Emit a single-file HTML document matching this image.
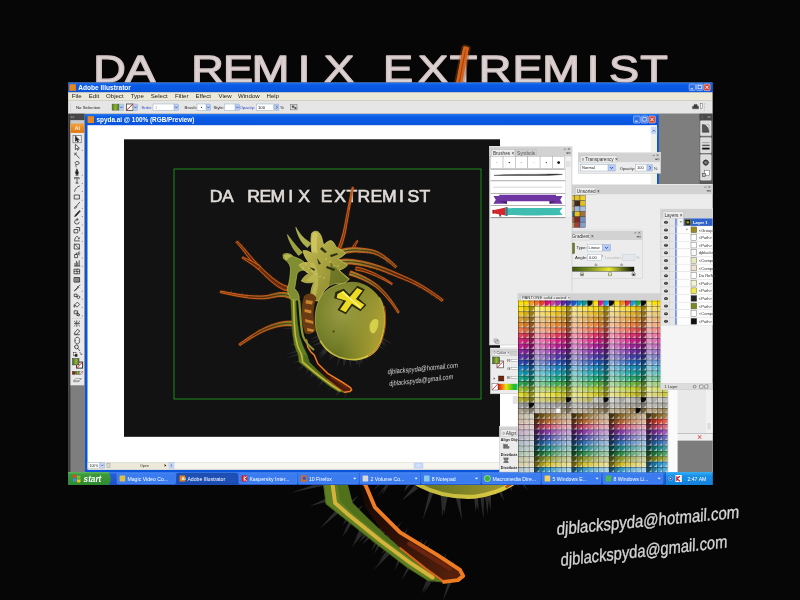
<!DOCTYPE html>
<html lang="en"><head><meta charset="utf-8"><title>DA REMIX EXTREMIST</title>
<style>
html,body{margin:0;padding:0;background:#060606;overflow:hidden}
svg{display:block;filter:blur(0.45px)}
text{white-space:pre}
</style></head><body>
<svg width="800" height="600" viewBox="0 0 800 600">
<defs><radialGradient id="abdo" cx="0.42" cy="0.38" r="0.72"><stop offset="0" stop-color="#9c9c42"/><stop offset="0.5" stop-color="#7c842e"/><stop offset="0.85" stop-color="#66721f"/><stop offset="1" stop-color="#6c7420"/></radialGradient><linearGradient id="abdo2" x1="0" y1="0" x2="1" y2="0.25"><stop offset="0.55" stop-color="#b8a838" stop-opacity="0"/><stop offset="1" stop-color="#bcaa38" stop-opacity="0.75"/></linearGradient><linearGradient id="legin" gradientUnits="userSpaceOnUse" x1="310" y1="350" x2="348" y2="390"><stop offset="0" stop-color="#0c0604"/><stop offset="0.45" stop-color="#2a0e06"/><stop offset="1" stop-color="#54200c"/></linearGradient><linearGradient id="lgR" gradientUnits="userSpaceOnUse" x1="335" y1="0" x2="400" y2="0"><stop offset="0" stop-color="#a8a03c"/><stop offset="0.5" stop-color="#86702a"/><stop offset="1" stop-color="#74300e"/></linearGradient><linearGradient id="lgL" gradientUnits="userSpaceOnUse" x1="292" y1="0" x2="240" y2="0"><stop offset="0" stop-color="#7c8c2c"/><stop offset="0.4" stop-color="#7a5a1c"/><stop offset="1" stop-color="#8a3c10"/></linearGradient><linearGradient id="rim" x1="1" y1="0" x2="0" y2="1"><stop offset="0" stop-color="#a89c30"/><stop offset="0.5" stop-color="#e2d040"/><stop offset="1" stop-color="#b8b040"/></linearGradient><linearGradient id="ceph" x1="0" y1="0" x2="1" y2="1"><stop offset="0" stop-color="#c8c058"/><stop offset="0.5" stop-color="#a6a03e"/><stop offset="1" stop-color="#7e8028"/></linearGradient><g id="spyup"><path d="M340.2 249.5 L340.9 247.6 L341.6 245.7 L342.3 243.8 L342.9 241.7 L343.5 239.7 L344.1 237.6 L344.6 235.5 L345.1 233.4 L345.6 231.3 L346.0 229.2 L346.5 225.8 L347.2 222.2 L347.8 218.5 L348.5 214.5 L349.2 210.4 L349.9 206.2 L350.7 201.8 L351.6 197.2 L352.5 192.4 L353.4 187.5 L352.2 187.3 L351.1 192.2 L350.2 196.9 L349.3 201.5 L348.4 205.9 L347.6 210.2 L346.8 214.2 L346.1 218.1 L345.4 221.9 L344.7 225.4 L344.0 228.8 L343.6 230.9 L343.1 232.9 L342.5 235.0 L341.9 237.0 L341.3 239.0 L340.7 241.0 L340.0 243.0 L339.3 244.9 L338.5 246.7 L337.8 248.5Z" fill="none" stroke="#7a3a10" stroke-opacity="0.3" stroke-width="2.4" stroke-linejoin="round"/><path d="M340.2 249.5 L340.9 247.6 L341.6 245.7 L342.3 243.8 L342.9 241.7 L343.5 239.7 L344.1 237.6 L344.6 235.5 L345.1 233.4 L345.6 231.3 L346.0 229.2 L346.5 225.8 L347.2 222.2 L347.8 218.5 L348.5 214.5 L349.2 210.4 L349.9 206.2 L350.7 201.8 L351.6 197.2 L352.5 192.4 L353.4 187.5 L352.2 187.3 L351.1 192.2 L350.2 196.9 L349.3 201.5 L348.4 205.9 L347.6 210.2 L346.8 214.2 L346.1 218.1 L345.4 221.9 L344.7 225.4 L344.0 228.8 L343.6 230.9 L343.1 232.9 L342.5 235.0 L341.9 237.0 L341.3 239.0 L340.7 241.0 L340.0 243.0 L339.3 244.9 L338.5 246.7 L337.8 248.5Z" fill="#a8440e" stroke="#d8641c" stroke-width="0.9" stroke-linejoin="round"/><path d="M339.0 249.0 L339.7 247.2 L340.4 245.3 L341.1 243.4 L341.8 241.4 L342.4 239.4 L343.0 237.3 L343.6 235.3 L344.1 233.2 L344.6 231.1 L345.0 229.0 L345.6 225.6 L346.3 222.0 L346.9 218.3 L347.6 214.4 L348.4 210.3" fill="none" stroke="#3c1608" stroke-opacity="0.7" stroke-width="0.54" stroke-linecap="round"/></g><g id="spy"><path d="M343.1 358.3 L343.7 367.2 L344.9 358.7z" fill="#2b2b2b"/><path d="M344.2 358.6 L343.4 367.1 L346.0 359.0z" fill="#2b2b2b"/><path d="M324.4 348.3 L320.3 355.6 L325.8 349.4z" fill="#2b2b2b"/><path d="M370.3 352.1 L373.1 356.1 L371.9 351.2z" fill="#2b2b2b"/><path d="M320.9 341.3 L312.2 346.7 L321.6 342.9z" fill="#2b2b2b"/><path d="M319.1 337.4 L311.0 343.5 L319.9 339.1z" fill="#2b2b2b"/><path d="M360.0 357.3 L361.0 366.5 L361.8 357.0z" fill="#2b2b2b"/><path d="M318.2 335.4 L308.7 339.8 L318.9 337.0z" fill="#2b2b2b"/><path d="M324.7 348.6 L320.0 354.1 L326.1 349.7z" fill="#2b2b2b"/><path d="M344.1 358.5 L344.4 366.5 L345.8 359.0z" fill="#2b2b2b"/><path d="M348.7 359.4 L351.3 368.8 L350.5 359.1z" fill="#2b2b2b"/><path d="M360.8 357.2 L362.2 365.1 L362.5 356.9z" fill="#2b2b2b"/><path d="M381.4 338.9 L394.6 345.2 L382.4 337.4z" fill="#2b2b2b"/><path d="M364.2 355.7 L367.5 361.3 L365.7 354.8z" fill="#2b2b2b"/><path d="M330.6 353.3 L329.0 357.7 L332.0 354.4z" fill="#2b2b2b"/><path d="M338.8 357.2 L336.2 368.5 L340.5 357.6z" fill="#2b2b2b"/><path d="M379.5 341.8 L386.7 347.4 L380.5 340.3z" fill="#2b2b2b"/><path d="M325.9 349.5 L318.9 359.4 L327.3 350.6z" fill="#2b2b2b"/><path d="M380.6 340.2 L385.8 343.6 L381.6 338.7z" fill="#2b2b2b"/><path d="M358.0 357.7 L359.5 368.3 L359.8 357.4z" fill="#2b2b2b"/><path d="M320.8 341.0 L316.4 344.8 L321.5 342.6z" fill="#2b2b2b"/><path d="M367.8 353.6 L370.6 357.7 L369.4 352.7z" fill="#2b2b2b"/><path d="M321.3 342.1 L318.0 344.9 L322.0 343.7z" fill="#2b2b2b"/><path d="M324.0 348.0 L318.8 355.6 L325.4 349.1z" fill="#2b2b2b"/><path d="M324.7 348.6 L317.0 357.3 L326.1 349.7z" fill="#2b2b2b"/><path d="M359.2 357.5 L360.8 362.5 L361.0 357.2z" fill="#2b2b2b"/><path d="M326.1 349.7 L324.2 355.3 L327.5 350.8z" fill="#2b2b2b"/><path d="M371.1 351.7 L376.6 357.2 L372.6 350.8z" fill="#2b2b2b"/><path d="M325.9 349.6 L323.2 356.0 L327.3 350.7z" fill="#2b2b2b"/><path d="M359.0 357.5 L362.1 362.4 L360.8 357.2z" fill="#2b2b2b"/><path d="M326.1 349.7 L323.6 355.3 L327.5 350.8z" fill="#2b2b2b"/><path d="M333.0 355.2 L328.1 361.1 L334.4 356.4z" fill="#2b2b2b"/><path d="M320.9 341.2 L311.7 345.9 L321.6 342.8z" fill="#2b2b2b"/><path d="M355.6 358.1 L357.6 365.3 L357.4 357.8z" fill="#2b2b2b"/><path d="M379.5 341.7 L387.3 345.6 L380.5 340.2z" fill="#2b2b2b"/><path d="M375.1 348.4 L379.4 350.8 L376.1 346.9z" fill="#2b2b2b"/><path d="M377.1 345.3 L385.5 350.8 L378.1 343.8z" fill="#2b2b2b"/><path d="M324.7 348.5 L321.1 357.3 L326.1 349.7z" fill="#2b2b2b"/><path d="M325.1 348.9 L320.5 359.1 L326.5 350.0z" fill="#2b2b2b"/><path d="M355.8 358.1 L356.5 365.7 L357.6 357.8z" fill="#2b2b2b"/><path d="M294.3 327.0 L281.2 329.0 L294.5 328.8z" fill="#2b2b2b"/><path d="M325.6 377.8 L324.1 383.4 L327.1 378.7z" fill="#2b2b2b"/><path d="M317.0 372.2 L312.9 377.9 L318.4 373.3z" fill="#2b2b2b"/><path d="M326.9 378.5 L324.6 382.9 L328.4 379.5z" fill="#2b2b2b"/><path d="M314.0 370.0 L308.9 379.2 L315.5 371.1z" fill="#2b2b2b"/><path d="M298.1 350.0 L286.0 354.6 L298.7 351.7z" fill="#2b2b2b"/><path d="M294.1 324.8 L287.9 326.3 L294.3 326.6z" fill="#2b2b2b"/><path d="M294.5 329.2 L288.9 330.6 L294.7 330.9z" fill="#2b2b2b"/><path d="M315.1 370.8 L312.4 375.4 L316.5 371.9z" fill="#2b2b2b"/><path d="M339.6 385.8 L336.0 396.8 L341.2 386.6z" fill="#2b2b2b"/><path d="M324.5 377.1 L319.1 384.9 L326.1 378.0z" fill="#2b2b2b"/><path d="M294.3 326.6 L291.1 327.9 L294.4 328.4z" fill="#2b2b2b"/><path d="M325.3 377.6 L317.1 388.0 L326.8 378.5z" fill="#2b2b2b"/><path d="M320.1 374.3 L317.6 381.5 L321.7 375.3z" fill="#2b2b2b"/><path d="M299.3 353.3 L285.7 358.1 L299.9 355.0z" fill="#2b2b2b"/><path d="M313.0 369.2 L309.7 377.7 L314.4 370.3z" fill="#2b2b2b"/><path d="M328.2 379.4 L325.3 388.0 L329.7 380.3z" fill="#2b2b2b"/><path d="M341.2 386.6 L339.6 393.1 L342.9 387.4z" fill="#2b2b2b"/><path d="M340.3 386.1 L335.7 396.3 L341.9 386.9z" fill="#2b2b2b"/><path d="M332.5 382.0 L327.9 391.8 L334.0 383.0z" fill="#2b2b2b"/><path d="M319.2 373.8 L316.5 380.2 L320.8 374.7z" fill="#2b2b2b"/><path d="M317.9 373.0 L316.6 377.4 L319.5 373.9z" fill="#2b2b2b"/><path d="M346.7 389.4 L343.9 399.6 L348.3 390.2z" fill="#2b2b2b"/><path d="M301.4 359.2 L292.7 363.3 L302.0 360.9z" fill="#2b2b2b"/><path d="M304.5 362.9 L296.6 372.0 L306.0 364.0z" fill="#2b2b2b"/><path d="M329.3 380.0 L328.0 384.1 L330.8 381.0z" fill="#2b2b2b"/><path d="M307.8 365.3 L305.6 370.5 L309.2 366.4z" fill="#2b2b2b"/><path d="M309.1 366.3 L306.3 374.0 L310.5 367.4z" fill="#2b2b2b"/><path d="M297.4 347.9 L293.4 350.1 L298.0 349.6z" fill="#2b2b2b"/><path d="M323.5 376.4 L320.3 381.7 L325.0 377.4z" fill="#2b2b2b"/><path d="M340.6 386.3 L337.0 395.0 L342.2 387.1z" fill="#2b2b2b"/><path d="M339.6 385.8 L338.0 392.1 L341.2 386.6z" fill="#2b2b2b"/><path d="M295.9 343.0 L289.7 344.6 L296.1 344.7z" fill="#2b2b2b"/><path d="M341.2 386.6 L336.4 396.9 L342.8 387.4z" fill="#2b2b2b"/><path d="M315.9 371.4 L311.5 377.2 L317.4 372.5z" fill="#2b2b2b"/><path d="M309.0 366.2 L305.2 375.3 L310.4 367.3z" fill="#2b2b2b"/><path d="M326.1 378.1 L330.5 371.2 L327.7 379.0z" fill="#2b2b2b"/><path d="M295.6 340.0 L300.7 340.3 L295.8 341.8z" fill="#2b2b2b"/><path d="M296.1 344.3 L301.9 343.4 L296.7 346.0z" fill="#2b2b2b"/><path d="M308.8 366.1 L313.3 362.7 L310.2 367.2z" fill="#2b2b2b"/><path d="M345.9 389.0 L348.1 384.3 L347.5 389.8z" fill="#2b2b2b"/><path d="M294.2 326.3 L300.6 326.3 L294.4 328.0z" fill="#2b2b2b"/><path d="M325.9 378.0 L329.5 373.0 L327.5 378.9z" fill="#2b2b2b"/><path d="M332.6 382.1 L334.4 379.9 L334.1 383.1z" fill="#2b2b2b"/><path d="M305.7 363.7 L308.8 361.8 L307.1 364.8z" fill="#2b2b2b"/><path d="M296.8 346.3 L299.9 345.9 L297.4 348.0z" fill="#2b2b2b"/><path d="M319.6 374.0 L323.7 369.6 L321.1 374.9z" fill="#2b2b2b"/><path d="M321.6 375.3 L328.4 369.1 L323.2 376.2z" fill="#2b2b2b"/><path d="M324.0 376.7 L326.9 373.7 L325.5 377.7z" fill="#2b2b2b"/><path d="M295.7 341.0 L298.8 341.6 L295.9 342.8z" fill="#2b2b2b"/><path d="M326.4 378.2 L328.8 375.3 L327.9 379.2z" fill="#2b2b2b"/><path d="M300.1 355.5 L307.2 354.0 L300.7 357.2z" fill="#2b2b2b"/><path d="M318.4 373.2 L322.7 367.3 L319.9 374.2z" fill="#2b2b2b"/><path d="M332.6 382.1 L336.1 375.4 L334.1 383.1z" fill="#2b2b2b"/><path d="M342.5 387.2 L345.2 381.1 L344.1 388.0z" fill="#2b2b2b"/><path d="M305.6 363.7 L311.7 358.8 L307.0 364.8z" fill="#2b2b2b"/><path d="M301.0 358.2 L308.6 356.9 L301.6 359.9z" fill="#2b2b2b"/><path d="M333.0 382.4 L338.2 375.5 L334.5 383.3z" fill="#2b2b2b"/><path d="M321.3 375.1 L324.8 372.0 L322.9 376.0z" fill="#2b2b2b"/><path d="M334.5 383.2 L339.1 377.5 L336.1 384.0z" fill="#2b2b2b"/><path d="M278.2 295.6 L279.4 290.6 L276.5 295.3z" fill="#2b2b2b"/><path d="M224.2 292.4 L224.6 288.7 L222.5 292.1z" fill="#2b2b2b"/><path d="M271.1 295.7 L270.2 291.0 L269.3 296.0z" fill="#2b2b2b"/><path d="M269.2 296.0 L267.9 294.2 L267.4 296.3z" fill="#2b2b2b"/><path d="M254.7 297.5 L254.4 293.0 L252.9 297.3z" fill="#2b2b2b"/><path d="M290.1 297.8 L289.0 293.2 L288.3 297.5z" fill="#2b2b2b"/><path d="M234.9 294.6 L234.3 292.1 L233.1 294.2z" fill="#2b2b2b"/><path d="M235.6 294.7 L234.8 292.3 L233.8 294.4z" fill="#2b2b2b"/><path d="M257.5 297.9 L257.9 293.6 L255.7 297.7z" fill="#2b2b2b"/><path d="M243.0 295.9 L242.8 290.7 L241.2 295.6z" fill="#2b2b2b"/><path d="M225.9 292.8 L225.2 290.6 L224.2 292.4z" fill="#2b2b2b"/><path d="M256.7 297.8 L256.5 294.9 L254.9 297.6z" fill="#2b2b2b"/><path d="M247.2 296.5 L247.5 292.8 L245.4 296.2z" fill="#2b2b2b"/><path d="M253.9 297.4 L253.2 294.5 L252.1 297.2z" fill="#2b2b2b"/><path d="M232.2 294.0 L231.5 289.1 L230.4 293.7z" fill="#2b2b2b"/><path d="M231.8 294.0 L232.0 288.8 L230.1 293.6z" fill="#2b2b2b"/><path d="M252.8 297.3 L252.3 294.7 L251.0 297.0z" fill="#2b2b2b"/><path d="M258.6 298.1 L257.4 294.1 L256.8 297.8z" fill="#2b2b2b"/><path d="M242.5 343.5 L239.7 340.9 L240.9 344.4z" fill="#2b2b2b"/><path d="M251.9 337.8 L249.2 335.1 L250.4 338.7z" fill="#2b2b2b"/><path d="M258.1 334.0 L256.3 332.8 L256.5 335.0z" fill="#2b2b2b"/><path d="M272.8 326.9 L272.0 322.2 L271.1 327.3z" fill="#2b2b2b"/><path d="M279.5 325.5 L277.3 322.4 L277.7 325.9z" fill="#2b2b2b"/><path d="M271.9 327.1 L271.0 322.8 L270.2 327.5z" fill="#2b2b2b"/><path d="M270.0 327.6 L268.0 325.0 L268.2 328.0z" fill="#2b2b2b"/><path d="M262.2 331.5 L257.9 327.7 L260.6 332.5z" fill="#2b2b2b"/><path d="M253.1 337.0 L251.1 335.9 L251.6 338.0z" fill="#2b2b2b"/><path d="M281.4 325.1 L279.3 321.2 L279.7 325.5z" fill="#2b2b2b"/><path d="M275.5 326.4 L273.0 322.7 L273.8 326.7z" fill="#2b2b2b"/><path d="M255.8 335.4 L254.0 334.0 L254.3 336.3z" fill="#2b2b2b"/><path d="M280.4 325.3 L279.0 323.1 L278.6 325.7z" fill="#2b2b2b"/><path d="M271.8 327.2 L270.1 324.4 L270.0 327.6z" fill="#2b2b2b"/><path d="M267.1 328.5 L264.8 327.0 L265.6 329.5z" fill="#2b2b2b"/><path d="M261.4 332.0 L258.6 329.1 L259.9 332.9z" fill="#2b2b2b"/><path d="M243.8 250.1 L246.6 247.1 L242.7 248.7z" fill="#2b2b2b"/><path d="M268.8 277.2 L271.5 273.7 L267.5 276.0z" fill="#2b2b2b"/><path d="M241.7 247.6 L242.8 245.2 L240.5 246.2z" fill="#2b2b2b"/><path d="M240.8 246.6 L242.6 244.4 L239.7 245.2z" fill="#2b2b2b"/><path d="M242.3 248.3 L243.0 246.3 L241.1 246.9z" fill="#2b2b2b"/><path d="M249.1 256.4 L249.9 254.1 L247.9 255.0z" fill="#2b2b2b"/><path d="M244.6 251.1 L246.7 248.5 L243.5 249.7z" fill="#2b2b2b"/><path d="M272.9 281.1 L274.5 278.4 L271.6 279.8z" fill="#2b2b2b"/><path d="M277.0 285.0 L278.1 282.7 L275.7 283.7z" fill="#2b2b2b"/><path d="M241.3 247.1 L243.4 243.4 L240.1 245.7z" fill="#2b2b2b"/><path d="M258.3 267.4 L260.8 264.1 L257.2 266.0z" fill="#2b2b2b"/><path d="M250.8 258.4 L251.4 256.3 L249.6 257.0z" fill="#2b2b2b"/><path d="M273.6 281.8 L274.2 279.9 L272.3 280.6z" fill="#2b2b2b"/><path d="M258.0 266.9 L259.4 264.1 L256.8 265.6z" fill="#2b2b2b"/><path d="M270.6 279.0 L271.9 276.7 L269.3 277.7z" fill="#2b2b2b"/><path d="M238.0 243.2 L240.0 239.5 L236.8 241.8z" fill="#2b2b2b"/><path d="M359.5 250.2 L359.6 254.7 L361.2 250.5z" fill="#2b2b2b"/><path d="M386.3 259.9 L385.5 262.4 L387.8 260.9z" fill="#2b2b2b"/><path d="M376.9 252.9 L376.1 255.7 L378.3 254.0z" fill="#2b2b2b"/><path d="M357.6 249.9 L358.6 253.6 L359.4 250.2z" fill="#2b2b2b"/><path d="M364.0 250.9 L364.8 253.9 L365.8 251.2z" fill="#2b2b2b"/><path d="M372.5 252.3 L372.7 254.5 L374.3 252.6z" fill="#2b2b2b"/><path d="M376.8 252.8 L376.9 254.6 L378.2 253.9z" fill="#2b2b2b"/><path d="M387.7 260.9 L387.0 264.4 L389.2 262.0z" fill="#2b2b2b"/><path d="M381.2 256.1 L380.4 258.8 L382.6 257.2z" fill="#2b2b2b"/><path d="M376.4 252.6 L375.2 256.7 L377.9 253.7z" fill="#2b2b2b"/><path d="M366.9 251.4 L367.7 255.7 L368.7 251.7z" fill="#2b2b2b"/><path d="M386.8 260.2 L385.0 264.0 L388.3 261.3z" fill="#2b2b2b"/><path d="M431.3 293.3 L430.3 297.3 L432.8 294.3z" fill="#2b2b2b"/><path d="M418.9 285.6 L417.5 289.3 L420.4 286.5z" fill="#2b2b2b"/><path d="M414.6 282.9 L414.3 284.8 L416.1 283.8z" fill="#2b2b2b"/><path d="M394.3 273.7 L394.5 275.5 L396.0 274.4z" fill="#2b2b2b"/><path d="M407.1 278.8 L406.2 282.3 L408.7 279.5z" fill="#2b2b2b"/><path d="M435.9 296.2 L434.6 299.6 L437.5 297.2z" fill="#2b2b2b"/><path d="M408.6 279.5 L408.3 282.8 L410.3 280.1z" fill="#2b2b2b"/><path d="M388.4 271.4 L387.9 275.9 L390.1 272.0z" fill="#2b2b2b"/><path d="M412.6 281.6 L412.2 285.3 L414.1 282.6z" fill="#2b2b2b"/><path d="M353.4 262.3 L353.9 265.8 L355.1 262.8z" fill="#2b2b2b"/><path d="M376.5 267.9 L376.2 270.8 L378.3 268.4z" fill="#2b2b2b"/><path d="M370.5 266.5 L370.2 269.2 L372.2 266.9z" fill="#2b2b2b"/><path d="M376.0 267.8 L375.9 272.1 L377.7 268.2z" fill="#2b2b2b"/><path d="M397.3 274.9 L396.6 279.3 L398.9 275.6z" fill="#2b2b2b"/><path d="M440.8 299.2 L440.2 302.6 L442.3 300.2z" fill="#2b2b2b"/><path d="M358.7 263.6 L359.2 267.0 L360.4 264.0z" fill="#2b2b2b"/><path d="M355.6 262.9 L354.7 267.3 L357.3 263.3z" fill="#2b2b2b"/><path d="M394.5 273.8 L394.6 276.0 L396.2 274.5z" fill="#2b2b2b"/><path d="M287.7 286.3 L285.6 285.7 L283.4 284.9 L281.0 283.7 L278.4 282.1 L275.6 280.1 L272.6 277.8 L269.5 275.2 L266.3 272.3 L262.9 269.2 L259.4 265.7 L257.0 263.1 L254.6 260.5 L252.2 257.8 L249.9 255.2 L247.7 252.6 L245.5 250.0 L243.4 247.6 L241.3 245.2 L239.3 243.1 L237.3 241.1 L236.1 242.3 L238.0 244.3 L239.8 246.5 L241.8 248.9 L243.8 251.4 L245.8 254.1 L247.9 256.8 L250.1 259.6 L252.4 262.3 L254.7 265.1 L257.2 267.9 L260.6 271.5 L263.9 274.8 L267.1 277.9 L270.2 280.7 L273.2 283.2 L276.1 285.4 L278.8 287.3 L281.5 288.8 L284.0 290.0 L286.3 290.7Z" fill="none" stroke="#7a3a10" stroke-opacity="0.3" stroke-width="2.4" stroke-linejoin="round"/><path d="M287.7 286.3 L285.6 285.7 L283.4 284.9 L281.0 283.7 L278.4 282.1 L275.6 280.1 L272.6 277.8 L269.5 275.2 L266.3 272.3 L262.9 269.2 L259.4 265.7 L257.0 263.1 L254.6 260.5 L252.2 257.8 L249.9 255.2 L247.7 252.6 L245.5 250.0 L243.4 247.6 L241.3 245.2 L239.3 243.1 L237.3 241.1 L236.1 242.3 L238.0 244.3 L239.8 246.5 L241.8 248.9 L243.8 251.4 L245.8 254.1 L247.9 256.8 L250.1 259.6 L252.4 262.3 L254.7 265.1 L257.2 267.9 L260.6 271.5 L263.9 274.8 L267.1 277.9 L270.2 280.7 L273.2 283.2 L276.1 285.4 L278.8 287.3 L281.5 288.8 L284.0 290.0 L286.3 290.7Z" fill="#7c3410" stroke="#d8641c" stroke-width="0.9" stroke-linejoin="round"/><path d="M287.0 288.5 L284.8 287.9 L282.5 286.8 L279.9 285.5 L277.2 283.7 L274.4 281.7 L271.4 279.3 L268.3 276.6 L265.1 273.6 L261.8 270.3 L258.3 266.8 L255.8 264.1 L253.5 261.4 L251.2 258.7 L248.9 256.0 L246.8 253.3" fill="none" stroke="#3c1608" stroke-opacity="0.7" stroke-width="0.96" stroke-linecap="round"/><path d="M260.6 266.5 L258.6 265.1 L256.6 263.9 L254.6 262.7 L252.7 261.7 L250.9 260.7 L249.1 259.8 L247.4 259.0 L245.8 258.3 L244.3 257.6 L242.8 256.9 L242.2 258.1 L243.5 259.0 L244.9 259.9 L246.4 260.8 L248.0 261.8 L249.6 262.9 L251.3 264.0 L253.0 265.3 L254.8 266.6 L256.5 268.0 L258.4 269.5Z" fill="none" stroke="#7a3a10" stroke-opacity="0.3" stroke-width="2.4" stroke-linejoin="round"/><path d="M260.6 266.5 L258.6 265.1 L256.6 263.9 L254.6 262.7 L252.7 261.7 L250.9 260.7 L249.1 259.8 L247.4 259.0 L245.8 258.3 L244.3 257.6 L242.8 256.9 L242.2 258.1 L243.5 259.0 L244.9 259.9 L246.4 260.8 L248.0 261.8 L249.6 262.9 L251.3 264.0 L253.0 265.3 L254.8 266.6 L256.5 268.0 L258.4 269.5Z" fill="#7c3410" stroke="#d8641c" stroke-width="0.9" stroke-linejoin="round"/><path d="M259.5 268.0 L257.6 266.6 L255.7 265.2 L253.8 264.0 L252.0 262.9 L250.2 261.8 L248.6 260.8 L246.9 259.9" fill="none" stroke="#3c1608" stroke-opacity="0.7" stroke-width="0.77" stroke-linecap="round"/><path d="M292.9 294.9 L290.5 293.9 L288.0 293.1 L285.6 292.7 L283.2 292.5 L280.9 292.6 L278.7 292.8 L276.5 293.2 L274.2 293.7 L272.0 294.3 L269.7 295.0 L266.1 295.6 L262.1 296.0 L257.7 296.0 L253.1 295.9 L248.2 295.5 L243.1 294.9 L237.7 294.1 L232.2 293.2 L226.5 292.1 L220.7 291.0 L220.3 292.6 L226.1 293.9 L231.8 295.1 L237.3 296.2 L242.7 297.1 L247.9 297.9 L252.9 298.4 L257.7 298.7 L262.2 298.8 L266.4 298.6 L270.3 298.0 L272.7 297.5 L275.0 297.1 L277.1 296.7 L279.1 296.5 L281.1 296.4 L283.0 296.5 L284.9 296.8 L286.8 297.3 L288.8 298.1 L291.1 299.1Z" fill="none" stroke="#7a3a10" stroke-opacity="0.3" stroke-width="2.4" stroke-linejoin="round"/><path d="M292.9 294.9 L290.5 293.9 L288.0 293.1 L285.6 292.7 L283.2 292.5 L280.9 292.6 L278.7 292.8 L276.5 293.2 L274.2 293.7 L272.0 294.3 L269.7 295.0 L266.1 295.6 L262.1 296.0 L257.7 296.0 L253.1 295.9 L248.2 295.5 L243.1 294.9 L237.7 294.1 L232.2 293.2 L226.5 292.1 L220.7 291.0 L220.3 292.6 L226.1 293.9 L231.8 295.1 L237.3 296.2 L242.7 297.1 L247.9 297.9 L252.9 298.4 L257.7 298.7 L262.2 298.8 L266.4 298.6 L270.3 298.0 L272.7 297.5 L275.0 297.1 L277.1 296.7 L279.1 296.5 L281.1 296.4 L283.0 296.5 L284.9 296.8 L286.8 297.3 L288.8 298.1 L291.1 299.1Z" fill="url(#lgL)" stroke="#d8641c" stroke-width="0.9" stroke-linejoin="round"/><path d="M292.0 297.0 L289.7 296.0 L287.4 295.2 L285.2 294.7 L283.1 294.5 L281.0 294.5 L278.9 294.7 L276.8 295.0 L274.6 295.4 L272.3 295.9 L270.0 296.5 L266.2 297.1 L262.1 297.4 L257.7 297.4 L253.0 297.1 L248.1 296.7" fill="none" stroke="#3c1608" stroke-opacity="0.7" stroke-width="0.96" stroke-linecap="round"/><path d="M292.1 321.2 L289.4 321.2 L286.7 321.3 L284.1 321.6 L281.6 322.0 L279.2 322.5 L276.9 323.2 L274.5 323.9 L272.2 324.7 L269.8 325.6 L267.4 326.5 L264.4 327.9 L261.4 329.5 L258.4 331.1 L255.5 332.9 L252.6 334.7 L249.7 336.6 L246.9 338.5 L244.2 340.4 L241.6 342.3 L239.0 344.1 L240.0 345.5 L242.6 343.8 L245.3 342.0 L248.1 340.2 L250.9 338.5 L253.8 336.7 L256.7 335.1 L259.7 333.5 L262.7 332.0 L265.6 330.7 L268.6 329.5 L270.9 328.7 L273.2 328.0 L275.5 327.3 L277.8 326.8 L280.0 326.3 L282.3 326.0 L284.6 325.8 L286.9 325.7 L289.4 325.7 L291.9 325.8Z" fill="none" stroke="#7a3a10" stroke-opacity="0.3" stroke-width="2.4" stroke-linejoin="round"/><path d="M292.1 321.2 L289.4 321.2 L286.7 321.3 L284.1 321.6 L281.6 322.0 L279.2 322.5 L276.9 323.2 L274.5 323.9 L272.2 324.7 L269.8 325.6 L267.4 326.5 L264.4 327.9 L261.4 329.5 L258.4 331.1 L255.5 332.9 L252.6 334.7 L249.7 336.6 L246.9 338.5 L244.2 340.4 L241.6 342.3 L239.0 344.1 L240.0 345.5 L242.6 343.8 L245.3 342.0 L248.1 340.2 L250.9 338.5 L253.8 336.7 L256.7 335.1 L259.7 333.5 L262.7 332.0 L265.6 330.7 L268.6 329.5 L270.9 328.7 L273.2 328.0 L275.5 327.3 L277.8 326.8 L280.0 326.3 L282.3 326.0 L284.6 325.8 L286.9 325.7 L289.4 325.7 L291.9 325.8Z" fill="url(#lgL)" stroke="#d8641c" stroke-width="0.9" stroke-linejoin="round"/><path d="M292.0 323.5 L289.4 323.4 L286.8 323.5 L284.4 323.7 L282.0 324.0 L279.6 324.4 L277.3 325.0 L275.0 325.6 L272.7 326.3 L270.4 327.1 L268.0 328.0 L265.0 329.3 L262.0 330.7 L259.0 332.3 L256.1 334.0 L253.2 335.7" fill="none" stroke="#3c1608" stroke-opacity="0.7" stroke-width="0.96" stroke-linecap="round"/><path d="M340.2 249.5 L340.9 247.6 L341.6 245.7 L342.3 243.8 L342.9 241.7 L343.5 239.7 L344.1 237.6 L344.6 235.5 L345.1 233.4 L345.6 231.3 L346.0 229.2 L346.5 225.8 L347.2 222.2 L347.8 218.5 L348.5 214.5 L349.2 210.4 L349.9 206.2 L350.7 201.8 L351.6 197.2 L352.5 192.4 L353.4 187.5 L352.2 187.3 L351.1 192.2 L350.2 196.9 L349.3 201.5 L348.4 205.9 L347.6 210.2 L346.8 214.2 L346.1 218.1 L345.4 221.9 L344.7 225.4 L344.0 228.8 L343.6 230.9 L343.1 232.9 L342.5 235.0 L341.9 237.0 L341.3 239.0 L340.7 241.0 L340.0 243.0 L339.3 244.9 L338.5 246.7 L337.8 248.5Z" fill="none" stroke="#7a3a10" stroke-opacity="0.3" stroke-width="2.4" stroke-linejoin="round"/><path d="M340.2 249.5 L340.9 247.6 L341.6 245.7 L342.3 243.8 L342.9 241.7 L343.5 239.7 L344.1 237.6 L344.6 235.5 L345.1 233.4 L345.6 231.3 L346.0 229.2 L346.5 225.8 L347.2 222.2 L347.8 218.5 L348.5 214.5 L349.2 210.4 L349.9 206.2 L350.7 201.8 L351.6 197.2 L352.5 192.4 L353.4 187.5 L352.2 187.3 L351.1 192.2 L350.2 196.9 L349.3 201.5 L348.4 205.9 L347.6 210.2 L346.8 214.2 L346.1 218.1 L345.4 221.9 L344.7 225.4 L344.0 228.8 L343.6 230.9 L343.1 232.9 L342.5 235.0 L341.9 237.0 L341.3 239.0 L340.7 241.0 L340.0 243.0 L339.3 244.9 L338.5 246.7 L337.8 248.5Z" fill="#a8440e" stroke="#d8641c" stroke-width="0.9" stroke-linejoin="round"/><path d="M339.0 249.0 L339.7 247.2 L340.4 245.3 L341.1 243.4 L341.8 241.4 L342.4 239.4 L343.0 237.3 L343.6 235.3 L344.1 233.2 L344.6 231.1 L345.0 229.0 L345.6 225.6 L346.3 222.0 L346.9 218.3 L347.6 214.4 L348.4 210.3" fill="none" stroke="#3c1608" stroke-opacity="0.7" stroke-width="0.54" stroke-linecap="round"/><path d="M353.7 250.5 L354.0 249.3 L354.4 248.2 L354.9 247.1 L355.3 246.1 L355.7 245.1 L356.2 244.2 L356.6 243.4 L357.0 242.5 L357.5 241.8 L357.9 241.0 L357.1 240.6 L356.6 241.2 L356.0 241.9 L355.5 242.6 L354.9 243.4 L354.3 244.3 L353.7 245.2 L353.1 246.2 L352.5 247.3 L351.9 248.4 L351.3 249.5Z" fill="none" stroke="#7a3a10" stroke-opacity="0.3" stroke-width="2.4" stroke-linejoin="round"/><path d="M353.7 250.5 L354.0 249.3 L354.4 248.2 L354.9 247.1 L355.3 246.1 L355.7 245.1 L356.2 244.2 L356.6 243.4 L357.0 242.5 L357.5 241.8 L357.9 241.0 L357.1 240.6 L356.6 241.2 L356.0 241.9 L355.5 242.6 L354.9 243.4 L354.3 244.3 L353.7 245.2 L353.1 246.2 L352.5 247.3 L351.9 248.4 L351.3 249.5Z" fill="#7a2c0c" stroke="#d8641c" stroke-width="0.9" stroke-linejoin="round"/><path d="M352.5 250.0 L353.0 248.8 L353.5 247.7 L354.0 246.7 L354.5 245.7 L355.0 244.7 L355.5 243.8 L356.0 243.0" fill="none" stroke="#3c1608" stroke-opacity="0.7" stroke-width="0.51" stroke-linecap="round"/><path d="M334.0 257.4 L336.6 256.3 L339.1 255.3 L341.6 254.4 L344.0 253.7 L346.3 253.1 L348.7 252.7 L351.0 252.3 L353.3 252.1 L355.6 252.0 L357.9 252.1 L360.2 252.2 L362.4 252.3 L364.5 252.4 L366.5 252.5 L368.4 252.7 L370.1 253.0 L371.8 253.3 L373.4 253.6 L374.9 254.1 L376.4 254.6 L378.4 255.5 L380.4 256.6 L382.3 257.7 L384.3 258.9 L386.1 260.2 L388.0 261.6 L389.9 263.1 L391.7 264.6 L393.5 266.1 L395.4 267.7 L396.6 266.3 L394.9 264.6 L393.1 263.0 L391.3 261.4 L389.5 259.8 L387.6 258.3 L385.7 256.9 L383.8 255.5 L381.8 254.2 L379.7 253.0 L377.6 251.8 L376.0 251.1 L374.3 250.5 L372.6 250.0 L370.8 249.6 L368.9 249.2 L366.9 248.9 L364.9 248.6 L362.7 248.4 L360.5 248.1 L358.1 247.9 L355.6 247.8 L353.1 247.8 L350.6 247.9 L348.0 248.1 L345.4 248.5 L342.8 249.0 L340.1 249.7 L337.5 250.5 L334.7 251.5 L332.0 252.6Z" fill="none" stroke="#7a3a10" stroke-opacity="0.3" stroke-width="2.4" stroke-linejoin="round"/><path d="M334.0 257.4 L336.6 256.3 L339.1 255.3 L341.6 254.4 L344.0 253.7 L346.3 253.1 L348.7 252.7 L351.0 252.3 L353.3 252.1 L355.6 252.0 L357.9 252.1 L360.2 252.2 L362.4 252.3 L364.5 252.4 L366.5 252.5 L368.4 252.7 L370.1 253.0 L371.8 253.3 L373.4 253.6 L374.9 254.1 L376.4 254.6 L378.4 255.5 L380.4 256.6 L382.3 257.7 L384.3 258.9 L386.1 260.2 L388.0 261.6 L389.9 263.1 L391.7 264.6 L393.5 266.1 L395.4 267.7 L396.6 266.3 L394.9 264.6 L393.1 263.0 L391.3 261.4 L389.5 259.8 L387.6 258.3 L385.7 256.9 L383.8 255.5 L381.8 254.2 L379.7 253.0 L377.6 251.8 L376.0 251.1 L374.3 250.5 L372.6 250.0 L370.8 249.6 L368.9 249.2 L366.9 248.9 L364.9 248.6 L362.7 248.4 L360.5 248.1 L358.1 247.9 L355.6 247.8 L353.1 247.8 L350.6 247.9 L348.0 248.1 L345.4 248.5 L342.8 249.0 L340.1 249.7 L337.5 250.5 L334.7 251.5 L332.0 252.6Z" fill="url(#lgR)" stroke="#d8641c" stroke-width="0.9" stroke-linejoin="round"/><path d="M333.0 255.0 L335.7 253.9 L338.3 252.9 L340.9 252.1 L343.4 251.4 L345.9 250.8 L348.3 250.4 L350.8 250.1 L353.2 249.9 L355.6 249.9 L358.0 250.0 L360.3 250.2 L362.6 250.3 L364.7 250.5 L366.7 250.7 L368.6 251.0 L370.5 251.3 L372.2 251.6 L373.9 252.1 L375.5 252.6 L377.0 253.2 L379.1 254.2 L381.1 255.4 L383.1 256.6" fill="none" stroke="#3c1608" stroke-opacity="0.7" stroke-width="1.09" stroke-linecap="round"/><path d="M338.4 265.1 L340.1 264.8 L341.7 264.5 L343.1 264.3 L344.5 264.2 L345.8 264.1 L347.1 264.0 L348.3 264.0 L349.5 264.0 L350.7 264.0 L351.8 264.0 L355.3 264.4 L358.8 264.9 L362.3 265.5 L365.7 266.2 L369.1 267.0 L372.4 267.8 L375.6 268.7 L378.7 269.7 L381.6 270.7 L384.4 271.7 L387.3 272.8 L390.0 273.9 L392.7 274.9 L395.2 275.9 L397.6 276.9 L400.0 277.9 L402.4 278.8 L404.7 279.8 L407.1 280.7 L409.4 281.7 L412.7 283.2 L416.0 284.9 L419.3 286.6 L422.6 288.4 L425.8 290.4 L429.1 292.4 L432.3 294.5 L435.6 296.7 L438.8 298.9 L441.9 301.2 L443.1 299.8 L439.9 297.3 L436.7 295.0 L433.5 292.7 L430.3 290.5 L427.0 288.4 L423.8 286.4 L420.5 284.4 L417.2 282.6 L413.9 280.9 L410.6 279.3 L408.2 278.2 L405.9 277.1 L403.5 276.1 L401.2 275.0 L398.9 274.0 L396.4 272.9 L393.9 271.8 L391.3 270.7 L388.6 269.6 L385.6 268.3 L382.8 267.2 L379.9 266.1 L376.7 265.1 L373.5 264.1 L370.1 263.1 L366.7 262.2 L363.1 261.4 L359.5 260.7 L355.9 260.1 L352.2 259.6 L350.9 259.5 L349.7 259.4 L348.4 259.3 L347.0 259.2 L345.7 259.2 L344.2 259.3 L342.7 259.4 L341.1 259.5 L339.4 259.7 L337.6 259.9Z" fill="none" stroke="#7a3a10" stroke-opacity="0.3" stroke-width="2.4" stroke-linejoin="round"/><path d="M338.4 265.1 L340.1 264.8 L341.7 264.5 L343.1 264.3 L344.5 264.2 L345.8 264.1 L347.1 264.0 L348.3 264.0 L349.5 264.0 L350.7 264.0 L351.8 264.0 L355.3 264.4 L358.8 264.9 L362.3 265.5 L365.7 266.2 L369.1 267.0 L372.4 267.8 L375.6 268.7 L378.7 269.7 L381.6 270.7 L384.4 271.7 L387.3 272.8 L390.0 273.9 L392.7 274.9 L395.2 275.9 L397.6 276.9 L400.0 277.9 L402.4 278.8 L404.7 279.8 L407.1 280.7 L409.4 281.7 L412.7 283.2 L416.0 284.9 L419.3 286.6 L422.6 288.4 L425.8 290.4 L429.1 292.4 L432.3 294.5 L435.6 296.7 L438.8 298.9 L441.9 301.2 L443.1 299.8 L439.9 297.3 L436.7 295.0 L433.5 292.7 L430.3 290.5 L427.0 288.4 L423.8 286.4 L420.5 284.4 L417.2 282.6 L413.9 280.9 L410.6 279.3 L408.2 278.2 L405.9 277.1 L403.5 276.1 L401.2 275.0 L398.9 274.0 L396.4 272.9 L393.9 271.8 L391.3 270.7 L388.6 269.6 L385.6 268.3 L382.8 267.2 L379.9 266.1 L376.7 265.1 L373.5 264.1 L370.1 263.1 L366.7 262.2 L363.1 261.4 L359.5 260.7 L355.9 260.1 L352.2 259.6 L350.9 259.5 L349.7 259.4 L348.4 259.3 L347.0 259.2 L345.7 259.2 L344.2 259.3 L342.7 259.4 L341.1 259.5 L339.4 259.7 L337.6 259.9Z" fill="url(#lgR)" stroke="#d8641c" stroke-width="0.9" stroke-linejoin="round"/><path d="M338.0 262.5 L339.7 262.2 L341.4 262.0 L342.9 261.9 L344.4 261.7 L345.8 261.7 L347.1 261.6 L348.3 261.6 L349.6 261.7 L350.8 261.7 L352.0 261.8 L355.6 262.2 L359.2 262.8 L362.7 263.4 L366.2 264.2 L369.6 265.0 L373.0 265.9 L376.2 266.9 L379.3 267.9 L382.2 269.0 L385.0 270.0 L387.9 271.2 L390.7 272.3 L393.3 273.4 L395.8 274.4 L398.2 275.4 L400.6 276.4 L403.0 277.4 L405.3 278.4 L407.6 279.5 L410.0 280.5 L413.3 282.1" fill="none" stroke="#3c1608" stroke-opacity="0.7" stroke-width="1.09" stroke-linecap="round"/><path d="M349.4 274.9 L352.3 275.8 L355.2 276.7 L358.0 277.8 L360.8 278.9 L363.4 280.1 L366.0 281.3 L368.6 282.7 L371.0 284.1 L373.4 285.6 L375.7 287.1 L378.1 289.1 L380.6 291.3 L382.9 293.6 L385.2 296.1 L387.4 298.6 L389.6 301.2 L391.8 304.0 L393.8 306.9 L395.9 309.8 L397.9 312.9 L399.1 312.1 L397.2 309.0 L395.2 305.9 L393.2 302.9 L391.2 300.1 L389.1 297.3 L386.9 294.6 L384.6 292.0 L382.3 289.6 L379.9 287.2 L377.3 284.9 L375.0 283.2 L372.6 281.6 L370.1 280.0 L367.6 278.5 L364.9 277.0 L362.2 275.7 L359.4 274.4 L356.5 273.2 L353.6 272.1 L350.6 271.1Z" fill="none" stroke="#7a3a10" stroke-opacity="0.3" stroke-width="2.4" stroke-linejoin="round"/><path d="M349.4 274.9 L352.3 275.8 L355.2 276.7 L358.0 277.8 L360.8 278.9 L363.4 280.1 L366.0 281.3 L368.6 282.7 L371.0 284.1 L373.4 285.6 L375.7 287.1 L378.1 289.1 L380.6 291.3 L382.9 293.6 L385.2 296.1 L387.4 298.6 L389.6 301.2 L391.8 304.0 L393.8 306.9 L395.9 309.8 L397.9 312.9 L399.1 312.1 L397.2 309.0 L395.2 305.9 L393.2 302.9 L391.2 300.1 L389.1 297.3 L386.9 294.6 L384.6 292.0 L382.3 289.6 L379.9 287.2 L377.3 284.9 L375.0 283.2 L372.6 281.6 L370.1 280.0 L367.6 278.5 L364.9 277.0 L362.2 275.7 L359.4 274.4 L356.5 273.2 L353.6 272.1 L350.6 271.1Z" fill="url(#lgR)" stroke="#d8641c" stroke-width="0.9" stroke-linejoin="round"/><path d="M350.0 273.0 L353.0 273.9 L355.9 275.0 L358.7 276.1 L361.5 277.3 L364.2 278.6 L366.8 279.9 L369.4 281.3 L371.8 282.8 L374.2 284.4 L376.5 286.0 L379.0 288.2 L381.4 290.4 L383.8 292.8 L386.0 295.3 L388.2 297.9" fill="none" stroke="#3c1608" stroke-opacity="0.7" stroke-width="0.83" stroke-linecap="round"/><path d="M355.7 270.0 L358.8 270.5 L362.1 271.2 L365.5 272.2 L369.1 273.4 L372.8 274.8 L376.6 276.4 L380.4 278.2 L384.2 280.1 L388.0 282.2 L391.7 284.5 L392.3 283.5 L388.7 281.1 L385.0 278.8 L381.2 276.7 L377.4 274.7 L373.7 272.8 L369.9 271.2 L366.3 269.8 L362.8 268.6 L359.4 267.7 L356.3 267.0Z" fill="none" stroke="#7a3a10" stroke-opacity="0.3" stroke-width="2.4" stroke-linejoin="round"/><path d="M355.7 270.0 L358.8 270.5 L362.1 271.2 L365.5 272.2 L369.1 273.4 L372.8 274.8 L376.6 276.4 L380.4 278.2 L384.2 280.1 L388.0 282.2 L391.7 284.5 L392.3 283.5 L388.7 281.1 L385.0 278.8 L381.2 276.7 L377.4 274.7 L373.7 272.8 L369.9 271.2 L366.3 269.8 L362.8 268.6 L359.4 267.7 L356.3 267.0Z" fill="#7c3410" stroke="#d8641c" stroke-width="0.9" stroke-linejoin="round"/><path d="M356.0 268.5 L359.1 269.1 L362.4 269.9 L365.9 271.0 L369.5 272.3 L373.2 273.8 L377.0 275.5 L380.8 277.4" fill="none" stroke="#3c1608" stroke-opacity="0.7" stroke-width="0.64" stroke-linecap="round"/><path d="M290.5 296 L291.2 310 L291.8 322 L292.6 334 L294.4 345 L298.2 355.1 L299.1 362.3 L304.5 366.6 L317.9 377.2 L330.4 386.8 L338 391.6 L343.8 392.3 L344.4 392 L339 387.7 L331.3 382.4 L321.7 374.3 L314.1 367 L309.1 362 L307.3 355.1 L303 346 L299.5 336 L297.5 322 L296.5 310 L296 298Z" fill="#5f8022" stroke="#4d6a1a" stroke-width="0.4" stroke-linejoin="round"/><path d="M303.4 355 L304.6 361.4 L309.4 366 L322 376.4 L333 384.6 L339.6 389.4 L342 391.6 L344.4 392 L339 387.7 L331.3 382.4 L321.7 374.3 L314.1 367 L309.1 362 L307.3 355.1 Z" fill="#50701c"/><path d="M293.6 300 L294.2 322 L295.4 336 L297.6 346 L301.6 355 L302.6 362 L307.6 366.4 L320.4 376.8 L332 385.4 L340 390.6" fill="none" stroke="#d6b43c" stroke-width="1.5" stroke-linejoin="round" stroke-linecap="round"/><path d="M306.6 340 L307.8 347 L311 352 L314.25 355.1 L317.9 363.7 L327.5 373.3 L341.9 382 L350.5 387.7 L351.7 390 L349.7 391.6 L344.4 392.3 L337.1 387 L327.5 379.3 L319.8 371.6 L314.4 363.9 L311.8 355.1 L309.8 351 L308.4 346 L308.2 340Z" fill="url(#legin)"/><path d="M327.5 379.3 L337.1 387 L344.4 392.3" fill="none" stroke="#d8641c" stroke-width="0.8" stroke-linecap="round"/><path d="M306.6 340 L307.8 347 L311 352 L314.25 355.1 L317.9 363.7 L327.5 373.3 L341.9 382 L350.5 387.7 L351.7 390 L349.7 391.6 L344.4 392.3" fill="none" stroke="#ee7c22" stroke-width="1.5" stroke-linejoin="round" stroke-linecap="round"/><path d="M331 377.6 L346.6 387.2" fill="none" stroke="#6a2410" stroke-width="1.6" stroke-linecap="round"/><path d="M283 254.5 C286 252.5 291 253.5 293.4 256.5 C297 258 301 259 304 262 L306 270 C301 270 298.4 271 297 274 C296 279 295.6 284 294.6 288.6 C298 292 300 296 299 300 L292 300 C289 296 287 292 287.4 288.4 C289.6 282 290.4 275 290.6 268 C289.6 263 286 260 283.4 258.6 Z" fill="#7f8e30" stroke="#b9b84e" stroke-width="0.7"/><path d="M295.8 227.2 C298 231 301 235.4 304.4 238.4 C306.6 240.4 309 241.4 311 243.6 L307.4 247.6 C304 245 301.6 242 300 239 C298 235 296.4 231 295.8 227.2Z" fill="#aab04a" stroke="#d4cf6a" stroke-width="0.5"/><path d="M287.4 234.6 C290 238.4 293 242 296 245.6 C298 248 300.4 250 302.4 252.6 L298.6 255.4 C295.6 252 293 248.6 291.4 245 C289.6 241.4 288 238 287.4 234.6Z" fill="#9aa23e" stroke="#cfca62" stroke-width="0.5"/><path d="M311.6 233.4 C313.4 230.6 317.4 230.6 319.4 233 C322 236.4 322.4 241 323.6 245 C326 243 328 241 330.6 240.6 C333.4 241 334.6 244 336 247 C339 249 343 250.4 345.6 253.4 C343 256 340.6 257.6 338 258.6 C341 261.6 344 263 347.6 265 C345 268 342 269.4 339 270 C342 273 345.6 276 349.4 279 L344 284 C338 282.6 333 283.4 328.4 286.4 C324 290 321 295.6 318.6 301 L311 300 C310 293 311.6 287 314 282 C309 283.4 305 283 301.4 281 C303 277.6 305.6 275 309 273.4 C305 271 301.4 268.6 299 265 C302 262.6 305.4 262 309 262.6 C306 259 303.6 255 303 250.6 C306.4 250 309.4 251.4 312 253.6 C311 247 310.4 240 311.6 233.4Z" fill="url(#ceph)" stroke="#c9c45a" stroke-width="0.8" stroke-linejoin="round"/><path d="M312.4 234.6 C314 232 316.6 232 317.6 234.4 C316.4 240 316.6 247 317.6 253.6 C315.4 252.4 313.4 252 312.4 252.6 C311.4 246 311.4 240 312.4 234.6Z" fill="#d2ca62" opacity="0.8"/><path d="M313.4 262 C316.4 266 318 272 318.4 278 C318.6 284 317 292 315 298 L312 298 C311.6 292 313 286.4 315.4 281.6 C312 281.6 309 282 306 281 C308 278 310.6 275.6 313.4 274.4 C311 271 309.6 267 309.4 263.4Z" fill="#c2bc56" opacity="0.75"/><path d="M330 262 C334 266 338 270 342 274 C345 277 347.6 279 348.4 279.6 L344 283.6 C338 282.4 333.4 283.4 329 286 C330.6 278 331 270 330 262Z" fill="#5e6a20" opacity="0.7"/><path d="M284 255.4 C286.6 253.4 290.4 254 292.6 256.6 C290 257 287.6 258.6 286.4 261 C285 259.6 284 257.6 284 255.4Z" fill="#c6c25c" opacity="0.8"/><path d="M322 247 l5 5 l-2 1 l-5 -4z M330 255 l7 -2 l1 1.6 l-7 2.6z M317 258 l4 6 l-2.4 0.6z M327 266 l8 3 l-1 2 l-8 -3z M309 267 l6 2 l-1 2z" fill="#2c3210"/><circle cx="306" cy="264" r="0.7" fill="#d8d468"/><circle cx="309" cy="268" r="0.7" fill="#d8d468"/><circle cx="312" cy="271.6" r="0.7" fill="#d8d468"/><circle cx="316" cy="274" r="0.7" fill="#d8d468"/><circle cx="320" cy="276.4" r="0.7" fill="#d8d468"/><circle cx="324" cy="278" r="0.7" fill="#d8d468"/><circle cx="303" cy="268" r="0.7" fill="#d8d468"/><circle cx="307" cy="272" r="0.7" fill="#d8d468"/><circle cx="330" cy="262" r="0.7" fill="#d8d468"/><circle cx="334" cy="266" r="0.7" fill="#d8d468"/><circle cx="326" cy="259" r="0.7" fill="#d8d468"/><circle cx="338" cy="266" r="0.7" fill="#d8d468"/><path d="M304 296 C309 292 314 293 316.4 298 C313 307 312.4 318 316 330 C313 334 308 335 305 333 C301 322 300.6 308 304 296Z" fill="#6a3a12"/><path d="M306 300 l7 1 l-1 3.4 l-6.4 -1z M304.6 309 l7 1.6 l-0.4 3 l-6.6 -1.6z M305 319 l8 2 l0.4 3 l-8 -2z M307 328 l7 1.6 l-1 2.4 l-5.6 -1z" fill="#c8842c"/><path d="M299 300 C300.6 312 300 324 303 336 C305 342 309 346 314 350" fill="none" stroke="#8a9a34" stroke-width="2.2"/><path d="M346 282.6 C358 279.6 372 286 379.4 298 C385.4 308 386.2 324 382 337 C379.4 349.6 371 357.6 356 359.6 C340 360.4 327 353 320.4 341 C313.6 329 313.4 311 319.6 299 C325 289 335 284.6 346 282.6Z" fill="url(#abdo)"/><path d="M346 282.6 C358 279.6 372 286 379.4 298 C385.4 308 386.2 324 382 337 C379.4 349.6 371 357.6 356 359.6 C340 360.4 327 353 320.4 341 C313.6 329 313.4 311 319.6 299 C325 289 335 284.6 346 282.6Z" fill="url(#abdo2)"/><path d="M379.4 298 C385.4 308 386.2 324 382 337 C379.4 349.6 371 357.6 356 359.6 C340 360.4 327 353 320.4 341" fill="none" stroke="url(#rim)" stroke-width="1.6" stroke-linecap="round"/><path d="M384.4 306 C386.6 316 386 330 382 340 C379 347 374 353 368 356" fill="none" stroke="#b8501a" stroke-width="0.9"/><path d="M320.4 341 C313.6 329 313.4 311 319.6 299 C325 289 335 284.6 346 282.6" fill="none" stroke="#b4b450" stroke-width="0.7"/><path d="M371 322 C373 318.6 377 318 378.4 321 C378.6 326 377 331 373.6 333.4 C370.6 333 369.4 330 369.6 327 C369.8 325 370 323.6 371 322Z" fill="#d6cf4c"/><circle cx="333.6" cy="331.4" r="1" fill="#3a3a10"/><circle cx="361.6" cy="309" r="1.3" fill="#c8b838"/><path d="M336 291 L362 291 L362 309 L336 309Z" fill="#3a3c10" opacity="0.0"/><g transform="translate(349 299) scale(1.28) translate(-349 -299)"><path d="M338.4 293.6 L345 291 L349.4 295.4 L355.6 288.6 L361.4 291.6 L356.6 298.6 L362.6 303.6 L358 308.6 L351.4 304.4 L346.6 311 L340 307.6 L344.6 300.6 L337.4 298.4 Z" fill="#26280c"/><path d="M340 295 L344.6 292.6 L349.6 297.4 L355.4 290.4 L359.6 292.4 L354.4 299 L361 303.4 L358 307 L351.2 302.6 L346.4 309.4 L342 307.2 L346.8 300.4 L339.4 298.2 Z" fill="#eedc24"/><path d="M344 293.6 L357.6 305.4" stroke="#fff59a" stroke-width="0.9" stroke-linecap="round"/></g></g></defs>
<rect x="0.00" y="0.00" width="800.00" height="600.00" fill="#060606" />
<use href="#spy" transform="translate(-453.4 -440.4) scale(2.606)"/>
<text x="91.25 116.92 145.00 172.92 198.33 225.42 253.33 282.50 306.67 331.67 360.83 386.25 412.50 439.58 467.50 494.17 520.00 545.00" y="82.5" transform="scale(1.2 1)" font-family="'Liberation Sans', sans-serif" font-size="37.6" text-anchor="middle" fill="#dad4d4" stroke="#d6c4c4" stroke-width="1.3" stroke-linejoin="round">DA REMIX EXTREMIST</text>
<use href="#spyup" transform="translate(-453.4 -440.4) scale(2.606)"/>
<g transform="translate(556.5 535) rotate(-5.4) skewX(-8)">
<text x="0.00" y="0.00" font-family="'Liberation Sans', sans-serif" font-size="17.6" fill="#d4d4d4" textLength="183.4" lengthAdjust="spacingAndGlyphs" stroke="#d4d4d4" stroke-width="0.35">djblackspyda@hotmail.com</text>
</g><g transform="translate(560.6 566) rotate(-6.4) skewX(-8)">
<text x="0.00" y="0.00" font-family="'Liberation Sans', sans-serif" font-size="17.6" fill="#d4d4d4" textLength="167.6" lengthAdjust="spacingAndGlyphs" stroke="#d4d4d4" stroke-width="0.35">djblackspyda@gmail.com</text>
</g>
<rect x="68.20" y="82.50" width="644.30" height="402.50" fill="#808080" />
<defs><linearGradient id="tb" x1="0" y1="0" x2="0" y2="1"><stop offset="0" stop-color="#2a78f0"/><stop offset="0.25" stop-color="#0a5ce6"/><stop offset="1" stop-color="#0a54dc"/></linearGradient></defs>
<rect x="68.20" y="82.50" width="644.30" height="9.80" fill="url(#tb)" />
<rect x="69.30" y="84.20" width="6.60" height="6.60" fill="#e8861c" />
<text x="78.20" y="90.30" font-family="'Liberation Sans', sans-serif" font-size="6.6" fill="#fff" font-weight="bold" >Adobe Illustrator</text>
<rect x="68.20" y="92.30" width="644.30" height="8.30" fill="#ece9d8" />
<text x="71.80" y="98.40" font-family="'Liberation Sans', sans-serif" font-size="6.1" fill="#222" >File</text>
<text x="88.70" y="98.40" font-family="'Liberation Sans', sans-serif" font-size="6.1" fill="#222" >Edit</text>
<text x="106.00" y="98.40" font-family="'Liberation Sans', sans-serif" font-size="6.1" fill="#222" >Object</text>
<text x="130.70" y="98.40" font-family="'Liberation Sans', sans-serif" font-size="6.1" fill="#222" >Type</text>
<text x="150.70" y="98.40" font-family="'Liberation Sans', sans-serif" font-size="6.1" fill="#222" >Select</text>
<text x="175.00" y="98.40" font-family="'Liberation Sans', sans-serif" font-size="6.1" fill="#222" >Filter</text>
<text x="195.50" y="98.40" font-family="'Liberation Sans', sans-serif" font-size="6.1" fill="#222" >Effect</text>
<text x="218.50" y="98.40" font-family="'Liberation Sans', sans-serif" font-size="6.1" fill="#222" >View</text>
<text x="238.00" y="98.40" font-family="'Liberation Sans', sans-serif" font-size="6.1" fill="#222" >Window</text>
<text x="266.50" y="98.40" font-family="'Liberation Sans', sans-serif" font-size="6.1" fill="#222" >Help</text>
<rect x="68.20" y="100.60" width="644.30" height="13.20" fill="#e6e6e6" />
<rect x="68.20" y="113.80" width="644.30" height="358.20" fill="#808080" />
<rect x="85.00" y="114.00" width="574.00" height="358.00" fill="#0a54dc" />
<rect x="85.00" y="114.00" width="574.00" height="11.20" fill="url(#tb)" />
<rect x="87.50" y="125.20" width="569.50" height="337.20" fill="#ffffff" />
<rect x="87.50" y="462.30" width="569.50" height="6.40" fill="#ece9d8" />
<text x="96.50" y="122.40" font-family="'Liberation Sans', sans-serif" font-size="6.4" fill="#fff" font-weight="bold" >spyda.ai @ 100% (RGB/Preview)</text>
<rect x="87.60" y="116.20" width="6.40" height="6.80" fill="#e8861c" />
<rect x="124.00" y="139.30" width="376.00" height="297.50" fill="#121212" />
<rect x="174.00" y="169.00" width="307.00" height="230.00" fill="none" stroke="#1f9a1f" stroke-width="0.9"/>
<text x="196.38 207.12 218.88 230.57 241.21 252.54 264.23 276.44 286.56 297.02 309.23 319.87 330.86 342.20 353.88 365.05 375.86 386.33" y="201.8" transform="scale(1.1 1)" font-family="'Liberation Sans', sans-serif" font-size="16" text-anchor="middle" fill="#e0dcd8" stroke="#e0dcd8" stroke-width="0.6">DA REMIX EXTREMIST</text>
<use href="#spy"/>
<g transform="translate(387.6 374.2) rotate(-5.4) skewX(-8)">
<text x="0.00" y="0.00" font-family="'Liberation Sans', sans-serif" font-size="7.1" fill="#d4d4d4" textLength="70.4" lengthAdjust="spacingAndGlyphs" >djblackspyda@hotmail.com</text>
</g><g transform="translate(389.2 386.1) rotate(-6.4) skewX(-8)">
<text x="0.00" y="0.00" font-family="'Liberation Sans', sans-serif" font-size="7.1" fill="#d4d4d4" textLength="64.3" lengthAdjust="spacingAndGlyphs" >djblackspyda@gmail.com</text>
</g>
<defs><linearGradient id="tk" x1="0" y1="0" x2="0" y2="1"><stop offset="0" stop-color="#3a80f0"/><stop offset="0.2" stop-color="#245edb"/><stop offset="1" stop-color="#1f50c0"/></linearGradient></defs>
<rect x="68.20" y="472.00" width="644.30" height="13.00" fill="url(#tk)" />
<text x="76.00" y="108.60" font-family="'Liberation Sans', sans-serif" font-size="4.3" fill="#222" >No Selection</text>
<defs><linearGradient id="gsw" x1="0" y1="0" x2="1" y2="0"><stop offset="0" stop-color="#4f7a20"/><stop offset="0.5" stop-color="#8fb03a"/><stop offset="1" stop-color="#4f7a20"/></linearGradient></defs>
<rect x="112.00" y="104.00" width="7.00" height="6.40" fill="url(#gsw)" stroke="#666" stroke-width="0.3"/>
<rect x="119.20" y="104.00" width="4.40" height="6.40" fill="#b9cdf2" stroke="#7f9db9" stroke-width="0.3"/>
<path d="M120.20 106.60 l1.2 1.4 l1.2 -1.4" fill="none" stroke="#27408b" stroke-width="0.7"/>
<rect x="126.40" y="104.00" width="6.60" height="6.40" fill="#fff" stroke="#444" stroke-width="0.8"/>
<path d="M126.6 110.2 L132.8 104.2" stroke="#e01010" stroke-width="0.9"/>
<rect x="133.30" y="104.00" width="4.40" height="6.40" fill="#b9cdf2" stroke="#7f9db9" stroke-width="0.3"/>
<path d="M134.30 106.60 l1.2 1.4 l1.2 -1.4" fill="none" stroke="#27408b" stroke-width="0.7"/>
<text x="141.40" y="108.80" font-family="'Liberation Sans', sans-serif" font-size="4.1" fill="#2244cc" textLength="10.6" lengthAdjust="spacingAndGlyphs" >Stroke:</text>
<rect x="153.00" y="104.00" width="21.00" height="6.40" fill="#fff" stroke="#7f9db9" stroke-width="0.4"/>
<text x="155.00" y="108.60" font-family="'Liberation Sans', sans-serif" font-size="4" fill="#999" >1</text>
<rect x="174.20" y="104.00" width="4.40" height="6.40" fill="#b9cdf2" stroke="#7f9db9" stroke-width="0.3"/>
<path d="M175.20 106.60 l1.2 1.4 l1.2 -1.4" fill="none" stroke="#27408b" stroke-width="0.7"/>
<text x="184.60" y="108.80" font-family="'Liberation Sans', sans-serif" font-size="4.3" fill="#222" >Brush:</text>
<rect x="197.00" y="104.00" width="9.00" height="6.40" fill="#fff" stroke="#7f9db9" stroke-width="0.4"/>
<circle cx="201.5" cy="107.3" r="0.6" fill="#222"/>
<rect x="206.20" y="104.00" width="4.40" height="6.40" fill="#b9cdf2" stroke="#7f9db9" stroke-width="0.3"/>
<path d="M207.20 106.60 l1.2 1.4 l1.2 -1.4" fill="none" stroke="#27408b" stroke-width="0.7"/>
<text x="213.40" y="108.80" font-family="'Liberation Sans', sans-serif" font-size="4.3" fill="#222" >Style:</text>
<rect x="224.50" y="104.00" width="10.50" height="6.40" fill="#fff" stroke="#7f9db9" stroke-width="0.4"/>
<rect x="235.20" y="104.00" width="4.40" height="6.40" fill="#b9cdf2" stroke="#7f9db9" stroke-width="0.3"/>
<path d="M236.20 106.60 l1.2 1.4 l1.2 -1.4" fill="none" stroke="#27408b" stroke-width="0.7"/>
<text x="239.60" y="108.80" font-family="'Liberation Sans', sans-serif" font-size="4.2" fill="#2244cc" textLength="15.4" lengthAdjust="spacingAndGlyphs" >Opacity:</text>
<rect x="256.50" y="104.00" width="17.00" height="6.40" fill="#fff" stroke="#7f9db9" stroke-width="0.4"/>
<text x="258.00" y="108.70" font-family="'Liberation Sans', sans-serif" font-size="4.2" fill="#111" >100</text>
<rect x="274.50" y="104.00" width="4.40" height="6.40" fill="#b9cdf2" stroke="#7f9db9" stroke-width="0.3"/>
<path d="M276 105.6 l1.4 1.6 l-1.4 1.6" fill="none" stroke="#27408b" stroke-width="0.7"/>
<text x="280.30" y="108.80" font-family="'Liberation Sans', sans-serif" font-size="4.3" fill="#222" >%</text>
<rect x="290.50" y="104.30" width="6.50" height="5.60" fill="#d8d8d8" stroke="#555" stroke-width="0.4"/>
<path d="M292 105.5 h2.2 v2.2 h-2.2z M294.5 107 h1.8 v2 h-1.8z" fill="#555"/>
<path d="M70.5 103 v9" stroke="#aaa" stroke-width="0.6" stroke-dasharray="0.7 0.7"/>
<rect x="692.00" y="103.50" width="6.00" height="6.00" fill="#e6e6e6" />
<path d="M692.5 108.8 h6 v-2.6 h-6z M694 106.2 v-1.8 h3.2 v1.8" fill="#444" stroke="#222" stroke-width="0.3"/>
<rect x="700.20" y="103.60" width="2.40" height="4.60" fill="#fff" stroke="#444" stroke-width="0.4"/>
<path d="M704.5 103 v8" stroke="#999" stroke-width="0.5" stroke-dasharray="0.7 0.7"/>
<rect x="689.20" y="84.00" width="6.30" height="6.60" fill="#2f6fe8" rx="1" stroke="#e8eefc" stroke-width="0.5"/>
<path d="M690.6 88.9 h2.6" stroke="#fff" stroke-width="0.9"/>
<rect x="696.50" y="84.00" width="6.30" height="6.60" fill="#2f6fe8" rx="1" stroke="#e8eefc" stroke-width="0.5"/>
<rect x="698.0" y="85.6" width="3.3" height="3.2" fill="none" stroke="#fff" stroke-width="0.7"/>
<rect x="703.80" y="84.00" width="6.30" height="6.60" fill="#d6432c" rx="1" stroke="#e8eefc" stroke-width="0.5"/>
<path d="M705.4000000000001 85.7 l3.1 3.2 m0 -3.2 l-3.1 3.2" stroke="#fff" stroke-width="0.9"/>
<rect x="633.60" y="116.00" width="6.60" height="7.00" fill="#2f6fe8" rx="1" stroke="#e8eefc" stroke-width="0.5"/>
<path d="M635.0 121.2 h2.8" stroke="#fff" stroke-width="0.9"/>
<rect x="641.20" y="116.00" width="6.60" height="7.00" fill="#2f6fe8" rx="1" stroke="#e8eefc" stroke-width="0.5"/>
<rect x="642.8000000000001" y="117.7" width="3.4" height="3.4" fill="none" stroke="#fff" stroke-width="0.7"/>
<rect x="648.80" y="116.00" width="6.60" height="7.00" fill="#d6432c" rx="1" stroke="#e8eefc" stroke-width="0.5"/>
<path d="M650.5000000000001 117.8 l3.2 3.4 m0 -3.4 l-3.2 3.4" stroke="#fff" stroke-width="0.9"/>
<rect x="68.20" y="113.80" width="16.60" height="358.20" fill="#7e7e7e" />
<rect x="68.20" y="113.80" width="2.20" height="358.20" fill="#3a3a3a" />
<rect x="70.40" y="113.80" width="14.00" height="6.40" fill="#474747" />
<path d="M72.2 116.2 l-1 1 l1 1 M74 116.2 l-1 1 l1 1" fill="none" stroke="#ddd" stroke-width="0.5"/>
<rect x="70.40" y="120.20" width="13.80" height="4.20" fill="#c9c9c9" />
<g transform="translate(0 -0.9)">
<rect x="70.40" y="124.40" width="13.80" height="261.80" fill="#e9e9e9" stroke="#9a9a9a" stroke-width="0.4"/>
<defs><linearGradient id="aio" x1="0" y1="0" x2="0" y2="1"><stop offset="0" stop-color="#f7a13a"/><stop offset="1" stop-color="#e0760e"/></linearGradient></defs>
<rect x="70.60" y="124.50" width="13.40" height="9.30" fill="url(#aio)" />
<text x="77.30" y="131.40" font-family="'Liberation Sans', sans-serif" font-size="5.6" fill="#fff4dc" font-weight="bold" text-anchor="middle" >Ai</text>
<rect x="73.00" y="136.50" width="8.20" height="7.20" fill="#f6f6f6" stroke="#555" stroke-width="0.6"/>
<path transform="translate(77 140.0)" d="M-1.6 -2.8 L-1.6 2.2 L-0.4 1.1 L0.6 3 L1.3 2.6 L0.4 0.8 L2 0.8 Z" fill="#222" stroke="#2a2a2a" stroke-width="0.75" stroke-linejoin="round" stroke-linecap="round"/>
<path transform="translate(77 148.3)" d="M-1.6 -2.8 L-1.6 2.2 L-0.4 1.1 L0.6 3 L1.3 2.6 L0.4 0.8 L2 0.8 Z" fill="#fff" stroke="#2a2a2a" stroke-width="0.75" stroke-linejoin="round" stroke-linecap="round"/>
<path d="M81.6 151.7 l1 0 l0 -1z" fill="#333"/>
<path transform="translate(77 156.5)" d="M-2.4 -2.6 L2.4 2.6 M-2.6 -0.8 l1 -0.4 M-0.8 -2.8 l-0.3 1" fill="none" stroke="#2a2a2a" stroke-width="0.75" stroke-linejoin="round" stroke-linecap="round"/>
<path transform="translate(77 164.8)" d="M-2 -1 C-2 -3 2.4 -3 2.2 -0.8 C2 1 -1 1 -1.4 0 M-1 0.4 C-2 1.4 -0.6 2 -0.8 3" fill="none" stroke="#2a2a2a" stroke-width="0.75" stroke-linejoin="round" stroke-linecap="round"/>
<path transform="translate(77 173.1)" d="M0 -3 L1.4 0.6 L0.8 2.2 L-0.8 2.2 L-1.4 0.6 Z M-1.2 3 h2.4" fill="#222" stroke="#2a2a2a" stroke-width="0.75" stroke-linejoin="round" stroke-linecap="round"/>
<path d="M81.6 176.5 l1 0 l0 -1z" fill="#333"/>
<path transform="translate(77 181.3)" d="M-2.2 -2.6 h4.4 v1 M-2.2 -2.6 v1 M0 -2.6 v5.2 M-1.1 2.6 h2.2" fill="none" stroke="#2a2a2a" stroke-width="0.75" stroke-linejoin="round" stroke-linecap="round"/>
<path d="M81.6 184.8 l1 0 l0 -1z" fill="#333"/>
<path transform="translate(77 189.6)" d="M-2.4 2.6 C-2 0 0 -2 2.4 -2.6" fill="none" stroke="#2a2a2a" stroke-width="0.75" stroke-linejoin="round" stroke-linecap="round"/>
<path d="M81.6 193.0 l1 0 l0 -1z" fill="#333"/>
<path transform="translate(77 197.9)" d="M-2.4 -2 h4.8 v4 h-4.8z" fill="none" stroke="#2a2a2a" stroke-width="0.75" stroke-linejoin="round" stroke-linecap="round"/>
<path d="M81.6 201.3 l1 0 l0 -1z" fill="#333"/>
<path transform="translate(77 206.2)" d="M2.6 -3 L-0.8 1 M-0.8 1 C-1.6 1 -2.4 2 -2.6 3 C-1.4 3 -0.2 2.4 -0.2 1.6" fill="none" stroke="#2a2a2a" stroke-width="0.75" stroke-linejoin="round" stroke-linecap="round"/>
<path d="M81.6 209.6 l1 0 l0 -1z" fill="#333"/>
<path transform="translate(77 214.4)" d="M2.4 -2.8 L-1.6 1.6 L-2.4 3 L-0.8 2.4 L3 -2 Z" fill="#222" stroke="#2a2a2a" stroke-width="0.75" stroke-linejoin="round" stroke-linecap="round"/>
<path d="M81.6 217.8 l1 0 l0 -1z" fill="#333"/>
<path transform="translate(77 222.7)" d="M2.2 0.4 A2.3 2.3 0 1 1 0.6 -2.2 M0.2 -3.4 l1 1.2 l-1.4 0.6" fill="none" stroke="#2a2a2a" stroke-width="0.75" stroke-linejoin="round" stroke-linecap="round"/>
<path d="M81.6 226.1 l1 0 l0 -1z" fill="#333"/>
<path transform="translate(77 231.0)" d="M-2.6 -0.6 h3.4 v3.4 h-3.4z M-0.8 -2.6 h3.4 v3.4" fill="none" stroke="#2a2a2a" stroke-width="0.75" stroke-linejoin="round" stroke-linecap="round"/>
<path d="M81.6 234.4 l1 0 l0 -1z" fill="#333"/>
<path transform="translate(77 239.2)" d="M-2.4 1.6 C-1 -3 1 -3 1.4 0 C1.6 1.6 2.4 1 2.6 -0.4 M-2.6 2.6 h5" fill="none" stroke="#2a2a2a" stroke-width="0.75" stroke-linejoin="round" stroke-linecap="round"/>
<path d="M81.6 242.6 l1 0 l0 -1z" fill="#333"/>
<path transform="translate(77 247.5)" d="M-2.4 -2.4 h4.8 v4.8 h-4.8z M-2.4 -2.4 l4.8 4.8" fill="none" stroke="#2a2a2a" stroke-width="0.75" stroke-linejoin="round" stroke-linecap="round"/>
<path transform="translate(77 255.8)" d="M-2 -0.4 h2.6 v3.2 h-2.6z M-0.8 -0.4 v-1.4 h1.2 M1.4 -2.6 l1 -0.4 M1.6 -1.6 l1.2 0 M1.4 -0.6 l1 0.6" fill="none" stroke="#2a2a2a" stroke-width="0.75" stroke-linejoin="round" stroke-linecap="round"/>
<path d="M81.6 259.2 l1 0 l0 -1z" fill="#333"/>
<path transform="translate(77 264.1)" d="M-2.6 2.8 h5.4 M-2 2.6 v-2.4 M-0.6 2.6 v-4.6 M0.8 2.6 v-3.2 M2.2 2.6 v-5.2" fill="none" stroke="#2a2a2a" stroke-width="0.75" stroke-linejoin="round" stroke-linecap="round"/>
<path d="M81.6 267.4 l1 0 l0 -1z" fill="#333"/>
<path transform="translate(77 272.3)" d="M-2.6 -2.2 h5.2 v4.6 h-5.2z M-2.6 0 C-1 -1 1 1 2.6 0 M0 -2.2 C-1 -0.6 1 0.6 0 2.4" fill="none" stroke="#2a2a2a" stroke-width="0.75" stroke-linejoin="round" stroke-linecap="round"/>
<path transform="translate(77 280.6)" d="M-2.6 -2.2 h5.2 v4.6 h-5.2z" fill="#888" stroke="#2a2a2a" stroke-width="0.75" stroke-linejoin="round" stroke-linecap="round"/>
<path transform="translate(77 288.9)" d="M2.8 -3 L0.4 -0.4 M0.8 -1.4 l0.8 0.8 M0.4 -0.4 L-2.2 2.2 L-2.6 3 L-1.8 2.6 L0.8 0" fill="none" stroke="#2a2a2a" stroke-width="0.75" stroke-linejoin="round" stroke-linecap="round"/>
<path d="M81.6 292.3 l1 0 l0 -1z" fill="#333"/>
<path transform="translate(77 297.1)" d="M-2.4 -2 h2.4 v2.4 h-2.4z M0.2 0.2 a1.4 1.4 0 1 0 2.4 1.6 a1.4 1.4 0 1 0 -2.4 -1.6" fill="none" stroke="#2a2a2a" stroke-width="0.75" stroke-linejoin="round" stroke-linecap="round"/>
<path d="M81.6 300.5 l1 0 l0 -1z" fill="#333"/>
<path transform="translate(77 305.4)" d="M-2 0 L0.4 -2.4 L2.6 0 L0.2 2.4 Z M-2.6 0.6 c-0.6 1 -0.6 2 0 2.2 c0.6 -0.2 0.6 -1.2 0 -2.2" fill="none" stroke="#2a2a2a" stroke-width="0.75" stroke-linejoin="round" stroke-linecap="round"/>
<path d="M81.6 308.8 l1 0 l0 -1z" fill="#333"/>
<path transform="translate(77 313.7)" d="M-2.4 -2 h3 v3 h-3z M0 0 L0 3.2 L0.9 2.4 L1.6 3.4 L2.2 3 L1.6 2 L2.6 2 Z" fill="none" stroke="#2a2a2a" stroke-width="0.75" stroke-linejoin="round" stroke-linecap="round"/>
<path d="M81.6 317.1 l1 0 l0 -1z" fill="#333"/>
<path d="M72 319.2 h10.6" stroke="#bdbdbd" stroke-width="0.5"/>
<path transform="translate(77 324.5)" d="M-2.6 -0.2 h5.2 M-0.2 -2.8 v5.6 M-2.6 -2.4 l1 1 M2.6 -2.4 l-1 1 M-2.6 2.4 l1 -1 M2.6 2.4 l-1 -1" fill="none" stroke="#2a2a2a" stroke-width="0.75" stroke-linejoin="round" stroke-linecap="round"/>
<path transform="translate(77 332.6)" d="M-2.6 1.2 L0.6 -2.4 L2.8 -0.8 L-0.4 2.6 Z M-2.6 3 h5" fill="none" stroke="#2a2a2a" stroke-width="0.75" stroke-linejoin="round" stroke-linecap="round"/>
<path transform="translate(77 340.9)" d="M-2 0.6 a2.4 2.4 0 1 0 4.4 0 a2.4 2.4 0 1 0 -4.4 0" fill="none" stroke="#2a2a2a" stroke-width="0.75" stroke-linejoin="round" stroke-linecap="round"/>
<path transform="translate(77 348.6)" d="M-2.4 -0.8 a1.9 1.9 0 1 0 3.8 0 a1.9 1.9 0 1 0 -3.8 0 M0.8 0.8 L2.8 3" fill="none" stroke="#2a2a2a" stroke-width="0.75" stroke-linejoin="round" stroke-linecap="round"/>
<rect x="73.40" y="353.60" width="2.60" height="2.60" fill="#fff" stroke="#222" stroke-width="0.5"/>
<rect x="74.80" y="355.00" width="2.60" height="2.60" fill="#222" />
<path d="M79.4 353.4 q2 0 2 2 M80.8 355 l0.6 0.9 l0.7 -0.9" fill="none" stroke="#222" stroke-width="0.5"/>
<defs><linearGradient id="fs" x1="0" y1="0" x2="1" y2="0"><stop offset="0" stop-color="#3f6a1c"/><stop offset="0.55" stop-color="#9ab53c"/><stop offset="1" stop-color="#4f7a20"/></linearGradient></defs>
<rect x="76.60" y="363.00" width="6.00" height="6.00" fill="#fff" stroke="#333" stroke-width="1"/>
<path d="M76.8 368.8 L82.4 363.2" stroke="#e01010" stroke-width="0.9"/>
<rect x="72.60" y="359.40" width="6.40" height="6.40" fill="url(#fs)" stroke="#333" stroke-width="0.5"/>
<rect x="72.20" y="372.20" width="3.20" height="3.20" fill="#7a2a12" stroke="#333" stroke-width="0.3"/>
<rect x="75.90" y="372.20" width="3.20" height="3.20" fill="url(#fs)" stroke="#333" stroke-width="0.3"/>
<rect x="79.60" y="372.20" width="3.20" height="3.20" fill="#fff" stroke="#333" stroke-width="0.3"/>
<path d="M79.7 375.3 l3 -3" stroke="#e01010" stroke-width="0.6"/>
<path d="M73.6 381.6 l2.4 -2 h5.4 l-2.4 2z M73.6 381.6 v1 h5.4 v-1" fill="#fff" stroke="#444" stroke-width="0.5"/>
</g>
<rect x="658.80" y="113.80" width="41.00" height="71.00" fill="#7e7e7e" />
<rect x="699.60" y="113.80" width="12.90" height="71.00" fill="#5a5a5a" />
<rect x="699.60" y="113.80" width="12.90" height="6.00" fill="#4a4a4a" />
<path d="M707.6 116 l1 1 l-1 1 M709.4 116 l1 1 l-1 1" fill="none" stroke="#ddd" stroke-width="0.5"/>
<path d="M702.4 115 v3.6" stroke="#888" stroke-width="0.8" stroke-dasharray="0.5 0.5"/>
<rect x="700.40" y="120.80" width="10.80" height="15.00" fill="#dcdcdc" rx="0.8" stroke="#efefef" stroke-width="0.4"/>
<rect x="700.40" y="137.40" width="10.80" height="15.60" fill="#dcdcdc" rx="0.8" stroke="#efefef" stroke-width="0.4"/>
<rect x="700.40" y="154.60" width="10.80" height="25.60" fill="#dcdcdc" rx="0.8" stroke="#efefef" stroke-width="0.4"/>
<path d="M702.4 132.2 v-7.6 c3 0 6 2.4 6.6 7.6z" fill="#555" stroke="#222" stroke-width="0.5"/>
<path d="M702.4 124.6 h6.6 v7.6" fill="none" stroke="#888" stroke-width="0.4"/>
<path d="M702.2 142.6 h7.4" stroke="#999" stroke-width="0.8"/><path d="M702.2 145.4 h7.4" stroke="#555" stroke-width="1.4"/><path d="M702.2 148.6 h7.4" stroke="#111" stroke-width="1.8"/>
<defs><radialGradient id="sph"><stop offset="0" stop-color="#999"/><stop offset="1" stop-color="#222"/></radialGradient></defs>
<circle cx="705.8" cy="162.6" r="2.8" fill="url(#sph)"/>
<path d="M703.2 162.6 h-1 M709.4 162.6 h-1 M705.8 159 v0.8 M705.8 166.2 v-0.8" stroke="#333" stroke-width="0.6"/>
<rect x="704.40" y="170.20" width="5.00" height="5.00" fill="#fff" stroke="#555" stroke-width="0.5"/>
<rect x="702.40" y="173.40" width="3.20" height="3.20" fill="#bbb" stroke="#333" stroke-width="0.5"/>
<rect x="650.60" y="125.20" width="6.40" height="338.40" fill="#f3f2ea" />
<rect x="650.80" y="126.60" width="6.00" height="8.00" fill="#c6d6fb" rx="0.8" stroke="#fff" stroke-width="0.4"/>
<path d="M652.4 131.6 l1.4 -1.6 l1.4 1.6" fill="none" stroke="#4d6185" stroke-width="0.8"/>
<g transform="translate(0 -1.3)">
<rect x="87.50" y="463.60" width="563.00" height="7.60" fill="#ece9d8" />
<rect x="88.00" y="464.00" width="11.50" height="5.40" fill="#fff" stroke="#7f9db9" stroke-width="0.3"/>
<text x="89.60" y="468.30" font-family="'Liberation Sans', sans-serif" font-size="3.4" fill="#222" >100%</text>
<rect x="100.00" y="464.00" width="4.60" height="5.40" fill="#c6d6fb" stroke="#7f9db9" stroke-width="0.3"/>
<path d="M101.2 466 l1.1 1.3 l1.1 -1.3" fill="none" stroke="#27408b" stroke-width="0.6"/>
<rect x="107.00" y="464.40" width="3.00" height="4.40" fill="#ddd" stroke="#666" stroke-width="0.3"/>
<text x="140.00" y="468.40" font-family="'Liberation Sans', sans-serif" font-size="3.6" fill="#333" >Open</text>
<path d="M164.6 465.4 l1.6 1.3 l-1.6 1.3z" fill="#111"/>
<rect x="169.00" y="464.00" width="5.40" height="5.60" fill="#c6d6fb" stroke="#9db3e6" stroke-width="0.3"/>
<path d="M172.2 465.6 l-1.4 1.2 l1.4 1.2" fill="none" stroke="#4d6185" stroke-width="0.7"/>
<rect x="174.40" y="464.00" width="476.00" height="5.80" fill="#f6f5ee" />
<rect x="414.00" y="464.20" width="9.00" height="5.40" fill="#c6d6fb" rx="0.6" stroke="#a9bff0" stroke-width="0.3"/>
<path d="M417 465.6 v2.6 M418.5 465.6 v2.6 M420 465.6 v2.6" stroke="#eef3ff" stroke-width="0.5"/>
</g>
<rect x="571.60" y="184.20" width="141.00" height="110.00" fill="#ececec" />
<rect x="571.60" y="184.20" width="140.90" height="10.00" fill="#d2d2d2" />
<rect x="571.60" y="184.20" width="140.90" height="0.60" fill="#f4f4f4" />
<rect x="575.30" y="187.60" width="21.20" height="6.60" fill="#ececec" stroke="#b4b4b4" stroke-width="0.35"/>
<text x="576.70" y="192.60" font-family="'Liberation Sans', sans-serif" font-size="4.7" fill="#333" >Unsorted ×</text>
<path d="M704.3 187.1 h2.2" stroke="#555" stroke-width="0.6"/>
<path d="M708.3 185.9 l2 2 m0 -2 l-2 2" stroke="#555" stroke-width="0.55"/>
<path d="M706.9 190.6 l1 1 l1 -1z M708.9 190.4 h2.2 M708.9 191.4 h2.2" stroke="#444" stroke-width="0.4" fill="#444"/>
<rect x="569.40" y="195.40" width="5.30" height="5.35" fill="#e8c830" stroke="#333" stroke-width="0.35"/>
<rect x="574.70" y="195.40" width="5.30" height="5.35" fill="#e4c42c" stroke="#333" stroke-width="0.35"/>
<rect x="580.00" y="195.40" width="5.30" height="5.35" fill="#f0d030" stroke="#333" stroke-width="0.35"/>
<rect x="569.40" y="200.75" width="5.30" height="5.35" fill="#b09060" stroke="#333" stroke-width="0.35"/>
<rect x="574.70" y="200.75" width="5.30" height="5.35" fill="#402818" stroke="#333" stroke-width="0.35"/>
<rect x="580.00" y="200.75" width="5.30" height="5.35" fill="#e0c020" stroke="#333" stroke-width="0.35"/>
<rect x="569.40" y="206.10" width="5.30" height="5.35" fill="#c0a070" stroke="#333" stroke-width="0.35"/>
<rect x="574.70" y="206.10" width="5.30" height="5.35" fill="#a0b8d8" stroke="#333" stroke-width="0.35"/>
<rect x="580.00" y="206.10" width="5.30" height="5.35" fill="#a8c0dc" stroke="#333" stroke-width="0.35"/>
<rect x="569.40" y="211.45" width="5.30" height="5.35" fill="#306070" stroke="#333" stroke-width="0.35"/>
<rect x="574.70" y="211.45" width="5.30" height="5.35" fill="#e8c020" stroke="#333" stroke-width="0.35"/>
<rect x="580.00" y="211.45" width="5.30" height="5.35" fill="#a07040" stroke="#333" stroke-width="0.35"/>
<rect x="569.40" y="216.80" width="5.30" height="5.35" fill="#a06040" stroke="#333" stroke-width="0.35"/>
<rect x="574.70" y="216.80" width="5.30" height="5.35" fill="#802820" stroke="#333" stroke-width="0.35"/>
<rect x="580.00" y="216.80" width="5.30" height="5.35" fill="#7090c0" stroke="#333" stroke-width="0.35"/>
<rect x="569.40" y="222.15" width="5.30" height="5.35" fill="#c09060" stroke="#333" stroke-width="0.35"/>
<rect x="574.70" y="222.15" width="5.30" height="5.35" fill="#a04030" stroke="#333" stroke-width="0.35"/>
<rect x="580.00" y="222.15" width="5.30" height="5.35" fill="#80a0d0" stroke="#333" stroke-width="0.35"/>
<rect x="655.00" y="389.60" width="57.50" height="82.40" fill="#fbfbfb" />
<rect x="677.60" y="389.60" width="34.90" height="43.70" fill="#e9e9e9" />
<rect x="706.00" y="389.60" width="6.50" height="43.70" fill="#f1f1f1" />
<rect x="707.40" y="423.00" width="3.40" height="6.40" fill="#dcdcdc" />
<rect x="677.60" y="433.20" width="34.90" height="0.60" fill="#8c8c8c" />
<rect x="677.60" y="433.80" width="34.90" height="6.80" fill="#efefef" />
<path d="M698 435.2 l3.2 3.6 m0 -3.6 l-3.2 3.6" stroke="#c22" stroke-width="0.8"/>
<rect x="677.60" y="440.60" width="34.90" height="31.40" fill="#7c7c7c" />
<rect x="571.60" y="230.00" width="70.80" height="48.40" fill="#ececec" stroke="#c6c6c6" stroke-width="0.4"/>
<rect x="571.60" y="230.00" width="70.80" height="10.00" fill="#d2d2d2" />
<rect x="571.60" y="230.00" width="70.80" height="0.60" fill="#f4f4f4" />
<rect x="569.00" y="233.40" width="21.00" height="6.60" fill="#ececec" stroke="#b4b4b4" stroke-width="0.35"/>
<text x="570.40" y="238.40" font-family="'Liberation Sans', sans-serif" font-size="4.7" fill="#333" > Gradient ×</text>
<path d="M634.2 232.9 h2.2" stroke="#555" stroke-width="0.6"/>
<path d="M638.2 231.7 l2 2 m0 -2 l-2 2" stroke="#555" stroke-width="0.55"/>
<path d="M636.8 236.4 l1 1 l1 -1z M638.8 236.2 h2.2 M638.8 237.2 h2.2" stroke="#444" stroke-width="0.4" fill="#444"/>
<defs><linearGradient id="gr1" x1="0" y1="0" x2="1" y2="0"><stop offset="0" stop-color="#3c5210"/><stop offset="0.3" stop-color="#7f9420"/><stop offset="0.6" stop-color="#e6e834"/><stop offset="0.8" stop-color="#6c7a1c"/><stop offset="1" stop-color="#0c0c04"/></linearGradient></defs>
<rect x="571.80" y="243.00" width="2.80" height="10.60" fill="#6b7a24" stroke="#333" stroke-width="0.3"/>
<text x="576.40" y="249.40" font-family="'Liberation Sans', sans-serif" font-size="4.3" fill="#222" >Type:</text>
<rect x="587.40" y="244.40" width="15.00" height="6.60" fill="#fff" stroke="#7f9db9" stroke-width="0.35"/>
<text x="588.60" y="249.30" font-family="'Liberation Sans', sans-serif" font-size="4" fill="#222" >Linear</text>
<rect x="602.40" y="244.40" width="8.40" height="6.60" fill="#b7cbf5" stroke="#7f9db9" stroke-width="0.3"/>
<path d="M605.10 246.90 l1.5 1.7 l1.5 -1.7" fill="none" stroke="#2a50b0" stroke-width="0.9"/>
<text x="575.00" y="259.20" font-family="'Liberation Sans', sans-serif" font-size="4.3" fill="#222" >Angle:</text>
<rect x="587.60" y="254.20" width="13.60" height="6.40" fill="#fff" stroke="#7f9db9" stroke-width="0.35"/>
<text x="589.00" y="259.00" font-family="'Liberation Sans', sans-serif" font-size="4" fill="#222" >0.00</text>
<text x="601.80" y="257.60" font-family="'Liberation Sans', sans-serif" font-size="4" fill="#222" >°</text>
<text x="605.00" y="259.20" font-family="'Liberation Sans', sans-serif" font-size="4.1" fill="#b4b4b4" >Location:</text>
<rect x="622.40" y="254.20" width="12.60" height="6.40" fill="#e4e8ec" stroke="#b8c4d0" stroke-width="0.35"/>
<text x="636.00" y="259.20" font-family="'Liberation Sans', sans-serif" font-size="4" fill="#b4b4b4" >%</text>
<rect x="572.00" y="267.00" width="62.00" height="4.20" fill="url(#gr1)" stroke="#222" stroke-width="0.4"/>
<path d="M596 263.6 l1.3 1.3 l-1.3 1.3 l-1.3 -1.3z" fill="#bbb" stroke="#444" stroke-width="0.35"/>
<path d="M621.6 263.6 l1.3 1.3 l-1.3 1.3 l-1.3 -1.3z" fill="#bbb" stroke="#444" stroke-width="0.35"/>
<path d="M582 271.6 l1.5 1.5 v2.6 h-3 v-2.6z" fill="#eee" stroke="#222" stroke-width="0.4"/>
<rect x="581.10" y="273.70" width="1.80" height="1.60" fill="#5b6e18" />
<path d="M610 271.6 l1.5 1.5 v2.6 h-3 v-2.6z" fill="#eee" stroke="#222" stroke-width="0.4"/>
<rect x="609.10" y="273.70" width="1.80" height="1.60" fill="#e6e834" />
<path d="M633.6 271.6 l1.5 1.5 v2.6 h-3 v-2.6z" fill="#eee" stroke="#222" stroke-width="0.4"/>
<rect x="632.70" y="273.70" width="1.80" height="1.60" fill="#111" />
<rect x="578.20" y="152.50" width="82.60" height="20.90" fill="#ececec" stroke="#bdbdbd" stroke-width="0.4"/>
<rect x="578.20" y="152.50" width="82.60" height="9.60" fill="#d2d2d2" />
<rect x="578.20" y="152.50" width="82.60" height="0.60" fill="#f4f4f4" />
<rect x="580.30" y="155.90" width="36.70" height="6.20" fill="#ececec" stroke="#b4b4b4" stroke-width="0.35"/>
<text x="581.70" y="160.50" font-family="'Liberation Sans', sans-serif" font-size="4.7" fill="#333" >◊ Transparency ×</text>
<path d="M652.6 155.4 h2.2" stroke="#555" stroke-width="0.6"/>
<path d="M656.6 154.2 l2 2 m0 -2 l-2 2" stroke="#555" stroke-width="0.55"/>
<path d="M655.2 158.9 l1 1 l1 -1z M657.2 158.7 h2.2 M657.2 159.7 h2.2" stroke="#444" stroke-width="0.4" fill="#444"/>
<rect x="580.70" y="164.60" width="27.40" height="6.40" fill="#fff" stroke="#7f9db9" stroke-width="0.35"/>
<text x="582.00" y="169.40" font-family="'Liberation Sans', sans-serif" font-size="4" fill="#222" >Normal</text>
<rect x="608.00" y="164.60" width="7.20" height="6.40" fill="#b7cbf5" stroke="#7f9db9" stroke-width="0.3"/>
<path d="M610.10 167.00 l1.5 1.7 l1.5 -1.7" fill="none" stroke="#2a50b0" stroke-width="0.9"/>
<text x="619.80" y="169.50" font-family="'Liberation Sans', sans-serif" font-size="4.1" fill="#222" >Opacity:</text>
<rect x="635.70" y="164.60" width="10.80" height="6.40" fill="#fff" stroke="#7f9db9" stroke-width="0.35"/>
<text x="637.00" y="169.40" font-family="'Liberation Sans', sans-serif" font-size="4" fill="#222" >100</text>
<rect x="647.30" y="164.60" width="5.20" height="6.40" fill="#b7cbf5" stroke="#7f9db9" stroke-width="0.3"/>
<path d="M649.2 166 l1.6 1.8 l-1.6 1.8" fill="none" stroke="#2a50b0" stroke-width="0.9"/>
<text x="653.80" y="169.50" font-family="'Liberation Sans', sans-serif" font-size="4.1" fill="#222" >%</text>
<rect x="489.30" y="146.30" width="82.70" height="198.70" fill="#ececec" stroke="#c0c0c0" stroke-width="0.5"/>
<rect x="489.30" y="146.30" width="82.70" height="10.00" fill="#d2d2d2" />
<rect x="489.30" y="146.30" width="82.70" height="0.60" fill="#f4f4f4" />
<rect x="491.50" y="149.70" width="23.30" height="6.60" fill="#ececec" stroke="#b4b4b4" stroke-width="0.35"/>
<text x="492.90" y="154.70" font-family="'Liberation Sans', sans-serif" font-size="4.7" fill="#333" >Brushes ×</text>
<rect x="515.70" y="149.70" width="20.80" height="6.60" fill="#cfcfcf" stroke="#b4b4b4" stroke-width="0.35"/>
<text x="517.10" y="154.70" font-family="'Liberation Sans', sans-serif" font-size="4.7" fill="#555" >Symbols</text>
<path d="M563.8 149.2 h2.2" stroke="#555" stroke-width="0.6"/>
<path d="M567.8 148.0 l2 2 m0 -2 l-2 2" stroke="#555" stroke-width="0.55"/>
<path d="M566.4 152.7 l1 1 l1 -1z M568.4 152.5 h2.2 M568.4 153.5 h2.2" stroke="#444" stroke-width="0.4" fill="#444"/>
<rect x="490.70" y="156.40" width="74.60" height="61.40" fill="#fff" />
<rect x="565.30" y="156.40" width="5.90" height="61.40" fill="#f2f2f2" stroke="#d0d0d0" stroke-width="0.3"/>
<rect x="566.00" y="161.00" width="4.60" height="6.00" fill="#e2e2e2" />
<rect x="490.70" y="156.50" width="12.35" height="12.20" fill="#fff" stroke="#9a9a9a" stroke-width="0.4"/>
<rect x="503.05" y="156.50" width="12.35" height="12.20" fill="#fff" stroke="#9a9a9a" stroke-width="0.4"/>
<rect x="515.40" y="156.50" width="12.35" height="12.20" fill="#fff" stroke="#9a9a9a" stroke-width="0.4"/>
<rect x="527.75" y="156.50" width="12.35" height="12.20" fill="#fff" stroke="#9a9a9a" stroke-width="0.4"/>
<rect x="540.10" y="156.50" width="12.35" height="12.20" fill="#fff" stroke="#9a9a9a" stroke-width="0.4"/>
<rect x="552.45" y="156.50" width="12.35" height="12.20" fill="#fff" stroke="#9a9a9a" stroke-width="0.4"/>
<circle cx="496.90" cy="162.6" r="0.3" fill="#111"/>
<circle cx="533.95" cy="162.6" r="0.25" fill="#111"/>
<circle cx="546.30" cy="162.6" r="0.55" fill="#111"/>
<circle cx="558.65" cy="162.6" r="1.4" fill="#111"/>
<path d="M508.2 162 l1.1 1.3 l1.1 -1.3z" fill="#222"/><path d="M520.6 162.6 h1.8" stroke="#888" stroke-width="0.5"/>
<rect x="490.70" y="168.70" width="74.60" height="1.20" fill="#b8b8b8" />
<path d="M494 175.4 C510 174 530 174.6 546 174.2 S560 174.6 562.4 174.4 C550 176 520 175.4 494 175.4z" fill="#333" stroke="#444" stroke-width="0.5"/>
<rect x="490.70" y="180.60" width="74.60" height="0.50" fill="#555" />
<path d="M493 187.2 h69" stroke="#b9b9b9" stroke-width="0.6"/>
<rect x="490.70" y="193.20" width="74.60" height="0.50" fill="#666" />
<path d="M493.4 196 L499.2 196 L499.2 194.8 L556 194.8 L556 196 L562.4 196 L560.2 199.8 L562.4 203.8 L549.6 203.8 L549.6 201.2 L507 201.2 L507 203.8 L493.4 203.8 L495.8 199.8 Z" fill="#6e34a2"/>
<path d="M499.2 201.2 L507 201.2 L507 203.8z M556 201.2 L549.6 201.2 L549.6 203.8z" fill="#47206c"/>
<rect x="490.70" y="205.30" width="74.60" height="0.50" fill="#666" />
<path d="M507.4 208.2 C520 207.4 545 208.6 562.6 207.8 L559.6 211.4 L562.6 215 C540 215.6 520 215.6 507.4 215 Z" fill="#3fbdb1"/>
<path d="M493 210.2 L505.6 207.4 L505.6 215.6 L493 213.2 Z" fill="#d0282c"/><rect x="492.4" y="209.8" width="1.4" height="3.8" fill="#a01c20"/><rect x="505.4" y="207" width="2.4" height="9" rx="1" fill="#2f7c8a"/><path d="M499 214 l0.6 2.6 h1.6 l-0.4 -2.4z" fill="#a01c20"/>
<rect x="490.70" y="217.00" width="74.60" height="1.10" fill="#999" />
<path d="M494 342 h3.4 v-3 h-3.4z M495.6 340.4 h3.4 v3 h-3.4z" fill="#e8e8e8" stroke="#555" stroke-width="0.4"/>
<rect x="490.30" y="348.00" width="40.00" height="45.80" fill="#ececec" stroke="#c0c0c0" stroke-width="0.5"/>
<rect x="490.30" y="348.00" width="40.00" height="7.40" fill="#d2d2d2" />
<rect x="490.30" y="348.00" width="40.00" height="0.60" fill="#f4f4f4" />
<rect x="492.00" y="351.40" width="18.00" height="4.00" fill="#ececec" stroke="#b4b4b4" stroke-width="0.35"/>
<text x="493.40" y="353.80" font-family="'Liberation Sans', sans-serif" font-size="4.0" fill="#333" >◊ Color ×</text>
<rect x="511.00" y="351.40" width="19.00" height="4.00" fill="#cfcfcf" stroke="#b4b4b4" stroke-width="0.35"/>
<text x="512.40" y="353.80" font-family="'Liberation Sans', sans-serif" font-size="4.0" fill="#555" ></text>
<rect x="497.00" y="361.00" width="6.60" height="6.80" fill="#fff" stroke="#444" stroke-width="0.7"/>
<path d="M497.3 367.5 L503.3 361.3" stroke="#e01010" stroke-width="0.9"/>
<rect x="492.70" y="357.00" width="6.80" height="6.80" fill="url(#fs)" stroke="#333" stroke-width="0.5"/>
<text x="507.20" y="362.00" font-family="'Liberation Sans', sans-serif" font-size="3.8" fill="#222" >R</text>
<rect x="511.00" y="359.40" width="8.00" height="2.00" fill="#fff" stroke="#666" stroke-width="0.35"/>
<text x="507.20" y="370.20" font-family="'Liberation Sans', sans-serif" font-size="3.8" fill="#222" >G</text>
<rect x="511.00" y="367.60" width="8.00" height="2.00" fill="#fff" stroke="#666" stroke-width="0.35"/>
<text x="507.20" y="378.80" font-family="'Liberation Sans', sans-serif" font-size="3.8" fill="#222" >B</text>
<rect x="511.00" y="376.20" width="8.00" height="2.00" fill="#fff" stroke="#666" stroke-width="0.35"/>
<path d="M493.6 377.4 l1.6 1 l-1.6 1z" fill="#333"/>
<rect x="498.50" y="376.00" width="5.40" height="5.00" fill="#6e2208" stroke="#222" stroke-width="0.4"/>
<defs><linearGradient id="spec" x1="0" y1="0" x2="1" y2="0"><stop offset="0" stop-color="#e01010"/><stop offset="0.25" stop-color="#f0e010"/><stop offset="0.5" stop-color="#20c020"/><stop offset="0.7" stop-color="#10c0d0"/><stop offset="0.85" stop-color="#2020d0"/><stop offset="1" stop-color="#d010c0"/></linearGradient></defs>
<rect x="498.00" y="383.80" width="32.00" height="6.20" fill="url(#spec)" />
<rect x="492.00" y="383.80" width="6.00" height="6.20" fill="#fff" stroke="#444" stroke-width="0.4"/>
<path d="M492.2 389.8 L497.8 384" stroke="#e01010" stroke-width="0.8"/>
<rect x="512.80" y="396.00" width="6.00" height="7.80" fill="#e2e2e2" />
<rect x="499.50" y="426.30" width="30.00" height="45.70" fill="#ececec" stroke="#c0c0c0" stroke-width="0.5"/>
<rect x="499.50" y="426.30" width="30.00" height="10.00" fill="#d2d2d2" />
<rect x="499.50" y="426.30" width="30.00" height="0.60" fill="#f4f4f4" />
<rect x="501.00" y="429.70" width="15.00" height="6.60" fill="#ececec" stroke="#b4b4b4" stroke-width="0.35"/>
<text x="502.40" y="434.70" font-family="'Liberation Sans', sans-serif" font-size="4.7" fill="#333" >◊ Align</text>
<text x="500.80" y="441.40" font-family="'Liberation Sans', sans-serif" font-size="3.6" fill="#222" font-weight="bold" >Align Objects:</text>
<path d="M503.4 443.6 v5 M504 444.4 h3.4 v1.6 h-3.4z M504 446.6 h5 v1.6 h-5z" fill="#888" stroke="#333" stroke-width="0.45"/>
<text x="500.80" y="455.60" font-family="'Liberation Sans', sans-serif" font-size="3.6" fill="#222" font-weight="bold" >Distribute Objects:</text>
<path d="M503 458 h6 M503 462.4 h6 M504 458.4 h4 v1.4 h-4z M504.6 460.8 h3 v1.4 h-3z" fill="#888" stroke="#333" stroke-width="0.45"/>
<text x="500.80" y="469.00" font-family="'Liberation Sans', sans-serif" font-size="3.6" fill="#222" font-weight="bold" >Distribute Spacing:</text>
<rect x="517.50" y="292.60" width="151.50" height="179.40" fill="#ececec" />
<rect x="517.50" y="292.60" width="151.50" height="7.90" fill="#d2d2d2" />
<rect x="517.50" y="292.60" width="151.50" height="0.60" fill="#f4f4f4" />
<rect x="520.50" y="296.00" width="49.50" height="4.50" fill="#ececec" stroke="#b4b4b4" stroke-width="0.35"/>
<text x="521.90" y="298.90" font-family="'Liberation Sans', sans-serif" font-size="4.3" fill="#333" >PANTONE solid coated ×</text>
<rect x="518.00" y="300.50" width="5.34" height="5.37" fill="#ffe600" />
<rect x="523.34" y="300.50" width="5.34" height="5.37" fill="#ffd800" />
<rect x="528.68" y="300.50" width="5.34" height="5.37" fill="#f59a20" />
<rect x="534.02" y="300.50" width="5.34" height="5.37" fill="#f07828" />
<rect x="539.36" y="300.50" width="5.34" height="5.37" fill="#e8402c" />
<rect x="544.70" y="300.50" width="5.34" height="5.37" fill="#e01070" />
<rect x="550.04" y="300.50" width="5.34" height="5.37" fill="#d040a0" />
<rect x="555.38" y="300.50" width="5.34" height="5.37" fill="#a030a8" />
<rect x="560.72" y="300.50" width="5.34" height="5.37" fill="#5a28a0" />
<rect x="566.06" y="300.50" width="5.34" height="5.37" fill="#3038a8" />
<rect x="571.40" y="300.50" width="5.34" height="5.37" fill="#1c58c4" />
<rect x="576.74" y="300.50" width="5.34" height="5.37" fill="#0c94cc" />
<rect x="582.08" y="300.50" width="5.34" height="5.37" fill="#0c9c8c" />
<rect x="587.42" y="300.50" width="5.34" height="5.37" fill="#080808" />
<rect x="592.76" y="300.50" width="5.34" height="5.37" fill="#ffe600" />
<rect x="598.10" y="300.50" width="5.34" height="5.37" fill="#e01488" />
<rect x="603.44" y="300.50" width="5.34" height="5.37" fill="#18a0dc" />
<rect x="608.78" y="300.50" width="5.34" height="5.37" fill="#080808" />
<rect x="614.12" y="300.50" width="5.34" height="5.37" fill="#ffe000" />
<rect x="619.46" y="300.50" width="5.34" height="5.37" fill="#f08c1c" />
<rect x="624.80" y="300.50" width="5.34" height="5.37" fill="#e42c34" />
<rect x="630.14" y="300.50" width="5.34" height="5.37" fill="#1c9ce0" />
<rect x="635.48" y="300.50" width="5.34" height="5.37" fill="#22aa4c" />
<rect x="640.82" y="300.50" width="5.34" height="5.37" fill="#080808" />
<rect x="646.16" y="300.50" width="5.34" height="5.37" fill="#f4e870" />
<rect x="651.50" y="300.50" width="5.34" height="5.37" fill="#ffe600" />
<rect x="656.84" y="300.50" width="5.34" height="5.37" fill="#ffd800" />
<rect x="662.18" y="300.50" width="5.34" height="5.37" fill="#f6c800" />
<rect x="518.00" y="305.87" width="5.34" height="5.37" fill="#ffe000" />
<rect x="523.34" y="305.87" width="5.34" height="5.37" fill="#e3c800" />
<rect x="528.68" y="305.87" width="5.34" height="5.37" fill="#a38f00" />
<rect x="534.02" y="305.87" width="5.34" height="5.37" fill="#fff080" />
<rect x="539.36" y="305.87" width="5.34" height="5.37" fill="#ffec61" />
<rect x="544.70" y="305.87" width="5.34" height="5.37" fill="#ffe842" />
<rect x="550.04" y="305.87" width="5.34" height="5.37" fill="#ffe421" />
<rect x="555.38" y="305.87" width="5.34" height="5.37" fill="#fcda05" />
<rect x="560.72" y="305.87" width="5.34" height="5.37" fill="#e1c204" />
<rect x="566.06" y="305.87" width="5.34" height="5.37" fill="#a18c03" />
<rect x="571.40" y="305.87" width="5.34" height="5.37" fill="#feec82" />
<rect x="576.74" y="305.87" width="5.34" height="5.37" fill="#fde864" />
<rect x="582.08" y="305.87" width="5.34" height="5.37" fill="#fde446" />
<rect x="587.42" y="305.87" width="5.34" height="5.37" fill="#fcdf26" />
<rect x="592.76" y="305.87" width="5.34" height="5.37" fill="#f9d50a" />
<rect x="598.10" y="305.87" width="5.34" height="5.37" fill="#debe09" />
<rect x="603.44" y="305.87" width="5.34" height="5.37" fill="#9f8806" />
<rect x="608.78" y="305.87" width="5.34" height="5.37" fill="#fcea84" />
<rect x="614.12" y="305.87" width="5.34" height="5.37" fill="#fbe567" />
<rect x="619.46" y="305.87" width="5.34" height="5.37" fill="#fbe04a" />
<rect x="624.80" y="305.87" width="5.34" height="5.37" fill="#fada2a" />
<rect x="630.14" y="305.87" width="5.34" height="5.37" fill="#f6cf0e" />
<rect x="635.48" y="305.87" width="5.34" height="5.37" fill="#dbb90c" />
<rect x="640.82" y="305.87" width="5.34" height="5.37" fill="#9d8409" />
<rect x="646.16" y="305.87" width="5.34" height="5.37" fill="#fae786" />
<rect x="651.50" y="305.87" width="5.34" height="5.37" fill="#f9e16a" />
<rect x="656.84" y="305.87" width="5.34" height="5.37" fill="#f8db4d" />
<rect x="662.18" y="305.87" width="5.34" height="5.37" fill="#f7d52d" />
<rect x="518.00" y="311.24" width="5.34" height="5.37" fill="#f0c418" />
<rect x="523.34" y="311.24" width="5.34" height="5.37" fill="#d6af15" />
<rect x="528.68" y="311.24" width="5.34" height="5.37" fill="#9a7d0f" />
<rect x="534.02" y="311.24" width="5.34" height="5.37" fill="#f8e28c" />
<rect x="539.36" y="311.24" width="5.34" height="5.37" fill="#f6da70" />
<rect x="544.70" y="311.24" width="5.34" height="5.37" fill="#f4d354" />
<rect x="550.04" y="311.24" width="5.34" height="5.37" fill="#f2cc36" />
<rect x="555.38" y="311.24" width="5.34" height="5.37" fill="#ecbd1d" />
<rect x="560.72" y="311.24" width="5.34" height="5.37" fill="#d3a91a" />
<rect x="566.06" y="311.24" width="5.34" height="5.37" fill="#977913" />
<rect x="571.40" y="311.24" width="5.34" height="5.37" fill="#f6de8e" />
<rect x="576.74" y="311.24" width="5.34" height="5.37" fill="#f3d673" />
<rect x="582.08" y="311.24" width="5.34" height="5.37" fill="#f1ce58" />
<rect x="587.42" y="311.24" width="5.34" height="5.37" fill="#eec63a" />
<rect x="592.76" y="311.24" width="5.34" height="5.37" fill="#e8b622" />
<rect x="598.10" y="311.24" width="5.34" height="5.37" fill="#cfa21e" />
<rect x="603.44" y="311.24" width="5.34" height="5.37" fill="#947416" />
<rect x="608.78" y="311.24" width="5.34" height="5.37" fill="#f4da90" />
<rect x="614.12" y="311.24" width="5.34" height="5.37" fill="#f1d276" />
<rect x="619.46" y="311.24" width="5.34" height="5.37" fill="#eec95b" />
<rect x="624.80" y="311.24" width="5.34" height="5.37" fill="#ebbf3f" />
<rect x="630.14" y="311.24" width="5.34" height="5.37" fill="#e4ae26" />
<rect x="635.48" y="311.24" width="5.34" height="5.37" fill="#cb9b22" />
<rect x="640.82" y="311.24" width="5.34" height="5.37" fill="#926f18" />
<rect x="646.16" y="311.24" width="5.34" height="5.37" fill="#f2d692" />
<rect x="651.50" y="311.24" width="5.34" height="5.37" fill="#eecd78" />
<rect x="656.84" y="311.24" width="5.34" height="5.37" fill="#ebc35e" />
<rect x="662.18" y="311.24" width="5.34" height="5.37" fill="#e8b942" />
<rect x="518.00" y="316.61" width="5.34" height="5.37" fill="#dca030" />
<rect x="523.34" y="316.61" width="5.34" height="5.37" fill="#c48f2b" />
<rect x="528.68" y="316.61" width="5.34" height="5.37" fill="#8d661f" />
<rect x="534.02" y="316.61" width="5.34" height="5.37" fill="#eed098" />
<rect x="539.36" y="316.61" width="5.34" height="5.37" fill="#e9c47f" />
<rect x="544.70" y="316.61" width="5.34" height="5.37" fill="#e5b966" />
<rect x="550.04" y="316.61" width="5.34" height="5.37" fill="#e1ac4b" />
<rect x="555.38" y="316.61" width="5.34" height="5.37" fill="#de9b2e" />
<rect x="560.72" y="316.61" width="5.34" height="5.37" fill="#c68a29" />
<rect x="566.06" y="316.61" width="5.34" height="5.37" fill="#8e631d" />
<rect x="571.40" y="316.61" width="5.34" height="5.37" fill="#eecd96" />
<rect x="576.74" y="316.61" width="5.34" height="5.37" fill="#ebc17d" />
<rect x="582.08" y="316.61" width="5.34" height="5.37" fill="#e7b564" />
<rect x="587.42" y="316.61" width="5.34" height="5.37" fill="#e2a849" />
<rect x="592.76" y="316.61" width="5.34" height="5.37" fill="#e1962d" />
<rect x="598.10" y="316.61" width="5.34" height="5.37" fill="#c98628" />
<rect x="603.44" y="316.61" width="5.34" height="5.37" fill="#90601d" />
<rect x="608.78" y="316.61" width="5.34" height="5.37" fill="#f0ca96" />
<rect x="614.12" y="316.61" width="5.34" height="5.37" fill="#ecbe7d" />
<rect x="619.46" y="316.61" width="5.34" height="5.37" fill="#e9b164" />
<rect x="624.80" y="316.61" width="5.34" height="5.37" fill="#e5a448" />
<rect x="630.14" y="316.61" width="5.34" height="5.37" fill="#e3922b" />
<rect x="635.48" y="316.61" width="5.34" height="5.37" fill="#ca8226" />
<rect x="640.82" y="316.61" width="5.34" height="5.37" fill="#915d1c" />
<rect x="646.16" y="316.61" width="5.34" height="5.37" fill="#f1c895" />
<rect x="651.50" y="316.61" width="5.34" height="5.37" fill="#eebb7c" />
<rect x="656.84" y="316.61" width="5.34" height="5.37" fill="#eaae62" />
<rect x="662.18" y="316.61" width="5.34" height="5.37" fill="#e7a047" />
<rect x="518.00" y="321.98" width="5.34" height="5.37" fill="#e88828" />
<rect x="523.34" y="321.98" width="5.34" height="5.37" fill="#cf7924" />
<rect x="528.68" y="321.98" width="5.34" height="5.37" fill="#94571a" />
<rect x="534.02" y="321.98" width="5.34" height="5.37" fill="#f4c494" />
<rect x="539.36" y="321.98" width="5.34" height="5.37" fill="#f1b57a" />
<rect x="544.70" y="321.98" width="5.34" height="5.37" fill="#eea760" />
<rect x="550.04" y="321.98" width="5.34" height="5.37" fill="#eb9744" />
<rect x="555.38" y="321.98" width="5.34" height="5.37" fill="#ea852e" />
<rect x="560.72" y="321.98" width="5.34" height="5.37" fill="#d17729" />
<rect x="566.06" y="321.98" width="5.34" height="5.37" fill="#96551d" />
<rect x="571.40" y="321.98" width="5.34" height="5.37" fill="#f4c296" />
<rect x="576.74" y="321.98" width="5.34" height="5.37" fill="#f2b37d" />
<rect x="582.08" y="321.98" width="5.34" height="5.37" fill="#efa564" />
<rect x="587.42" y="321.98" width="5.34" height="5.37" fill="#ed9549" />
<rect x="592.76" y="321.98" width="5.34" height="5.37" fill="#eb8235" />
<rect x="598.10" y="321.98" width="5.34" height="5.37" fill="#d2742f" />
<rect x="603.44" y="321.98" width="5.34" height="5.37" fill="#965322" />
<rect x="608.78" y="321.98" width="5.34" height="5.37" fill="#f5c09a" />
<rect x="614.12" y="321.98" width="5.34" height="5.37" fill="#f3b282" />
<rect x="619.46" y="321.98" width="5.34" height="5.37" fill="#f0a26a" />
<rect x="624.80" y="321.98" width="5.34" height="5.37" fill="#ee924f" />
<rect x="630.14" y="321.98" width="5.34" height="5.37" fill="#ed7e3b" />
<rect x="635.48" y="321.98" width="5.34" height="5.37" fill="#d37035" />
<rect x="640.82" y="321.98" width="5.34" height="5.37" fill="#985126" />
<rect x="646.16" y="321.98" width="5.34" height="5.37" fill="#f6be9d" />
<rect x="651.50" y="321.98" width="5.34" height="5.37" fill="#f4af85" />
<rect x="656.84" y="321.98" width="5.34" height="5.37" fill="#f2a06e" />
<rect x="662.18" y="321.98" width="5.34" height="5.37" fill="#ef8f54" />
<rect x="518.00" y="327.35" width="5.34" height="5.37" fill="#f07848" />
<rect x="523.34" y="327.35" width="5.34" height="5.37" fill="#d66b40" />
<rect x="528.68" y="327.35" width="5.34" height="5.37" fill="#9a4d2e" />
<rect x="534.02" y="327.35" width="5.34" height="5.37" fill="#f8bca4" />
<rect x="539.36" y="327.35" width="5.34" height="5.37" fill="#f6ab8e" />
<rect x="544.70" y="327.35" width="5.34" height="5.37" fill="#f49b78" />
<rect x="550.04" y="327.35" width="5.34" height="5.37" fill="#f28a60" />
<rect x="555.38" y="327.35" width="5.34" height="5.37" fill="#ee6c4b" />
<rect x="560.72" y="327.35" width="5.34" height="5.37" fill="#d46043" />
<rect x="566.06" y="327.35" width="5.34" height="5.37" fill="#984530" />
<rect x="571.40" y="327.35" width="5.34" height="5.37" fill="#f6b6a5" />
<rect x="576.74" y="327.35" width="5.34" height="5.37" fill="#f4a48f" />
<rect x="582.08" y="327.35" width="5.34" height="5.37" fill="#f2927a" />
<rect x="587.42" y="327.35" width="5.34" height="5.37" fill="#f07f62" />
<rect x="592.76" y="327.35" width="5.34" height="5.37" fill="#ed604e" />
<rect x="598.10" y="327.35" width="5.34" height="5.37" fill="#d35646" />
<rect x="603.44" y="327.35" width="5.34" height="5.37" fill="#983d32" />
<rect x="608.78" y="327.35" width="5.34" height="5.37" fill="#f6b0a6" />
<rect x="614.12" y="327.35" width="5.34" height="5.37" fill="#f49c91" />
<rect x="619.46" y="327.35" width="5.34" height="5.37" fill="#f2897c" />
<rect x="624.80" y="327.35" width="5.34" height="5.37" fill="#ef7565" />
<rect x="630.14" y="327.35" width="5.34" height="5.37" fill="#eb5452" />
<rect x="635.48" y="327.35" width="5.34" height="5.37" fill="#d24b49" />
<rect x="640.82" y="327.35" width="5.34" height="5.37" fill="#963634" />
<rect x="646.16" y="327.35" width="5.34" height="5.37" fill="#f5aaa8" />
<rect x="651.50" y="327.35" width="5.34" height="5.37" fill="#f39594" />
<rect x="656.84" y="327.35" width="5.34" height="5.37" fill="#f0807f" />
<rect x="662.18" y="327.35" width="5.34" height="5.37" fill="#ee6a68" />
<rect x="518.00" y="332.72" width="5.34" height="5.37" fill="#e83c58" />
<rect x="523.34" y="332.72" width="5.34" height="5.37" fill="#cf364e" />
<rect x="528.68" y="332.72" width="5.34" height="5.37" fill="#942638" />
<rect x="534.02" y="332.72" width="5.34" height="5.37" fill="#f49eac" />
<rect x="539.36" y="332.72" width="5.34" height="5.37" fill="#f18697" />
<rect x="544.70" y="332.72" width="5.34" height="5.37" fill="#ee6f83" />
<rect x="550.04" y="332.72" width="5.34" height="5.37" fill="#eb556e" />
<rect x="555.38" y="332.72" width="5.34" height="5.37" fill="#e63660" />
<rect x="560.72" y="332.72" width="5.34" height="5.37" fill="#cd3056" />
<rect x="566.06" y="332.72" width="5.34" height="5.37" fill="#93233d" />
<rect x="571.40" y="332.72" width="5.34" height="5.37" fill="#f29ab0" />
<rect x="576.74" y="332.72" width="5.34" height="5.37" fill="#f0829c" />
<rect x="582.08" y="332.72" width="5.34" height="5.37" fill="#ec6a89" />
<rect x="587.42" y="332.72" width="5.34" height="5.37" fill="#e95075" />
<rect x="592.76" y="332.72" width="5.34" height="5.37" fill="#e53168" />
<rect x="598.10" y="332.72" width="5.34" height="5.37" fill="#cc2c5d" />
<rect x="603.44" y="332.72" width="5.34" height="5.37" fill="#931f43" />
<rect x="608.78" y="332.72" width="5.34" height="5.37" fill="#f298b4" />
<rect x="614.12" y="332.72" width="5.34" height="5.37" fill="#ef7fa1" />
<rect x="619.46" y="332.72" width="5.34" height="5.37" fill="#ec678f" />
<rect x="624.80" y="332.72" width="5.34" height="5.37" fill="#e84c7c" />
<rect x="630.14" y="332.72" width="5.34" height="5.37" fill="#e32b70" />
<rect x="635.48" y="332.72" width="5.34" height="5.37" fill="#ca2664" />
<rect x="640.82" y="332.72" width="5.34" height="5.37" fill="#911c48" />
<rect x="646.16" y="332.72" width="5.34" height="5.37" fill="#f195b8" />
<rect x="651.50" y="332.72" width="5.34" height="5.37" fill="#ee7ca6" />
<rect x="656.84" y="332.72" width="5.34" height="5.37" fill="#ea6295" />
<rect x="662.18" y="332.72" width="5.34" height="5.37" fill="#e74783" />
<rect x="518.00" y="338.09" width="5.34" height="5.37" fill="#e02080" />
<rect x="523.34" y="338.09" width="5.34" height="5.37" fill="#c81d72" />
<rect x="528.68" y="338.09" width="5.34" height="5.37" fill="#8f1452" />
<rect x="534.02" y="338.09" width="5.34" height="5.37" fill="#f090c0" />
<rect x="539.36" y="338.09" width="5.34" height="5.37" fill="#ec75b0" />
<rect x="544.70" y="338.09" width="5.34" height="5.37" fill="#e85aa1" />
<rect x="550.04" y="338.09" width="5.34" height="5.37" fill="#e43d91" />
<rect x="555.38" y="338.09" width="5.34" height="5.37" fill="#da1e83" />
<rect x="560.72" y="338.09" width="5.34" height="5.37" fill="#c21b75" />
<rect x="566.06" y="338.09" width="5.34" height="5.37" fill="#8c1354" />
<rect x="571.40" y="338.09" width="5.34" height="5.37" fill="#ec8ec1" />
<rect x="576.74" y="338.09" width="5.34" height="5.37" fill="#e874b2" />
<rect x="582.08" y="338.09" width="5.34" height="5.37" fill="#e458a3" />
<rect x="587.42" y="338.09" width="5.34" height="5.37" fill="#df3b93" />
<rect x="592.76" y="338.09" width="5.34" height="5.37" fill="#d51d86" />
<rect x="598.10" y="338.09" width="5.34" height="5.37" fill="#be1a78" />
<rect x="603.44" y="338.09" width="5.34" height="5.37" fill="#881356" />
<rect x="608.78" y="338.09" width="5.34" height="5.37" fill="#ea8ec2" />
<rect x="614.12" y="338.09" width="5.34" height="5.37" fill="#e573b4" />
<rect x="619.46" y="338.09" width="5.34" height="5.37" fill="#e058a5" />
<rect x="624.80" y="338.09" width="5.34" height="5.37" fill="#da3a96" />
<rect x="630.14" y="338.09" width="5.34" height="5.37" fill="#cf1b8a" />
<rect x="635.48" y="338.09" width="5.34" height="5.37" fill="#b9187b" />
<rect x="640.82" y="338.09" width="5.34" height="5.37" fill="#841158" />
<rect x="646.16" y="338.09" width="5.34" height="5.37" fill="#e78dc4" />
<rect x="651.50" y="338.09" width="5.34" height="5.37" fill="#e172b6" />
<rect x="656.84" y="338.09" width="5.34" height="5.37" fill="#db56a8" />
<rect x="662.18" y="338.09" width="5.34" height="5.37" fill="#d53999" />
<rect x="518.00" y="343.46" width="5.34" height="5.37" fill="#c41890" />
<rect x="523.34" y="343.46" width="5.34" height="5.37" fill="#af1580" />
<rect x="528.68" y="343.46" width="5.34" height="5.37" fill="#7d0f5c" />
<rect x="534.02" y="343.46" width="5.34" height="5.37" fill="#e28cc8" />
<rect x="539.36" y="343.46" width="5.34" height="5.37" fill="#da70ba" />
<rect x="544.70" y="343.46" width="5.34" height="5.37" fill="#d354ad" />
<rect x="550.04" y="343.46" width="5.34" height="5.37" fill="#cc369e" />
<rect x="555.38" y="343.46" width="5.34" height="5.37" fill="#b81a94" />
<rect x="560.72" y="343.46" width="5.34" height="5.37" fill="#a41784" />
<rect x="566.06" y="343.46" width="5.34" height="5.37" fill="#76115f" />
<rect x="571.40" y="343.46" width="5.34" height="5.37" fill="#dc8cca" />
<rect x="576.74" y="343.46" width="5.34" height="5.37" fill="#d371bd" />
<rect x="582.08" y="343.46" width="5.34" height="5.37" fill="#ca56b0" />
<rect x="587.42" y="343.46" width="5.34" height="5.37" fill="#c138a2" />
<rect x="592.76" y="343.46" width="5.34" height="5.37" fill="#ad1c98" />
<rect x="598.10" y="343.46" width="5.34" height="5.37" fill="#9a1988" />
<rect x="603.44" y="343.46" width="5.34" height="5.37" fill="#6f1261" />
<rect x="608.78" y="343.46" width="5.34" height="5.37" fill="#d68ecc" />
<rect x="614.12" y="343.46" width="5.34" height="5.37" fill="#cc72bf" />
<rect x="619.46" y="343.46" width="5.34" height="5.37" fill="#c257b3" />
<rect x="624.80" y="343.46" width="5.34" height="5.37" fill="#b83aa5" />
<rect x="630.14" y="343.46" width="5.34" height="5.37" fill="#a11e9c" />
<rect x="635.48" y="343.46" width="5.34" height="5.37" fill="#901b8b" />
<rect x="640.82" y="343.46" width="5.34" height="5.37" fill="#671364" />
<rect x="646.16" y="343.46" width="5.34" height="5.37" fill="#d08ece" />
<rect x="651.50" y="343.46" width="5.34" height="5.37" fill="#c574c2" />
<rect x="656.84" y="343.46" width="5.34" height="5.37" fill="#b958b6" />
<rect x="662.18" y="343.46" width="5.34" height="5.37" fill="#ad3ba9" />
<rect x="518.00" y="348.83" width="5.34" height="5.37" fill="#8a22a4" />
<rect x="523.34" y="348.83" width="5.34" height="5.37" fill="#7b1e92" />
<rect x="528.68" y="348.83" width="5.34" height="5.37" fill="#581669" />
<rect x="534.02" y="348.83" width="5.34" height="5.37" fill="#c490d2" />
<rect x="539.36" y="348.83" width="5.34" height="5.37" fill="#b676c7" />
<rect x="544.70" y="348.83" width="5.34" height="5.37" fill="#a85bbc" />
<rect x="550.04" y="348.83" width="5.34" height="5.37" fill="#993fb0" />
<rect x="555.38" y="348.83" width="5.34" height="5.37" fill="#8025a5" />
<rect x="560.72" y="348.83" width="5.34" height="5.37" fill="#722193" />
<rect x="566.06" y="348.83" width="5.34" height="5.37" fill="#52186a" />
<rect x="571.40" y="348.83" width="5.34" height="5.37" fill="#c092d2" />
<rect x="576.74" y="348.83" width="5.34" height="5.37" fill="#b078c7" />
<rect x="582.08" y="348.83" width="5.34" height="5.37" fill="#a15ebc" />
<rect x="587.42" y="348.83" width="5.34" height="5.37" fill="#9141b1" />
<rect x="592.76" y="348.83" width="5.34" height="5.37" fill="#7728a6" />
<rect x="598.10" y="348.83" width="5.34" height="5.37" fill="#6a2494" />
<rect x="603.44" y="348.83" width="5.34" height="5.37" fill="#4c1a6a" />
<rect x="608.78" y="348.83" width="5.34" height="5.37" fill="#bb94d2" />
<rect x="614.12" y="348.83" width="5.34" height="5.37" fill="#ab7ac8" />
<rect x="619.46" y="348.83" width="5.34" height="5.37" fill="#9a60bd" />
<rect x="624.80" y="348.83" width="5.34" height="5.37" fill="#8944b2" />
<rect x="630.14" y="348.83" width="5.34" height="5.37" fill="#6d2aa6" />
<rect x="635.48" y="348.83" width="5.34" height="5.37" fill="#612594" />
<rect x="640.82" y="348.83" width="5.34" height="5.37" fill="#461b6a" />
<rect x="646.16" y="348.83" width="5.34" height="5.37" fill="#b694d2" />
<rect x="651.50" y="348.83" width="5.34" height="5.37" fill="#a47bc8" />
<rect x="656.84" y="348.83" width="5.34" height="5.37" fill="#9361bd" />
<rect x="662.18" y="348.83" width="5.34" height="5.37" fill="#8046b2" />
<rect x="518.00" y="354.20" width="5.34" height="5.37" fill="#5a30a8" />
<rect x="523.34" y="354.20" width="5.34" height="5.37" fill="#502b96" />
<rect x="528.68" y="354.20" width="5.34" height="5.37" fill="#3a1f6c" />
<rect x="534.02" y="354.20" width="5.34" height="5.37" fill="#ac98d4" />
<rect x="539.36" y="354.20" width="5.34" height="5.37" fill="#997fc9" />
<rect x="544.70" y="354.20" width="5.34" height="5.37" fill="#8566bf" />
<rect x="550.04" y="354.20" width="5.34" height="5.37" fill="#6f4bb3" />
<rect x="555.38" y="354.20" width="5.34" height="5.37" fill="#5134aa" />
<rect x="560.72" y="354.20" width="5.34" height="5.37" fill="#482e98" />
<rect x="566.06" y="354.20" width="5.34" height="5.37" fill="#34216d" />
<rect x="571.40" y="354.20" width="5.34" height="5.37" fill="#a89ad4" />
<rect x="576.74" y="354.20" width="5.34" height="5.37" fill="#9381ca" />
<rect x="582.08" y="354.20" width="5.34" height="5.37" fill="#7e69c0" />
<rect x="587.42" y="354.20" width="5.34" height="5.37" fill="#684eb5" />
<rect x="592.76" y="354.20" width="5.34" height="5.37" fill="#4838ad" />
<rect x="598.10" y="354.20" width="5.34" height="5.37" fill="#40329a" />
<rect x="603.44" y="354.20" width="5.34" height="5.37" fill="#2e246f" />
<rect x="608.78" y="354.20" width="5.34" height="5.37" fill="#a49cd6" />
<rect x="614.12" y="354.20" width="5.34" height="5.37" fill="#8e84cc" />
<rect x="619.46" y="354.20" width="5.34" height="5.37" fill="#786cc2" />
<rect x="624.80" y="354.20" width="5.34" height="5.37" fill="#6052b8" />
<rect x="630.14" y="354.20" width="5.34" height="5.37" fill="#3e3caf" />
<rect x="635.48" y="354.20" width="5.34" height="5.37" fill="#37369c" />
<rect x="640.82" y="354.20" width="5.34" height="5.37" fill="#282670" />
<rect x="646.16" y="354.20" width="5.34" height="5.37" fill="#9e9ed7" />
<rect x="651.50" y="354.20" width="5.34" height="5.37" fill="#8786cd" />
<rect x="656.84" y="354.20" width="5.34" height="5.37" fill="#706fc4" />
<rect x="662.18" y="354.20" width="5.34" height="5.37" fill="#5755b9" />
<rect x="518.00" y="359.57" width="5.34" height="5.37" fill="#2c44b4" />
<rect x="523.34" y="359.57" width="5.34" height="5.37" fill="#273da1" />
<rect x="528.68" y="359.57" width="5.34" height="5.37" fill="#1c2c73" />
<rect x="534.02" y="359.57" width="5.34" height="5.37" fill="#96a2da" />
<rect x="539.36" y="359.57" width="5.34" height="5.37" fill="#7c8bd0" />
<rect x="544.70" y="359.57" width="5.34" height="5.37" fill="#6375c8" />
<rect x="550.04" y="359.57" width="5.34" height="5.37" fill="#475cbe" />
<rect x="555.38" y="359.57" width="5.34" height="5.37" fill="#274eb7" />
<rect x="560.72" y="359.57" width="5.34" height="5.37" fill="#2346a3" />
<rect x="566.06" y="359.57" width="5.34" height="5.37" fill="#193275" />
<rect x="571.40" y="359.57" width="5.34" height="5.37" fill="#93a6db" />
<rect x="576.74" y="359.57" width="5.34" height="5.37" fill="#7991d2" />
<rect x="582.08" y="359.57" width="5.34" height="5.37" fill="#5f7cca" />
<rect x="587.42" y="359.57" width="5.34" height="5.37" fill="#4365c0" />
<rect x="592.76" y="359.57" width="5.34" height="5.37" fill="#2259ba" />
<rect x="598.10" y="359.57" width="5.34" height="5.37" fill="#1e4fa6" />
<rect x="603.44" y="359.57" width="5.34" height="5.37" fill="#163977" />
<rect x="608.78" y="359.57" width="5.34" height="5.37" fill="#90acdc" />
<rect x="614.12" y="359.57" width="5.34" height="5.37" fill="#7698d4" />
<rect x="619.46" y="359.57" width="5.34" height="5.37" fill="#5b84cc" />
<rect x="624.80" y="359.57" width="5.34" height="5.37" fill="#3f6fc3" />
<rect x="630.14" y="359.57" width="5.34" height="5.37" fill="#1e63be" />
<rect x="635.48" y="359.57" width="5.34" height="5.37" fill="#1b58a9" />
<rect x="640.82" y="359.57" width="5.34" height="5.37" fill="#133f7a" />
<rect x="646.16" y="359.57" width="5.34" height="5.37" fill="#8eb1de" />
<rect x="651.50" y="359.57" width="5.34" height="5.37" fill="#749ed7" />
<rect x="656.84" y="359.57" width="5.34" height="5.37" fill="#588ccf" />
<rect x="662.18" y="359.57" width="5.34" height="5.37" fill="#3b77c6" />
<rect x="518.00" y="364.94" width="5.34" height="5.37" fill="#1478c4" />
<rect x="523.34" y="364.94" width="5.34" height="5.37" fill="#126baf" />
<rect x="528.68" y="364.94" width="5.34" height="5.37" fill="#0d4d7d" />
<rect x="534.02" y="364.94" width="5.34" height="5.37" fill="#8abce2" />
<rect x="539.36" y="364.94" width="5.34" height="5.37" fill="#6dabda" />
<rect x="544.70" y="364.94" width="5.34" height="5.37" fill="#519bd3" />
<rect x="550.04" y="364.94" width="5.34" height="5.37" fill="#338acc" />
<rect x="555.38" y="364.94" width="5.34" height="5.37" fill="#1380c2" />
<rect x="560.72" y="364.94" width="5.34" height="5.37" fill="#1172ad" />
<rect x="566.06" y="364.94" width="5.34" height="5.37" fill="#0c527c" />
<rect x="571.40" y="364.94" width="5.34" height="5.37" fill="#89c0e0" />
<rect x="576.74" y="364.94" width="5.34" height="5.37" fill="#6db0d9" />
<rect x="582.08" y="364.94" width="5.34" height="5.37" fill="#50a1d2" />
<rect x="587.42" y="364.94" width="5.34" height="5.37" fill="#3291ca" />
<rect x="592.76" y="364.94" width="5.34" height="5.37" fill="#1288bf" />
<rect x="598.10" y="364.94" width="5.34" height="5.37" fill="#1079aa" />
<rect x="603.44" y="364.94" width="5.34" height="5.37" fill="#0c577a" />
<rect x="608.78" y="364.94" width="5.34" height="5.37" fill="#88c4df" />
<rect x="614.12" y="364.94" width="5.34" height="5.37" fill="#6cb5d7" />
<rect x="619.46" y="364.94" width="5.34" height="5.37" fill="#50a7d0" />
<rect x="624.80" y="364.94" width="5.34" height="5.37" fill="#3197c7" />
<rect x="630.14" y="364.94" width="5.34" height="5.37" fill="#1290bd" />
<rect x="635.48" y="364.94" width="5.34" height="5.37" fill="#1080a9" />
<rect x="640.82" y="364.94" width="5.34" height="5.37" fill="#0c5c79" />
<rect x="646.16" y="364.94" width="5.34" height="5.37" fill="#88c8de" />
<rect x="651.50" y="364.94" width="5.34" height="5.37" fill="#6cbad6" />
<rect x="656.84" y="364.94" width="5.34" height="5.37" fill="#50adce" />
<rect x="662.18" y="364.94" width="5.34" height="5.37" fill="#319ec6" />
<rect x="518.00" y="370.31" width="5.34" height="5.37" fill="#10a0b8" />
<rect x="523.34" y="370.31" width="5.34" height="5.37" fill="#0e8fa4" />
<rect x="528.68" y="370.31" width="5.34" height="5.37" fill="#0a6676" />
<rect x="534.02" y="370.31" width="5.34" height="5.37" fill="#88d0dc" />
<rect x="539.36" y="370.31" width="5.34" height="5.37" fill="#6bc4d3" />
<rect x="544.70" y="370.31" width="5.34" height="5.37" fill="#4eb9ca" />
<rect x="550.04" y="370.31" width="5.34" height="5.37" fill="#2facc1" />
<rect x="555.38" y="370.31" width="5.34" height="5.37" fill="#10a1ae" />
<rect x="560.72" y="370.31" width="5.34" height="5.37" fill="#0e909b" />
<rect x="566.06" y="370.31" width="5.34" height="5.37" fill="#0a676f" />
<rect x="571.40" y="370.31" width="5.34" height="5.37" fill="#88d0d6" />
<rect x="576.74" y="370.31" width="5.34" height="5.37" fill="#6bc5cd" />
<rect x="582.08" y="370.31" width="5.34" height="5.37" fill="#4eb9c3" />
<rect x="587.42" y="370.31" width="5.34" height="5.37" fill="#2fadb9" />
<rect x="592.76" y="370.31" width="5.34" height="5.37" fill="#10a2a5" />
<rect x="598.10" y="370.31" width="5.34" height="5.37" fill="#0e9193" />
<rect x="603.44" y="370.31" width="5.34" height="5.37" fill="#0a686a" />
<rect x="608.78" y="370.31" width="5.34" height="5.37" fill="#88d0d2" />
<rect x="614.12" y="370.31" width="5.34" height="5.37" fill="#6bc5c7" />
<rect x="619.46" y="370.31" width="5.34" height="5.37" fill="#4ebabc" />
<rect x="624.80" y="370.31" width="5.34" height="5.37" fill="#2faeb1" />
<rect x="630.14" y="370.31" width="5.34" height="5.37" fill="#10a29b" />
<rect x="635.48" y="370.31" width="5.34" height="5.37" fill="#0e918a" />
<rect x="640.82" y="370.31" width="5.34" height="5.37" fill="#0a6863" />
<rect x="646.16" y="370.31" width="5.34" height="5.37" fill="#88d0cd" />
<rect x="651.50" y="370.31" width="5.34" height="5.37" fill="#6bc5c1" />
<rect x="656.84" y="370.31" width="5.34" height="5.37" fill="#4ebab5" />
<rect x="662.18" y="370.31" width="5.34" height="5.37" fill="#2faea8" />
<rect x="518.00" y="375.68" width="5.34" height="5.37" fill="#10a488" />
<rect x="523.34" y="375.68" width="5.34" height="5.37" fill="#0e9279" />
<rect x="528.68" y="375.68" width="5.34" height="5.37" fill="#0a6957" />
<rect x="534.02" y="375.68" width="5.34" height="5.37" fill="#88d2c4" />
<rect x="539.36" y="375.68" width="5.34" height="5.37" fill="#6bc7b5" />
<rect x="544.70" y="375.68" width="5.34" height="5.37" fill="#4ebca7" />
<rect x="550.04" y="375.68" width="5.34" height="5.37" fill="#2fb097" />
<rect x="555.38" y="375.68" width="5.34" height="5.37" fill="#16a57d" />
<rect x="560.72" y="375.68" width="5.34" height="5.37" fill="#149370" />
<rect x="566.06" y="375.68" width="5.34" height="5.37" fill="#0e6a50" />
<rect x="571.40" y="375.68" width="5.34" height="5.37" fill="#8ad2be" />
<rect x="576.74" y="375.68" width="5.34" height="5.37" fill="#6fc7ae" />
<rect x="582.08" y="375.68" width="5.34" height="5.37" fill="#53bc9f" />
<rect x="587.42" y="375.68" width="5.34" height="5.37" fill="#34b18e" />
<rect x="592.76" y="375.68" width="5.34" height="5.37" fill="#1ba672" />
<rect x="598.10" y="375.68" width="5.34" height="5.37" fill="#189466" />
<rect x="603.44" y="375.68" width="5.34" height="5.37" fill="#116a49" />
<rect x="608.78" y="375.68" width="5.34" height="5.37" fill="#8dd2b8" />
<rect x="614.12" y="375.68" width="5.34" height="5.37" fill="#72c8a8" />
<rect x="619.46" y="375.68" width="5.34" height="5.37" fill="#56bd97" />
<rect x="624.80" y="375.68" width="5.34" height="5.37" fill="#39b284" />
<rect x="630.14" y="375.68" width="5.34" height="5.37" fill="#21a666" />
<rect x="635.48" y="375.68" width="5.34" height="5.37" fill="#1d945b" />
<rect x="640.82" y="375.68" width="5.34" height="5.37" fill="#156a41" />
<rect x="646.16" y="375.68" width="5.34" height="5.37" fill="#90d2b2" />
<rect x="651.50" y="375.68" width="5.34" height="5.37" fill="#75c8a0" />
<rect x="656.84" y="375.68" width="5.34" height="5.37" fill="#5bbd8e" />
<rect x="662.18" y="375.68" width="5.34" height="5.37" fill="#3eb27a" />
<rect x="518.00" y="381.05" width="5.34" height="5.37" fill="#2ca850" />
<rect x="523.34" y="381.05" width="5.34" height="5.37" fill="#279647" />
<rect x="528.68" y="381.05" width="5.34" height="5.37" fill="#1c6c33" />
<rect x="534.02" y="381.05" width="5.34" height="5.37" fill="#96d4a8" />
<rect x="539.36" y="381.05" width="5.34" height="5.37" fill="#7cc992" />
<rect x="544.70" y="381.05" width="5.34" height="5.37" fill="#63bf7e" />
<rect x="550.04" y="381.05" width="5.34" height="5.37" fill="#47b367" />
<rect x="555.38" y="381.05" width="5.34" height="5.37" fill="#41ae49" />
<rect x="560.72" y="381.05" width="5.34" height="5.37" fill="#3a9b41" />
<rect x="566.06" y="381.05" width="5.34" height="5.37" fill="#2a6f2f" />
<rect x="571.40" y="381.05" width="5.34" height="5.37" fill="#a0d6a4" />
<rect x="576.74" y="381.05" width="5.34" height="5.37" fill="#89cd8e" />
<rect x="582.08" y="381.05" width="5.34" height="5.37" fill="#72c378" />
<rect x="587.42" y="381.05" width="5.34" height="5.37" fill="#5ab961" />
<rect x="592.76" y="381.05" width="5.34" height="5.37" fill="#56b342" />
<rect x="598.10" y="381.05" width="5.34" height="5.37" fill="#4da03b" />
<rect x="603.44" y="381.05" width="5.34" height="5.37" fill="#37732a" />
<rect x="608.78" y="381.05" width="5.34" height="5.37" fill="#aad9a0" />
<rect x="614.12" y="381.05" width="5.34" height="5.37" fill="#96d08a" />
<rect x="619.46" y="381.05" width="5.34" height="5.37" fill="#82c773" />
<rect x="624.80" y="381.05" width="5.34" height="5.37" fill="#6cbd5b" />
<rect x="630.14" y="381.05" width="5.34" height="5.37" fill="#6ab93a" />
<rect x="635.48" y="381.05" width="5.34" height="5.37" fill="#5fa534" />
<rect x="640.82" y="381.05" width="5.34" height="5.37" fill="#447625" />
<rect x="646.16" y="381.05" width="5.34" height="5.37" fill="#b4dc9c" />
<rect x="651.50" y="381.05" width="5.34" height="5.37" fill="#a3d485" />
<rect x="656.84" y="381.05" width="5.34" height="5.37" fill="#91cb6d" />
<rect x="662.18" y="381.05" width="5.34" height="5.37" fill="#7dc254" />
<rect x="518.00" y="386.42" width="5.34" height="5.37" fill="#94c42c" />
<rect x="523.34" y="386.42" width="5.34" height="5.37" fill="#84af27" />
<rect x="528.68" y="386.42" width="5.34" height="5.37" fill="#5f7d1c" />
<rect x="534.02" y="386.42" width="5.34" height="5.37" fill="#cae296" />
<rect x="539.36" y="386.42" width="5.34" height="5.37" fill="#bdda7c" />
<rect x="544.70" y="386.42" width="5.34" height="5.37" fill="#b0d363" />
<rect x="550.04" y="386.42" width="5.34" height="5.37" fill="#a2cc47" />
<rect x="555.38" y="386.42" width="5.34" height="5.37" fill="#a4c92a" />
<rect x="560.72" y="386.42" width="5.34" height="5.37" fill="#92b325" />
<rect x="566.06" y="386.42" width="5.34" height="5.37" fill="#69811b" />
<rect x="571.40" y="386.42" width="5.34" height="5.37" fill="#d2e494" />
<rect x="576.74" y="386.42" width="5.34" height="5.37" fill="#c7de7b" />
<rect x="582.08" y="386.42" width="5.34" height="5.37" fill="#bcd761" />
<rect x="587.42" y="386.42" width="5.34" height="5.37" fill="#b0d046" />
<rect x="592.76" y="386.42" width="5.34" height="5.37" fill="#b4ce27" />
<rect x="598.10" y="386.42" width="5.34" height="5.37" fill="#a1b823" />
<rect x="603.44" y="386.42" width="5.34" height="5.37" fill="#738419" />
<rect x="608.78" y="386.42" width="5.34" height="5.37" fill="#dae693" />
<rect x="614.12" y="386.42" width="5.34" height="5.37" fill="#d0e179" />
<rect x="619.46" y="386.42" width="5.34" height="5.37" fill="#c8db5f" />
<rect x="624.80" y="386.42" width="5.34" height="5.37" fill="#bed443" />
<rect x="630.14" y="386.42" width="5.34" height="5.37" fill="#c4d225" />
<rect x="635.48" y="386.42" width="5.34" height="5.37" fill="#afbb21" />
<rect x="640.82" y="386.42" width="5.34" height="5.37" fill="#7d8618" />
<rect x="646.16" y="386.42" width="5.34" height="5.37" fill="#e2e892" />
<rect x="651.50" y="386.42" width="5.34" height="5.37" fill="#dae378" />
<rect x="656.84" y="386.42" width="5.34" height="5.37" fill="#d3de5e" />
<rect x="662.18" y="386.42" width="5.34" height="5.37" fill="#ccd841" />
<rect x="518.00" y="391.79" width="5.34" height="5.37" fill="#e4dc20" />
<rect x="523.34" y="391.79" width="5.34" height="5.37" fill="#cbc41d" />
<rect x="528.68" y="391.79" width="5.34" height="5.37" fill="#928d14" />
<rect x="534.02" y="391.79" width="5.34" height="5.37" fill="#f2ee90" />
<rect x="539.36" y="391.79" width="5.34" height="5.37" fill="#eee975" />
<rect x="544.70" y="391.79" width="5.34" height="5.37" fill="#ebe55a" />
<rect x="550.04" y="391.79" width="5.34" height="5.37" fill="#e8e13d" />
<rect x="555.38" y="391.79" width="5.34" height="5.37" fill="#dad222" />
<rect x="560.72" y="391.79" width="5.34" height="5.37" fill="#c2bb1e" />
<rect x="566.06" y="391.79" width="5.34" height="5.37" fill="#8c8616" />
<rect x="571.40" y="391.79" width="5.34" height="5.37" fill="#ece890" />
<rect x="576.74" y="391.79" width="5.34" height="5.37" fill="#e8e376" />
<rect x="582.08" y="391.79" width="5.34" height="5.37" fill="#e4de5b" />
<rect x="587.42" y="391.79" width="5.34" height="5.37" fill="#dfd83f" />
<rect x="592.76" y="391.79" width="5.34" height="5.37" fill="#d1c923" />
<rect x="598.10" y="391.79" width="5.34" height="5.37" fill="#bab31f" />
<rect x="603.44" y="391.79" width="5.34" height="5.37" fill="#868116" />
<rect x="608.78" y="391.79" width="5.34" height="5.37" fill="#e8e491" />
<rect x="614.12" y="391.79" width="5.34" height="5.37" fill="#e2de77" />
<rect x="619.46" y="391.79" width="5.34" height="5.37" fill="#ddd75c" />
<rect x="624.80" y="391.79" width="5.34" height="5.37" fill="#d7d040" />
<rect x="630.14" y="391.79" width="5.34" height="5.37" fill="#c7bf25" />
<rect x="635.48" y="391.79" width="5.34" height="5.37" fill="#b2aa21" />
<rect x="640.82" y="391.79" width="5.34" height="5.37" fill="#7f7a18" />
<rect x="646.16" y="391.79" width="5.34" height="5.37" fill="#e3df92" />
<rect x="651.50" y="391.79" width="5.34" height="5.37" fill="#dcd778" />
<rect x="656.84" y="391.79" width="5.34" height="5.37" fill="#d6d05e" />
<rect x="662.18" y="391.79" width="5.34" height="5.37" fill="#cec741" />
<rect x="518.00" y="397.16" width="5.34" height="5.37" fill="#b4ac28" />
<rect x="523.34" y="397.16" width="5.34" height="5.37" fill="#a19924" />
<rect x="528.68" y="397.16" width="5.34" height="5.37" fill="#736e1a" />
<rect x="534.02" y="397.16" width="5.34" height="5.37" fill="#dad694" />
<rect x="539.36" y="397.16" width="5.34" height="5.37" fill="#d0cc7a" />
<rect x="544.70" y="397.16" width="5.34" height="5.37" fill="#c8c260" />
<rect x="550.04" y="397.16" width="5.34" height="5.37" fill="#beb744" />
<rect x="555.38" y="397.16" width="5.34" height="5.37" fill="#afa83f" />
<rect x="560.72" y="397.16" width="5.34" height="5.37" fill="#9c9638" />
<rect x="566.06" y="397.16" width="5.34" height="5.37" fill="#0a0a0a" />
<rect x="571.40" y="397.16" width="5.34" height="5.37" fill="#d7d49f" />
<rect x="576.74" y="397.16" width="5.34" height="5.37" fill="#cdc988" />
<rect x="582.08" y="397.16" width="5.34" height="5.37" fill="#c4bf71" />
<rect x="587.42" y="397.16" width="5.34" height="5.37" fill="#b9b358" />
<rect x="592.76" y="397.16" width="5.34" height="5.37" fill="#c4c4bc" />
<rect x="598.10" y="397.16" width="5.34" height="5.37" fill="#b4b4ac" />
<rect x="603.44" y="397.16" width="5.34" height="5.37" fill="#0a0a0a" />
<rect x="608.78" y="397.16" width="5.34" height="5.37" fill="#d3d3cd" />
<rect x="614.12" y="397.16" width="5.34" height="5.37" fill="#c2c2bc" />
<rect x="619.46" y="397.16" width="5.34" height="5.37" fill="#a9a9a5" />
<rect x="624.80" y="397.16" width="5.34" height="5.37" fill="#c8c8c0" />
<rect x="630.14" y="397.16" width="5.34" height="5.37" fill="#b4b4ac" />
<rect x="635.48" y="397.16" width="5.34" height="5.37" fill="#9c9c98" />
<rect x="640.82" y="397.16" width="5.34" height="5.37" fill="#0a0a0a" />
<rect x="646.16" y="397.16" width="5.34" height="5.37" fill="#c7c7c1" />
<rect x="651.50" y="397.16" width="5.34" height="5.37" fill="#afafac" />
<rect x="656.84" y="397.16" width="5.34" height="5.37" fill="#ccccc5" />
<rect x="662.18" y="397.16" width="5.34" height="5.37" fill="#b9b9b1" />
<rect x="518.00" y="402.53" width="5.34" height="5.37" fill="#9a9a9a" />
<rect x="523.34" y="402.53" width="5.34" height="5.37" fill="#8e8e8e" />
<rect x="528.68" y="402.53" width="5.34" height="5.37" fill="#0a0a0a" />
<rect x="534.02" y="402.53" width="5.34" height="5.37" fill="#bdbdbd" />
<rect x="539.36" y="402.53" width="5.34" height="5.37" fill="#b5b5b5" />
<rect x="544.70" y="402.53" width="5.34" height="5.37" fill="#acacac" />
<rect x="550.04" y="402.53" width="5.34" height="5.37" fill="#a3a3a3" />
<rect x="555.38" y="402.53" width="5.34" height="5.37" fill="#9d9b97" />
<rect x="560.72" y="402.53" width="5.34" height="5.37" fill="#918f8c" />
<rect x="566.06" y="402.53" width="5.34" height="5.37" fill="#757471" />
<rect x="571.40" y="402.53" width="5.34" height="5.37" fill="#bfbebb" />
<rect x="576.74" y="402.53" width="5.34" height="5.37" fill="#b7b6b3" />
<rect x="582.08" y="402.53" width="5.34" height="5.37" fill="#afadaa" />
<rect x="587.42" y="402.53" width="5.34" height="5.37" fill="#a6a4a0" />
<rect x="592.76" y="402.53" width="5.34" height="5.37" fill="#a09c94" />
<rect x="598.10" y="402.53" width="5.34" height="5.37" fill="#949089" />
<rect x="603.44" y="402.53" width="5.34" height="5.37" fill="#78756f" />
<rect x="608.78" y="402.53" width="5.34" height="5.37" fill="#c1bfb9" />
<rect x="614.12" y="402.53" width="5.34" height="5.37" fill="#b9b6b0" />
<rect x="619.46" y="402.53" width="5.34" height="5.37" fill="#b1aea7" />
<rect x="624.80" y="402.53" width="5.34" height="5.37" fill="#a9a59e" />
<rect x="630.14" y="402.53" width="5.34" height="5.37" fill="#a29e92" />
<rect x="635.48" y="402.53" width="5.34" height="5.37" fill="#969287" />
<rect x="640.82" y="402.53" width="5.34" height="5.37" fill="#79766d" />
<rect x="646.16" y="402.53" width="5.34" height="5.37" fill="#c3c0b8" />
<rect x="651.50" y="402.53" width="5.34" height="5.37" fill="#bbb8af" />
<rect x="656.84" y="402.53" width="5.34" height="5.37" fill="#b3b0a6" />
<rect x="662.18" y="402.53" width="5.34" height="5.37" fill="#aaa79c" />
<rect x="518.00" y="407.90" width="5.34" height="5.37" fill="#a8a08c" />
<rect x="523.34" y="407.90" width="5.34" height="5.37" fill="#9b9481" />
<rect x="528.68" y="407.90" width="5.34" height="5.37" fill="#7e7869" />
<rect x="534.02" y="407.90" width="5.34" height="5.37" fill="#c6c1b4" />
<rect x="539.36" y="407.90" width="5.34" height="5.37" fill="#bfb9ab" />
<rect x="544.70" y="407.90" width="5.34" height="5.37" fill="#b8b1a1" />
<rect x="550.04" y="407.90" width="5.34" height="5.37" fill="#b0a996" />
<rect x="555.38" y="407.90" width="5.34" height="5.37" fill="#f4f4f4" />
<rect x="560.72" y="407.90" width="5.34" height="5.37" fill="#96896d" />
<rect x="566.06" y="407.90" width="5.34" height="5.37" fill="#796f58" />
<rect x="571.40" y="407.90" width="5.34" height="5.37" fill="#c3b9a6" />
<rect x="576.74" y="407.90" width="5.34" height="5.37" fill="#bbb09a" />
<rect x="582.08" y="407.90" width="5.34" height="5.37" fill="#b3a78f" />
<rect x="587.42" y="407.90" width="5.34" height="5.37" fill="#aa9e82" />
<rect x="592.76" y="407.90" width="5.34" height="5.37" fill="#9c885f" />
<rect x="598.10" y="407.90" width="5.34" height="5.37" fill="#907e58" />
<rect x="603.44" y="407.90" width="5.34" height="5.37" fill="#756647" />
<rect x="608.78" y="407.90" width="5.34" height="5.37" fill="#bfb297" />
<rect x="614.12" y="407.90" width="5.34" height="5.37" fill="#b6a88a" />
<rect x="619.46" y="407.90" width="5.34" height="5.37" fill="#ae9e7c" />
<rect x="624.80" y="407.90" width="5.34" height="5.37" fill="#a5936e" />
<rect x="630.14" y="407.90" width="5.34" height="5.37" fill="#967c49" />
<rect x="635.48" y="407.90" width="5.34" height="5.37" fill="#0a0a0a" />
<rect x="640.82" y="407.90" width="5.34" height="5.37" fill="#705d37" />
<rect x="646.16" y="407.90" width="5.34" height="5.37" fill="#bbaa89" />
<rect x="651.50" y="407.90" width="5.34" height="5.37" fill="#b29f79" />
<rect x="656.84" y="407.90" width="5.34" height="5.37" fill="#a9946a" />
<rect x="662.18" y="407.90" width="5.34" height="5.37" fill="#a0885a" />
<rect x="518.00" y="413.27" width="5.34" height="5.37" fill="#c7bba3" />
<rect x="523.34" y="413.27" width="5.34" height="5.37" fill="#d0c6b2" />
<rect x="528.68" y="413.27" width="5.34" height="5.37" fill="#d9d1c2" />
<rect x="534.02" y="413.27" width="5.34" height="5.37" fill="#45320e" />
<rect x="539.36" y="413.27" width="5.34" height="5.37" fill="#6e5016" />
<rect x="544.70" y="413.27" width="5.34" height="5.37" fill="#906c27" />
<rect x="550.04" y="413.27" width="5.34" height="5.37" fill="#a18349" />
<rect x="555.38" y="413.27" width="5.34" height="5.37" fill="#b19767" />
<rect x="560.72" y="413.27" width="5.34" height="5.37" fill="#bfaa82" />
<rect x="566.06" y="413.27" width="5.34" height="5.37" fill="#cab999" />
<rect x="571.40" y="413.27" width="5.34" height="5.37" fill="#45320e" />
<rect x="576.74" y="413.27" width="5.34" height="5.37" fill="#6e5016" />
<rect x="582.08" y="413.27" width="5.34" height="5.37" fill="#906c27" />
<rect x="587.42" y="413.27" width="5.34" height="5.37" fill="#a18349" />
<rect x="592.76" y="413.27" width="5.34" height="5.37" fill="#b19767" />
<rect x="598.10" y="413.27" width="5.34" height="5.37" fill="#bfaa82" />
<rect x="603.44" y="413.27" width="5.34" height="5.37" fill="#cab999" />
<rect x="608.78" y="413.27" width="5.34" height="5.37" fill="#45320e" />
<rect x="614.12" y="413.27" width="5.34" height="5.37" fill="#6e5016" />
<rect x="619.46" y="413.27" width="5.34" height="5.37" fill="#906c27" />
<rect x="624.80" y="413.27" width="5.34" height="5.37" fill="#a18349" />
<rect x="630.14" y="413.27" width="5.34" height="5.37" fill="#b19767" />
<rect x="635.48" y="413.27" width="5.34" height="5.37" fill="#bfaa82" />
<rect x="640.82" y="413.27" width="5.34" height="5.37" fill="#cab999" />
<rect x="646.16" y="413.27" width="5.34" height="5.37" fill="#45320e" />
<rect x="651.50" y="413.27" width="5.34" height="5.37" fill="#6e5016" />
<rect x="656.84" y="413.27" width="5.34" height="5.37" fill="#906c27" />
<rect x="662.18" y="413.27" width="5.34" height="5.37" fill="#a18349" />
<rect x="518.00" y="418.64" width="5.34" height="5.37" fill="#d1b8a4" />
<rect x="523.34" y="418.64" width="5.34" height="5.37" fill="#d8c4b4" />
<rect x="528.68" y="418.64" width="5.34" height="5.37" fill="#e0d0c3" />
<rect x="534.02" y="418.64" width="5.34" height="5.37" fill="#5a2d10" />
<rect x="539.36" y="418.64" width="5.34" height="5.37" fill="#90481a" />
<rect x="544.70" y="418.64" width="5.34" height="5.37" fill="#b8622b" />
<rect x="550.04" y="418.64" width="5.34" height="5.37" fill="#c37b4d" />
<rect x="555.38" y="418.64" width="5.34" height="5.37" fill="#cd906a" />
<rect x="560.72" y="418.64" width="5.34" height="5.37" fill="#d6a484" />
<rect x="566.06" y="418.64" width="5.34" height="5.37" fill="#ddb59b" />
<rect x="571.40" y="418.64" width="5.34" height="5.37" fill="#5a2d10" />
<rect x="576.74" y="418.64" width="5.34" height="5.37" fill="#90481a" />
<rect x="582.08" y="418.64" width="5.34" height="5.37" fill="#b8622b" />
<rect x="587.42" y="418.64" width="5.34" height="5.37" fill="#c37b4d" />
<rect x="592.76" y="418.64" width="5.34" height="5.37" fill="#cd906a" />
<rect x="598.10" y="418.64" width="5.34" height="5.37" fill="#d6a484" />
<rect x="603.44" y="418.64" width="5.34" height="5.37" fill="#ddb59b" />
<rect x="608.78" y="418.64" width="5.34" height="5.37" fill="#5a2d10" />
<rect x="614.12" y="418.64" width="5.34" height="5.37" fill="#90481a" />
<rect x="619.46" y="418.64" width="5.34" height="5.37" fill="#b8622b" />
<rect x="624.80" y="418.64" width="5.34" height="5.37" fill="#c37b4d" />
<rect x="630.14" y="418.64" width="5.34" height="5.37" fill="#cd906a" />
<rect x="635.48" y="418.64" width="5.34" height="5.37" fill="#d6a484" />
<rect x="640.82" y="418.64" width="5.34" height="5.37" fill="#ddb59b" />
<rect x="646.16" y="418.64" width="5.34" height="5.37" fill="#6c1a10" />
<rect x="651.50" y="418.64" width="5.34" height="5.37" fill="#ad2a1a" />
<rect x="656.84" y="418.64" width="5.34" height="5.37" fill="#da3e2b" />
<rect x="662.18" y="418.64" width="5.34" height="5.37" fill="#e05d4d" />
<rect x="518.00" y="424.01" width="5.34" height="5.37" fill="#d6b3b5" />
<rect x="523.34" y="424.01" width="5.34" height="5.37" fill="#dcc0c2" />
<rect x="528.68" y="424.01" width="5.34" height="5.37" fill="#e3ccce" />
<rect x="534.02" y="424.01" width="5.34" height="5.37" fill="#642233" />
<rect x="539.36" y="424.01" width="5.34" height="5.37" fill="#a03652" />
<rect x="544.70" y="424.01" width="5.34" height="5.37" fill="#cb4d6e" />
<rect x="550.04" y="424.01" width="5.34" height="5.37" fill="#d36985" />
<rect x="555.38" y="424.01" width="5.34" height="5.37" fill="#da8298" />
<rect x="560.72" y="424.01" width="5.34" height="5.37" fill="#e198ab" />
<rect x="566.06" y="424.01" width="5.34" height="5.37" fill="#e6abba" />
<rect x="571.40" y="424.01" width="5.34" height="5.37" fill="#642233" />
<rect x="576.74" y="424.01" width="5.34" height="5.37" fill="#a03652" />
<rect x="582.08" y="424.01" width="5.34" height="5.37" fill="#cb4d6e" />
<rect x="587.42" y="424.01" width="5.34" height="5.37" fill="#d36985" />
<rect x="592.76" y="424.01" width="5.34" height="5.37" fill="#da8298" />
<rect x="598.10" y="424.01" width="5.34" height="5.37" fill="#e198ab" />
<rect x="603.44" y="424.01" width="5.34" height="5.37" fill="#e6abba" />
<rect x="608.78" y="424.01" width="5.34" height="5.37" fill="#642233" />
<rect x="614.12" y="424.01" width="5.34" height="5.37" fill="#a03652" />
<rect x="619.46" y="424.01" width="5.34" height="5.37" fill="#cb4d6e" />
<rect x="624.80" y="424.01" width="5.34" height="5.37" fill="#d36985" />
<rect x="630.14" y="424.01" width="5.34" height="5.37" fill="#da8298" />
<rect x="635.48" y="424.01" width="5.34" height="5.37" fill="#e198ab" />
<rect x="640.82" y="424.01" width="5.34" height="5.37" fill="#e6abba" />
<rect x="646.16" y="424.01" width="5.34" height="5.37" fill="#642233" />
<rect x="651.50" y="424.01" width="5.34" height="5.37" fill="#a03652" />
<rect x="656.84" y="424.01" width="5.34" height="5.37" fill="#cb4d6e" />
<rect x="662.18" y="424.01" width="5.34" height="5.37" fill="#d36985" />
<rect x="518.00" y="429.38" width="5.34" height="5.37" fill="#c5aec4" />
<rect x="523.34" y="429.38" width="5.34" height="5.37" fill="#cfbcce" />
<rect x="528.68" y="429.38" width="5.34" height="5.37" fill="#d9c9d8" />
<rect x="534.02" y="429.38" width="5.34" height="5.37" fill="#431852" />
<rect x="539.36" y="429.38" width="5.34" height="5.37" fill="#6b2683" />
<rect x="544.70" y="429.38" width="5.34" height="5.37" fill="#8c3aa9" />
<rect x="550.04" y="429.38" width="5.34" height="5.37" fill="#9e59b6" />
<rect x="555.38" y="429.38" width="5.34" height="5.37" fill="#ae74c2" />
<rect x="560.72" y="429.38" width="5.34" height="5.37" fill="#bc8dcd" />
<rect x="566.06" y="429.38" width="5.34" height="5.37" fill="#c9a2d6" />
<rect x="571.40" y="429.38" width="5.34" height="5.37" fill="#431852" />
<rect x="576.74" y="429.38" width="5.34" height="5.37" fill="#6b2683" />
<rect x="582.08" y="429.38" width="5.34" height="5.37" fill="#8c3aa9" />
<rect x="587.42" y="429.38" width="5.34" height="5.37" fill="#9e59b6" />
<rect x="592.76" y="429.38" width="5.34" height="5.37" fill="#ae74c2" />
<rect x="598.10" y="429.38" width="5.34" height="5.37" fill="#bc8dcd" />
<rect x="603.44" y="429.38" width="5.34" height="5.37" fill="#c9a2d6" />
<rect x="608.78" y="429.38" width="5.34" height="5.37" fill="#431852" />
<rect x="614.12" y="429.38" width="5.34" height="5.37" fill="#6b2683" />
<rect x="619.46" y="429.38" width="5.34" height="5.37" fill="#8c3aa9" />
<rect x="624.80" y="429.38" width="5.34" height="5.37" fill="#9e59b6" />
<rect x="630.14" y="429.38" width="5.34" height="5.37" fill="#ae74c2" />
<rect x="635.48" y="429.38" width="5.34" height="5.37" fill="#bc8dcd" />
<rect x="640.82" y="429.38" width="5.34" height="5.37" fill="#c9a2d6" />
<rect x="646.16" y="429.38" width="5.34" height="5.37" fill="#431852" />
<rect x="651.50" y="429.38" width="5.34" height="5.37" fill="#6b2683" />
<rect x="656.84" y="429.38" width="5.34" height="5.37" fill="#8c3aa9" />
<rect x="662.18" y="429.38" width="5.34" height="5.37" fill="#9e59b6" />
<rect x="518.00" y="434.75" width="5.34" height="5.37" fill="#b6b3c5" />
<rect x="523.34" y="434.75" width="5.34" height="5.37" fill="#c2c0ce" />
<rect x="528.68" y="434.75" width="5.34" height="5.37" fill="#cfccd8" />
<rect x="534.02" y="434.75" width="5.34" height="5.37" fill="#232253" />
<rect x="539.36" y="434.75" width="5.34" height="5.37" fill="#383685" />
<rect x="544.70" y="434.75" width="5.34" height="5.37" fill="#4f4daa" />
<rect x="550.04" y="434.75" width="5.34" height="5.37" fill="#6b69b8" />
<rect x="555.38" y="434.75" width="5.34" height="5.37" fill="#8382c3" />
<rect x="560.72" y="434.75" width="5.34" height="5.37" fill="#9998ce" />
<rect x="566.06" y="434.75" width="5.34" height="5.37" fill="#acabd7" />
<rect x="571.40" y="434.75" width="5.34" height="5.37" fill="#232253" />
<rect x="576.74" y="434.75" width="5.34" height="5.37" fill="#383685" />
<rect x="582.08" y="434.75" width="5.34" height="5.37" fill="#4f4daa" />
<rect x="587.42" y="434.75" width="5.34" height="5.37" fill="#6b69b8" />
<rect x="592.76" y="434.75" width="5.34" height="5.37" fill="#8382c3" />
<rect x="598.10" y="434.75" width="5.34" height="5.37" fill="#9998ce" />
<rect x="603.44" y="434.75" width="5.34" height="5.37" fill="#acabd7" />
<rect x="608.78" y="434.75" width="5.34" height="5.37" fill="#232253" />
<rect x="614.12" y="434.75" width="5.34" height="5.37" fill="#383685" />
<rect x="619.46" y="434.75" width="5.34" height="5.37" fill="#4f4daa" />
<rect x="624.80" y="434.75" width="5.34" height="5.37" fill="#6b69b8" />
<rect x="630.14" y="434.75" width="5.34" height="5.37" fill="#8382c3" />
<rect x="635.48" y="434.75" width="5.34" height="5.37" fill="#9998ce" />
<rect x="640.82" y="434.75" width="5.34" height="5.37" fill="#acabd7" />
<rect x="646.16" y="434.75" width="5.34" height="5.37" fill="#232253" />
<rect x="651.50" y="434.75" width="5.34" height="5.37" fill="#383685" />
<rect x="656.84" y="434.75" width="5.34" height="5.37" fill="#4f4daa" />
<rect x="662.18" y="434.75" width="5.34" height="5.37" fill="#6b69b8" />
<rect x="518.00" y="440.12" width="5.34" height="5.37" fill="#aebbc8" />
<rect x="523.34" y="440.12" width="5.34" height="5.37" fill="#bcc6d1" />
<rect x="528.68" y="440.12" width="5.34" height="5.37" fill="#c9d2da" />
<rect x="534.02" y="440.12" width="5.34" height="5.37" fill="#12345a" />
<rect x="539.36" y="440.12" width="5.34" height="5.37" fill="#1d5390" />
<rect x="544.70" y="440.12" width="5.34" height="5.37" fill="#2f70b8" />
<rect x="550.04" y="440.12" width="5.34" height="5.37" fill="#5086c3" />
<rect x="555.38" y="440.12" width="5.34" height="5.37" fill="#6c9acd" />
<rect x="560.72" y="440.12" width="5.34" height="5.37" fill="#87acd6" />
<rect x="566.06" y="440.12" width="5.34" height="5.37" fill="#9cbbdd" />
<rect x="571.40" y="440.12" width="5.34" height="5.37" fill="#12345a" />
<rect x="576.74" y="440.12" width="5.34" height="5.37" fill="#1d5390" />
<rect x="582.08" y="440.12" width="5.34" height="5.37" fill="#2f70b8" />
<rect x="587.42" y="440.12" width="5.34" height="5.37" fill="#5086c3" />
<rect x="592.76" y="440.12" width="5.34" height="5.37" fill="#6c9acd" />
<rect x="598.10" y="440.12" width="5.34" height="5.37" fill="#87acd6" />
<rect x="603.44" y="440.12" width="5.34" height="5.37" fill="#9cbbdd" />
<rect x="608.78" y="440.12" width="5.34" height="5.37" fill="#12345a" />
<rect x="614.12" y="440.12" width="5.34" height="5.37" fill="#1d5390" />
<rect x="619.46" y="440.12" width="5.34" height="5.37" fill="#2f70b8" />
<rect x="624.80" y="440.12" width="5.34" height="5.37" fill="#5086c3" />
<rect x="630.14" y="440.12" width="5.34" height="5.37" fill="#6c9acd" />
<rect x="635.48" y="440.12" width="5.34" height="5.37" fill="#87acd6" />
<rect x="640.82" y="440.12" width="5.34" height="5.37" fill="#9cbbdd" />
<rect x="646.16" y="440.12" width="5.34" height="5.37" fill="#12345a" />
<rect x="651.50" y="440.12" width="5.34" height="5.37" fill="#1d5390" />
<rect x="656.84" y="440.12" width="5.34" height="5.37" fill="#2f70b8" />
<rect x="662.18" y="440.12" width="5.34" height="5.37" fill="#5086c3" />
<rect x="518.00" y="445.49" width="5.34" height="5.37" fill="#a9c2bc" />
<rect x="523.34" y="445.49" width="5.34" height="5.37" fill="#b8ccc8" />
<rect x="528.68" y="445.49" width="5.34" height="5.37" fill="#c6d7d3" />
<rect x="534.02" y="445.49" width="5.34" height="5.37" fill="#084242" />
<rect x="539.36" y="445.49" width="5.34" height="5.37" fill="#0d6a6a" />
<rect x="544.70" y="445.49" width="5.34" height="5.37" fill="#1c8a8a" />
<rect x="550.04" y="445.49" width="5.34" height="5.37" fill="#409d9d" />
<rect x="555.38" y="445.49" width="5.34" height="5.37" fill="#5fadad" />
<rect x="560.72" y="445.49" width="5.34" height="5.37" fill="#7cbbbb" />
<rect x="566.06" y="445.49" width="5.34" height="5.37" fill="#93c8c8" />
<rect x="571.40" y="445.49" width="5.34" height="5.37" fill="#084242" />
<rect x="576.74" y="445.49" width="5.34" height="5.37" fill="#0d6a6a" />
<rect x="582.08" y="445.49" width="5.34" height="5.37" fill="#1c8a8a" />
<rect x="587.42" y="445.49" width="5.34" height="5.37" fill="#409d9d" />
<rect x="592.76" y="445.49" width="5.34" height="5.37" fill="#5fadad" />
<rect x="598.10" y="445.49" width="5.34" height="5.37" fill="#7cbbbb" />
<rect x="603.44" y="445.49" width="5.34" height="5.37" fill="#93c8c8" />
<rect x="608.78" y="445.49" width="5.34" height="5.37" fill="#084242" />
<rect x="614.12" y="445.49" width="5.34" height="5.37" fill="#0d6a6a" />
<rect x="619.46" y="445.49" width="5.34" height="5.37" fill="#1c8a8a" />
<rect x="624.80" y="445.49" width="5.34" height="5.37" fill="#409d9d" />
<rect x="630.14" y="445.49" width="5.34" height="5.37" fill="#5fadad" />
<rect x="635.48" y="445.49" width="5.34" height="5.37" fill="#7cbbbb" />
<rect x="640.82" y="445.49" width="5.34" height="5.37" fill="#93c8c8" />
<rect x="646.16" y="445.49" width="5.34" height="5.37" fill="#084242" />
<rect x="651.50" y="445.49" width="5.34" height="5.37" fill="#0d6a6a" />
<rect x="656.84" y="445.49" width="5.34" height="5.37" fill="#1c8a8a" />
<rect x="662.18" y="445.49" width="5.34" height="5.37" fill="#409d9d" />
<rect x="518.00" y="450.86" width="5.34" height="5.37" fill="#adc3ac" />
<rect x="523.34" y="450.86" width="5.34" height="5.37" fill="#bbcdba" />
<rect x="528.68" y="450.86" width="5.34" height="5.37" fill="#c9d7c7" />
<rect x="534.02" y="450.86" width="5.34" height="5.37" fill="#11441f" />
<rect x="539.36" y="450.86" width="5.34" height="5.37" fill="#1b6d32" />
<rect x="544.70" y="450.86" width="5.34" height="5.37" fill="#2d8e48" />
<rect x="550.04" y="450.86" width="5.34" height="5.37" fill="#4ea065" />
<rect x="555.38" y="450.86" width="5.34" height="5.37" fill="#6baf7e" />
<rect x="560.72" y="450.86" width="5.34" height="5.37" fill="#85be95" />
<rect x="566.06" y="450.86" width="5.34" height="5.37" fill="#9cc9a8" />
<rect x="571.40" y="450.86" width="5.34" height="5.37" fill="#11441f" />
<rect x="576.74" y="450.86" width="5.34" height="5.37" fill="#1b6d32" />
<rect x="582.08" y="450.86" width="5.34" height="5.37" fill="#2d8e48" />
<rect x="587.42" y="450.86" width="5.34" height="5.37" fill="#4ea065" />
<rect x="592.76" y="450.86" width="5.34" height="5.37" fill="#6baf7e" />
<rect x="598.10" y="450.86" width="5.34" height="5.37" fill="#85be95" />
<rect x="603.44" y="450.86" width="5.34" height="5.37" fill="#9cc9a8" />
<rect x="608.78" y="450.86" width="5.34" height="5.37" fill="#11441f" />
<rect x="614.12" y="450.86" width="5.34" height="5.37" fill="#1b6d32" />
<rect x="619.46" y="450.86" width="5.34" height="5.37" fill="#2d8e48" />
<rect x="624.80" y="450.86" width="5.34" height="5.37" fill="#4ea065" />
<rect x="630.14" y="450.86" width="5.34" height="5.37" fill="#6baf7e" />
<rect x="635.48" y="450.86" width="5.34" height="5.37" fill="#85be95" />
<rect x="640.82" y="450.86" width="5.34" height="5.37" fill="#9cc9a8" />
<rect x="646.16" y="450.86" width="5.34" height="5.37" fill="#11441f" />
<rect x="651.50" y="450.86" width="5.34" height="5.37" fill="#1b6d32" />
<rect x="656.84" y="450.86" width="5.34" height="5.37" fill="#2d8e48" />
<rect x="662.18" y="450.86" width="5.34" height="5.37" fill="#4ea065" />
<rect x="518.00" y="456.23" width="5.34" height="5.37" fill="#c6c7a4" />
<rect x="523.34" y="456.23" width="5.34" height="5.37" fill="#d0d0b3" />
<rect x="528.68" y="456.23" width="5.34" height="5.37" fill="#d9dac2" />
<rect x="534.02" y="456.23" width="5.34" height="5.37" fill="#444c0f" />
<rect x="539.36" y="456.23" width="5.34" height="5.37" fill="#6d7a18" />
<rect x="544.70" y="456.23" width="5.34" height="5.37" fill="#8e9d29" />
<rect x="550.04" y="456.23" width="5.34" height="5.37" fill="#a0ad4b" />
<rect x="555.38" y="456.23" width="5.34" height="5.37" fill="#afba68" />
<rect x="560.72" y="456.23" width="5.34" height="5.37" fill="#bec683" />
<rect x="566.06" y="456.23" width="5.34" height="5.37" fill="#c9d19a" />
<rect x="571.40" y="456.23" width="5.34" height="5.37" fill="#444c0f" />
<rect x="576.74" y="456.23" width="5.34" height="5.37" fill="#6d7a18" />
<rect x="582.08" y="456.23" width="5.34" height="5.37" fill="#8e9d29" />
<rect x="587.42" y="456.23" width="5.34" height="5.37" fill="#a0ad4b" />
<rect x="592.76" y="456.23" width="5.34" height="5.37" fill="#afba68" />
<rect x="598.10" y="456.23" width="5.34" height="5.37" fill="#bec683" />
<rect x="603.44" y="456.23" width="5.34" height="5.37" fill="#c9d19a" />
<rect x="608.78" y="456.23" width="5.34" height="5.37" fill="#444c0f" />
<rect x="614.12" y="456.23" width="5.34" height="5.37" fill="#6d7a18" />
<rect x="619.46" y="456.23" width="5.34" height="5.37" fill="#8e9d29" />
<rect x="624.80" y="456.23" width="5.34" height="5.37" fill="#a0ad4b" />
<rect x="630.14" y="456.23" width="5.34" height="5.37" fill="#afba68" />
<rect x="635.48" y="456.23" width="5.34" height="5.37" fill="#bec683" />
<rect x="640.82" y="456.23" width="5.34" height="5.37" fill="#c9d19a" />
<rect x="646.16" y="456.23" width="5.34" height="5.37" fill="#444c0f" />
<rect x="651.50" y="456.23" width="5.34" height="5.37" fill="#6d7a18" />
<rect x="656.84" y="456.23" width="5.34" height="5.37" fill="#8e9d29" />
<rect x="662.18" y="456.23" width="5.34" height="5.37" fill="#a0ad4b" />
<rect x="518.00" y="461.60" width="5.34" height="5.37" fill="#d8d1a3" />
<rect x="523.34" y="461.60" width="5.34" height="5.37" fill="#ded8b2" />
<rect x="528.68" y="461.60" width="5.34" height="5.37" fill="#e5e0c2" />
<rect x="534.02" y="461.60" width="5.34" height="5.37" fill="#6a600e" />
<rect x="539.36" y="461.60" width="5.34" height="5.37" fill="#aa9a16" />
<rect x="544.70" y="461.60" width="5.34" height="5.37" fill="#d6c327" />
<rect x="550.04" y="461.60" width="5.34" height="5.37" fill="#ddcd49" />
<rect x="555.38" y="461.60" width="5.34" height="5.37" fill="#e2d567" />
<rect x="560.72" y="461.60" width="5.34" height="5.37" fill="#e7dc82" />
<rect x="566.06" y="461.60" width="5.34" height="5.37" fill="#ece399" />
<rect x="571.40" y="461.60" width="5.34" height="5.37" fill="#6a600e" />
<rect x="576.74" y="461.60" width="5.34" height="5.37" fill="#aa9a16" />
<rect x="582.08" y="461.60" width="5.34" height="5.37" fill="#d6c327" />
<rect x="587.42" y="461.60" width="5.34" height="5.37" fill="#ddcd49" />
<rect x="592.76" y="461.60" width="5.34" height="5.37" fill="#e2d567" />
<rect x="598.10" y="461.60" width="5.34" height="5.37" fill="#e7dc82" />
<rect x="603.44" y="461.60" width="5.34" height="5.37" fill="#ece399" />
<rect x="608.78" y="461.60" width="5.34" height="5.37" fill="#6a600e" />
<rect x="614.12" y="461.60" width="5.34" height="5.37" fill="#aa9a16" />
<rect x="619.46" y="461.60" width="5.34" height="5.37" fill="#d6c327" />
<rect x="624.80" y="461.60" width="5.34" height="5.37" fill="#ddcd49" />
<rect x="630.14" y="461.60" width="5.34" height="5.37" fill="#e2d567" />
<rect x="635.48" y="461.60" width="5.34" height="5.37" fill="#e7dc82" />
<rect x="640.82" y="461.60" width="5.34" height="5.37" fill="#ece399" />
<rect x="646.16" y="461.60" width="5.34" height="5.37" fill="#0e4866" />
<rect x="651.50" y="461.60" width="5.34" height="5.37" fill="#1673a3" />
<rect x="656.84" y="461.60" width="5.34" height="5.37" fill="#2796cf" />
<rect x="662.18" y="461.60" width="5.34" height="5.37" fill="#49a6d6" />
<rect x="518.00" y="466.97" width="5.34" height="5.37" fill="#b0c7cd" />
<rect x="523.34" y="466.97" width="5.34" height="5.37" fill="#bdd0d5" />
<rect x="528.68" y="466.97" width="5.34" height="5.37" fill="#cadadd" />
<rect x="534.02" y="466.97" width="5.34" height="5.37" fill="#164c64" />
<rect x="539.36" y="466.97" width="5.34" height="5.37" fill="#237aa0" />
<rect x="544.70" y="466.97" width="5.34" height="5.37" fill="#379dcb" />
<rect x="550.04" y="466.97" width="5.34" height="5.37" fill="#56add3" />
<rect x="555.38" y="466.97" width="5.34" height="5.37" fill="#72bada" />
<rect x="560.72" y="466.97" width="5.34" height="5.37" fill="#8bc6e1" />
<rect x="566.06" y="466.97" width="5.34" height="5.37" fill="#a0d1e6" />
<rect x="571.40" y="466.97" width="5.34" height="5.37" fill="#164c64" />
<rect x="576.74" y="466.97" width="5.34" height="5.37" fill="#237aa0" />
<rect x="582.08" y="466.97" width="5.34" height="5.37" fill="#379dcb" />
<rect x="587.42" y="466.97" width="5.34" height="5.37" fill="#56add3" />
<rect x="592.76" y="466.97" width="5.34" height="5.37" fill="#72bada" />
<rect x="598.10" y="466.97" width="5.34" height="5.37" fill="#8bc6e1" />
<rect x="603.44" y="466.97" width="5.34" height="5.37" fill="#a0d1e6" />
<rect x="608.78" y="466.97" width="5.34" height="5.37" fill="#164c64" />
<rect x="614.12" y="466.97" width="5.34" height="5.37" fill="#237aa0" />
<rect x="619.46" y="466.97" width="5.34" height="5.37" fill="#379dcb" />
<rect x="624.80" y="466.97" width="5.34" height="5.37" fill="#56add3" />
<rect x="630.14" y="466.97" width="5.34" height="5.37" fill="#72bada" />
<rect x="635.48" y="466.97" width="5.34" height="5.37" fill="#8bc6e1" />
<rect x="640.82" y="466.97" width="5.34" height="5.37" fill="#a0d1e6" />
<rect x="646.16" y="466.97" width="5.34" height="5.37" fill="#164c64" />
<rect x="651.50" y="466.97" width="5.34" height="5.37" fill="#237aa0" />
<rect x="656.84" y="466.97" width="5.34" height="5.37" fill="#379dcb" />
<rect x="662.18" y="466.97" width="5.34" height="5.37" fill="#56add3" />
<defs><pattern id="pg" x="518.0" y="300.5" width="5.34" height="5.37" patternUnits="userSpaceOnUse"><path d="M5.34 2.69 L5.34 5.37 L2.67 5.37z" fill="#fff" fill-opacity="0.7"/><circle cx="4.27" cy="4.30" r="0.45" fill="#333" fill-opacity="0.55"/><path d="M0 0 H5.34 M0 0 V5.37" stroke="#101010" stroke-width="0.85" stroke-opacity="0.85" fill="none"/></pattern></defs>
<rect x="518.00" y="300.50" width="149.52" height="171.84" fill="url(#pg)" />
<rect x="660.60" y="208.20" width="51.90" height="181.40" fill="#f5f5f5" />
<rect x="660.60" y="208.20" width="0.50" height="181.40" fill="#bbb" />
<rect x="660.60" y="208.20" width="51.90" height="10.00" fill="#d2d2d2" />
<rect x="660.60" y="208.20" width="51.90" height="0.60" fill="#f4f4f4" />
<rect x="663.00" y="211.60" width="20.40" height="6.60" fill="#ececec" stroke="#b4b4b4" stroke-width="0.35"/>
<text x="664.40" y="216.60" font-family="'Liberation Sans', sans-serif" font-size="4.7" fill="#333" >Layers ×</text>
<rect x="661.10" y="218.40" width="16.40" height="7.62" fill="#e6e6e6" stroke="#c4c4c4" stroke-width="0.3"/>
<rect x="669.40" y="218.40" width="0.35" height="7.62" fill="#c4c4c4" />
<ellipse cx="666" cy="222.30" rx="2" ry="1.5" fill="#333"/><circle cx="666" cy="222.00" r="0.55" fill="#ddd"/>
<rect x="675.20" y="218.70" width="1.50" height="7.00" fill="#5b86e8" />
<rect x="683.60" y="218.40" width="29.00" height="7.62" fill="#2f62c8" />
<path d="M679.6 221.20 l1.3 1.6 l1.3 -1.6z" fill="#777"/>
<rect x="685.00" y="219.30" width="5.60" height="5.80" fill="#111" stroke="#c8a820" stroke-width="0.5"/>
<circle cx="687.8" cy="222.30" r="1.5" fill="#8a8a20"/>
<text x="693.00" y="223.90" font-family="'Liberation Sans', sans-serif" font-size="4.2" fill="#fff" font-weight="bold" >Layer 1</text>
<rect x="661.10" y="226.02" width="16.40" height="7.62" fill="#e6e6e6" stroke="#c4c4c4" stroke-width="0.3"/>
<rect x="669.40" y="226.02" width="0.35" height="7.62" fill="#c4c4c4" />
<ellipse cx="666" cy="229.92" rx="2" ry="1.5" fill="#333"/><circle cx="666" cy="229.62" r="0.55" fill="#ddd"/>
<rect x="675.20" y="226.32" width="1.50" height="7.00" fill="#5b86e8" />
<rect x="677.00" y="226.02" width="35.50" height="7.62" fill="#fdfdfd" stroke="#d4d4d4" stroke-width="0.3"/>
<path d="M685.6 228.82 l1.3 1.6 l1.3 -1.6z" fill="#999"/>
<rect x="691.00" y="226.92" width="5.80" height="5.80" fill="#9a8a20" stroke="#555" stroke-width="0.4"/>
<text x="698.80" y="231.52" font-family="'Liberation Sans', sans-serif" font-size="4.1" fill="#333" >&lt;Group&gt;</text>
<rect x="661.10" y="233.64" width="16.40" height="7.62" fill="#e6e6e6" stroke="#c4c4c4" stroke-width="0.3"/>
<rect x="669.40" y="233.64" width="0.35" height="7.62" fill="#c4c4c4" />
<ellipse cx="666" cy="237.54" rx="2" ry="1.5" fill="#333"/><circle cx="666" cy="237.24" r="0.55" fill="#ddd"/>
<rect x="675.20" y="233.94" width="1.50" height="7.00" fill="#5b86e8" />
<rect x="677.00" y="233.64" width="35.50" height="7.62" fill="#fdfdfd" stroke="#d4d4d4" stroke-width="0.3"/>
<rect x="691.00" y="234.54" width="5.80" height="5.80" fill="#fff" stroke="#555" stroke-width="0.4"/>
<text x="698.80" y="239.14" font-family="'Liberation Sans', sans-serif" font-size="4.1" fill="#333" >&lt;Path&gt;</text>
<rect x="661.10" y="241.26" width="16.40" height="7.62" fill="#e6e6e6" stroke="#c4c4c4" stroke-width="0.3"/>
<rect x="669.40" y="241.26" width="0.35" height="7.62" fill="#c4c4c4" />
<ellipse cx="666" cy="245.16" rx="2" ry="1.5" fill="#333"/><circle cx="666" cy="244.86" r="0.55" fill="#ddd"/>
<rect x="675.20" y="241.56" width="1.50" height="7.00" fill="#5b86e8" />
<rect x="677.00" y="241.26" width="35.50" height="7.62" fill="#fdfdfd" stroke="#d4d4d4" stroke-width="0.3"/>
<rect x="691.00" y="242.16" width="5.80" height="5.80" fill="#fff" stroke="#555" stroke-width="0.4"/>
<text x="698.80" y="246.76" font-family="'Liberation Sans', sans-serif" font-size="4.1" fill="#333" >&lt;Path&gt;</text>
<rect x="661.10" y="248.88" width="16.40" height="7.62" fill="#e6e6e6" stroke="#c4c4c4" stroke-width="0.3"/>
<rect x="669.40" y="248.88" width="0.35" height="7.62" fill="#c4c4c4" />
<ellipse cx="666" cy="252.78" rx="2" ry="1.5" fill="#333"/><circle cx="666" cy="252.48" r="0.55" fill="#ddd"/>
<rect x="675.20" y="249.18" width="1.50" height="7.00" fill="#5b86e8" />
<rect x="677.00" y="248.88" width="35.50" height="7.62" fill="#fdfdfd" stroke="#d4d4d4" stroke-width="0.3"/>
<rect x="691.00" y="249.78" width="5.80" height="5.80" fill="#f8f8f8" stroke="#555" stroke-width="0.4"/>
<text x="698.80" y="254.38" font-family="'Liberation Sans', sans-serif" font-size="4.1" fill="#333" >djblacks...</text>
<rect x="661.10" y="256.50" width="16.40" height="7.62" fill="#e6e6e6" stroke="#c4c4c4" stroke-width="0.3"/>
<rect x="669.40" y="256.50" width="0.35" height="7.62" fill="#c4c4c4" />
<ellipse cx="666" cy="260.40" rx="2" ry="1.5" fill="#333"/><circle cx="666" cy="260.10" r="0.55" fill="#ddd"/>
<rect x="675.20" y="256.80" width="1.50" height="7.00" fill="#5b86e8" />
<rect x="677.00" y="256.50" width="35.50" height="7.62" fill="#fdfdfd" stroke="#d4d4d4" stroke-width="0.3"/>
<rect x="691.00" y="257.40" width="5.80" height="5.80" fill="#e8e8c0" stroke="#555" stroke-width="0.4"/>
<text x="698.80" y="262.00" font-family="'Liberation Sans', sans-serif" font-size="4.1" fill="#333" >&lt;Compo...</text>
<rect x="661.10" y="264.12" width="16.40" height="7.62" fill="#e6e6e6" stroke="#c4c4c4" stroke-width="0.3"/>
<rect x="669.40" y="264.12" width="0.35" height="7.62" fill="#c4c4c4" />
<ellipse cx="666" cy="268.02" rx="2" ry="1.5" fill="#333"/><circle cx="666" cy="267.72" r="0.55" fill="#ddd"/>
<rect x="675.20" y="264.42" width="1.50" height="7.00" fill="#5b86e8" />
<rect x="677.00" y="264.12" width="35.50" height="7.62" fill="#fdfdfd" stroke="#d4d4d4" stroke-width="0.3"/>
<rect x="691.00" y="265.02" width="5.80" height="5.80" fill="#f0e0d0" stroke="#555" stroke-width="0.4"/>
<text x="698.80" y="269.62" font-family="'Liberation Sans', sans-serif" font-size="4.1" fill="#333" >&lt;Compo...</text>
<rect x="661.10" y="271.74" width="16.40" height="7.62" fill="#e6e6e6" stroke="#c4c4c4" stroke-width="0.3"/>
<rect x="669.40" y="271.74" width="0.35" height="7.62" fill="#c4c4c4" />
<ellipse cx="666" cy="275.64" rx="2" ry="1.5" fill="#333"/><circle cx="666" cy="275.34" r="0.55" fill="#ddd"/>
<rect x="675.20" y="272.04" width="1.50" height="7.00" fill="#5b86e8" />
<rect x="677.00" y="271.74" width="35.50" height="7.62" fill="#fdfdfd" stroke="#d4d4d4" stroke-width="0.3"/>
<rect x="691.00" y="272.64" width="5.80" height="5.80" fill="#fff" stroke="#555" stroke-width="0.4"/>
<text x="698.80" y="277.24" font-family="'Liberation Sans', sans-serif" font-size="4.1" fill="#333" >Da ReMi...</text>
<rect x="661.10" y="279.36" width="16.40" height="7.62" fill="#e6e6e6" stroke="#c4c4c4" stroke-width="0.3"/>
<rect x="669.40" y="279.36" width="0.35" height="7.62" fill="#c4c4c4" />
<ellipse cx="666" cy="283.26" rx="2" ry="1.5" fill="#333"/><circle cx="666" cy="282.96" r="0.55" fill="#ddd"/>
<rect x="675.20" y="279.66" width="1.50" height="7.00" fill="#5b86e8" />
<rect x="677.00" y="279.36" width="35.50" height="7.62" fill="#fdfdfd" stroke="#d4d4d4" stroke-width="0.3"/>
<rect x="691.00" y="280.26" width="5.80" height="5.80" fill="#f4f4d0" stroke="#555" stroke-width="0.4"/>
<text x="698.80" y="284.86" font-family="'Liberation Sans', sans-serif" font-size="4.1" fill="#333" >&lt;Path&gt;</text>
<rect x="661.10" y="286.98" width="16.40" height="7.62" fill="#e6e6e6" stroke="#c4c4c4" stroke-width="0.3"/>
<rect x="669.40" y="286.98" width="0.35" height="7.62" fill="#c4c4c4" />
<ellipse cx="666" cy="290.88" rx="2" ry="1.5" fill="#333"/><circle cx="666" cy="290.58" r="0.55" fill="#ddd"/>
<rect x="675.20" y="287.28" width="1.50" height="7.00" fill="#5b86e8" />
<rect x="677.00" y="286.98" width="35.50" height="7.62" fill="#fdfdfd" stroke="#d4d4d4" stroke-width="0.3"/>
<rect x="691.00" y="287.88" width="5.80" height="5.80" fill="#f0e850" stroke="#555" stroke-width="0.4"/>
<text x="698.80" y="292.48" font-family="'Liberation Sans', sans-serif" font-size="4.1" fill="#333" >&lt;Path&gt;</text>
<rect x="661.10" y="294.60" width="16.40" height="7.62" fill="#e6e6e6" stroke="#c4c4c4" stroke-width="0.3"/>
<rect x="669.40" y="294.60" width="0.35" height="7.62" fill="#c4c4c4" />
<ellipse cx="666" cy="298.50" rx="2" ry="1.5" fill="#333"/><circle cx="666" cy="298.20" r="0.55" fill="#ddd"/>
<rect x="675.20" y="294.90" width="1.50" height="7.00" fill="#5b86e8" />
<rect x="677.00" y="294.60" width="35.50" height="7.62" fill="#fdfdfd" stroke="#d4d4d4" stroke-width="0.3"/>
<rect x="691.00" y="295.50" width="5.80" height="5.80" fill="#222" stroke="#555" stroke-width="0.4"/>
<text x="698.80" y="300.10" font-family="'Liberation Sans', sans-serif" font-size="4.1" fill="#333" >&lt;Path&gt;</text>
<rect x="661.10" y="302.22" width="16.40" height="7.62" fill="#e6e6e6" stroke="#c4c4c4" stroke-width="0.3"/>
<rect x="669.40" y="302.22" width="0.35" height="7.62" fill="#c4c4c4" />
<ellipse cx="666" cy="306.12" rx="2" ry="1.5" fill="#333"/><circle cx="666" cy="305.82" r="0.55" fill="#ddd"/>
<rect x="675.20" y="302.52" width="1.50" height="7.00" fill="#5b86e8" />
<rect x="677.00" y="302.22" width="35.50" height="7.62" fill="#fdfdfd" stroke="#d4d4d4" stroke-width="0.3"/>
<rect x="691.00" y="303.12" width="5.80" height="5.80" fill="#7a8a20" stroke="#555" stroke-width="0.4"/>
<text x="698.80" y="307.72" font-family="'Liberation Sans', sans-serif" font-size="4.1" fill="#333" >&lt;Path&gt;</text>
<rect x="661.10" y="309.84" width="16.40" height="7.62" fill="#e6e6e6" stroke="#c4c4c4" stroke-width="0.3"/>
<rect x="669.40" y="309.84" width="0.35" height="7.62" fill="#c4c4c4" />
<ellipse cx="666" cy="313.74" rx="2" ry="1.5" fill="#333"/><circle cx="666" cy="313.44" r="0.55" fill="#ddd"/>
<rect x="675.20" y="310.14" width="1.50" height="7.00" fill="#5b86e8" />
<rect x="677.00" y="309.84" width="35.50" height="7.62" fill="#fdfdfd" stroke="#d4d4d4" stroke-width="0.3"/>
<rect x="691.00" y="310.74" width="5.80" height="5.80" fill="#fff" stroke="#555" stroke-width="0.4"/>
<text x="698.80" y="315.34" font-family="'Liberation Sans', sans-serif" font-size="4.1" fill="#333" >&lt;Compo...</text>
<rect x="661.10" y="317.46" width="16.40" height="7.62" fill="#e6e6e6" stroke="#c4c4c4" stroke-width="0.3"/>
<rect x="669.40" y="317.46" width="0.35" height="7.62" fill="#c4c4c4" />
<ellipse cx="666" cy="321.36" rx="2" ry="1.5" fill="#333"/><circle cx="666" cy="321.06" r="0.55" fill="#ddd"/>
<rect x="675.20" y="317.76" width="1.50" height="7.00" fill="#5b86e8" />
<rect x="677.00" y="317.46" width="35.50" height="7.62" fill="#fdfdfd" stroke="#d4d4d4" stroke-width="0.3"/>
<rect x="691.00" y="318.36" width="5.80" height="5.80" fill="#111" stroke="#555" stroke-width="0.4"/>
<text x="698.80" y="322.96" font-family="'Liberation Sans', sans-serif" font-size="4.1" fill="#333" >&lt;Path&gt;</text>
<rect x="660.60" y="383.40" width="51.90" height="6.20" fill="#dcdcdc" stroke="#bcbcbc" stroke-width="0.3"/>
<text x="664.60" y="388.20" font-family="'Liberation Sans', sans-serif" font-size="3.9" fill="#333" >1 Layer</text>
<circle cx="694.6" cy="386.6" r="1.4" fill="none" stroke="#444" stroke-width="0.5"/><path d="M699.6 385 h3.4 v3.2 h-3.4z M704.6 385.6 l1.2 -0.8 h2 v3.4 h-3.2z" fill="#eee" stroke="#444" stroke-width="0.45"/>
<defs><linearGradient id="stt" x1="0" y1="0" x2="0" y2="1"><stop offset="0" stop-color="#5cb85c"/><stop offset="0.2" stop-color="#3c9a3c"/><stop offset="1" stop-color="#2f8a2f"/></linearGradient></defs>
<path d="M68.2 472 H108.6 Q113 478.5 108.6 485 H68.2z" fill="url(#stt)"/>
<g transform="translate(73 474.6) scale(1.15)"><path d="M0 0.4 q1.6 -0.9 3 0 v2.6 q-1.4 -0.9 -3 0z" fill="#e8442c"/><path d="M3.5 0.6 q1.6 0.9 3 0 v2.6 q-1.4 0.9 -3 0z" fill="#74c043"/><path d="M0 3.6 q1.6 -0.9 3 0 v2.6 q-1.4 -0.9 -3 0z" fill="#3b8ee8"/><path d="M3.5 3.8 q1.6 0.9 3 0 v2.6 q-1.4 0.9 -3 0z" fill="#f6c21c"/></g>
<text x="83.60" y="481.60" font-family="'Liberation Sans', sans-serif" font-size="8.2" fill="#fff" font-weight="bold" font-style="italic">start</text>
<rect x="117.00" y="473.30" width="58.50" height="10.60" fill="#3a7cf0" rx="1.2" stroke="#5a94f8" stroke-width="0.4"/>
<rect x="119.60" y="475.40" width="5.60" height="6.20" fill="#e0c040" rx="0.6"/>
<text x="127.40" y="480.90" font-family="'Liberation Sans', sans-serif" font-size="5.2" fill="#fff" >Magic Video Co...</text>
<rect x="177.00" y="473.30" width="60.00" height="10.60" fill="#1e4fb4" rx="1.2" stroke="#173c8c" stroke-width="0.4"/>
<rect x="179.60" y="475.40" width="5.60" height="6.20" fill="#e8861c" rx="0.6"/>
<text x="187.40" y="480.90" font-family="'Liberation Sans', sans-serif" font-size="5.2" fill="#fff" >Adobe Illustrator</text>
<rect x="239.00" y="473.30" width="58.00" height="10.60" fill="#3a7cf0" rx="1.2" stroke="#5a94f8" stroke-width="0.4"/>
<rect x="241.60" y="475.40" width="5.60" height="6.20" fill="#d02020" rx="0.6"/>
<text x="249.40" y="480.90" font-family="'Liberation Sans', sans-serif" font-size="5.2" fill="#fff" >Kaspersky Inter...</text>
<rect x="298.50" y="473.30" width="60.10" height="10.60" fill="#3a7cf0" rx="1.2" stroke="#5a94f8" stroke-width="0.4"/>
<rect x="301.10" y="475.40" width="5.60" height="6.20" fill="#e06a1c" rx="0.6"/>
<text x="308.90" y="480.90" font-family="'Liberation Sans', sans-serif" font-size="5.2" fill="#fff" >10 Firefox</text>
<path d="M353.2 477.8 l1.5 1.7 l1.5 -1.7z" fill="#fff"/>
<rect x="360.00" y="473.30" width="60.00" height="10.60" fill="#3a7cf0" rx="1.2" stroke="#5a94f8" stroke-width="0.4"/>
<rect x="362.60" y="475.40" width="5.60" height="6.20" fill="#d8d8d8" rx="0.6"/>
<text x="370.40" y="480.90" font-family="'Liberation Sans', sans-serif" font-size="5.2" fill="#fff" >2 Volume Co...</text>
<path d="M414.6 477.8 l1.5 1.7 l1.5 -1.7z" fill="#fff"/>
<rect x="421.40" y="473.30" width="59.00" height="10.60" fill="#3a7cf0" rx="1.2" stroke="#5a94f8" stroke-width="0.4"/>
<rect x="424.00" y="475.40" width="5.60" height="6.20" fill="#8cc8e8" rx="0.6"/>
<text x="431.80" y="480.90" font-family="'Liberation Sans', sans-serif" font-size="5.2" fill="#fff" >8 Notepad</text>
<path d="M475.0 477.8 l1.5 1.7 l1.5 -1.7z" fill="#fff"/>
<rect x="482.00" y="473.30" width="58.40" height="10.60" fill="#3a7cf0" rx="1.2" stroke="#5a94f8" stroke-width="0.4"/>
<rect x="484.60" y="475.40" width="5.60" height="6.20" fill="#40b040" rx="0.6"/>
<text x="492.40" y="480.90" font-family="'Liberation Sans', sans-serif" font-size="5.2" fill="#fff" >Macromedia Dire...</text>
<rect x="542.00" y="473.30" width="59.00" height="10.60" fill="#3a7cf0" rx="1.2" stroke="#5a94f8" stroke-width="0.4"/>
<rect x="544.60" y="475.40" width="5.60" height="6.20" fill="#f0d060" rx="0.6"/>
<text x="552.40" y="480.90" font-family="'Liberation Sans', sans-serif" font-size="5.2" fill="#fff" >5 Windows E...</text>
<path d="M595.6 477.8 l1.5 1.7 l1.5 -1.7z" fill="#fff"/>
<rect x="603.00" y="473.30" width="60.00" height="10.60" fill="#3a7cf0" rx="1.2" stroke="#5a94f8" stroke-width="0.4"/>
<rect x="605.60" y="475.40" width="5.60" height="6.20" fill="#50b850" rx="0.6"/>
<text x="613.40" y="480.90" font-family="'Liberation Sans', sans-serif" font-size="5.2" fill="#fff" >8 Windows Li...</text>
<path d="M657.6 477.8 l1.5 1.7 l1.5 -1.7z" fill="#fff"/>
<path d="M244.2 476.4 v4.4 M244.2 478.8 l2.6 -2.4 M244.2 478.6 l2.6 2.4" stroke="#fff" stroke-width="0.9" fill="none"/>
<text x="181.4" y="480.4" font-family="'Liberation Sans', sans-serif" font-size="4.4" font-weight="bold" fill="#fff4dc">Ai</text>
<circle cx="303.9" cy="478.5" r="3.1" fill="#e06a1c"/><circle cx="304.3" cy="478.2" r="1.7" fill="#3458c8"/>
<circle cx="487.4" cy="478.5" r="3.1" fill="#3cb43c" stroke="#e8f8e8" stroke-width="0.5"/>
<defs><linearGradient id="tray" x1="0" y1="0" x2="0" y2="1"><stop offset="0" stop-color="#3ab0f4"/><stop offset="0.3" stop-color="#1890e8"/><stop offset="1" stop-color="#1480d8"/></linearGradient></defs>
<rect x="665.40" y="472.00" width="47.10" height="13.00" fill="url(#tray)" />
<rect x="665.20" y="472.00" width="0.60" height="13.00" fill="#0c50a8" />
<circle cx="670.6" cy="478.6" r="2.2" fill="#2c5cc8" stroke="#bcd4f8" stroke-width="0.4"/><path d="M669.8 477.6 l1.6 1 l-1.6 1z" fill="#fff"/>
<rect x="675.40" y="475.00" width="6.40" height="7.00" fill="#fff" rx="0.5"/>
<path d="M676.8 476.2 v4.8 M676.8 478.8 l3.2 -2.6 M676.8 478.6 l3.2 2.6" stroke="#d01818" stroke-width="1.1" fill="none"/>
<text x="687.40" y="480.80" font-family="'Liberation Sans', sans-serif" font-size="5.2" fill="#fff" >2:47 AM</text>
</svg>
</body></html>
